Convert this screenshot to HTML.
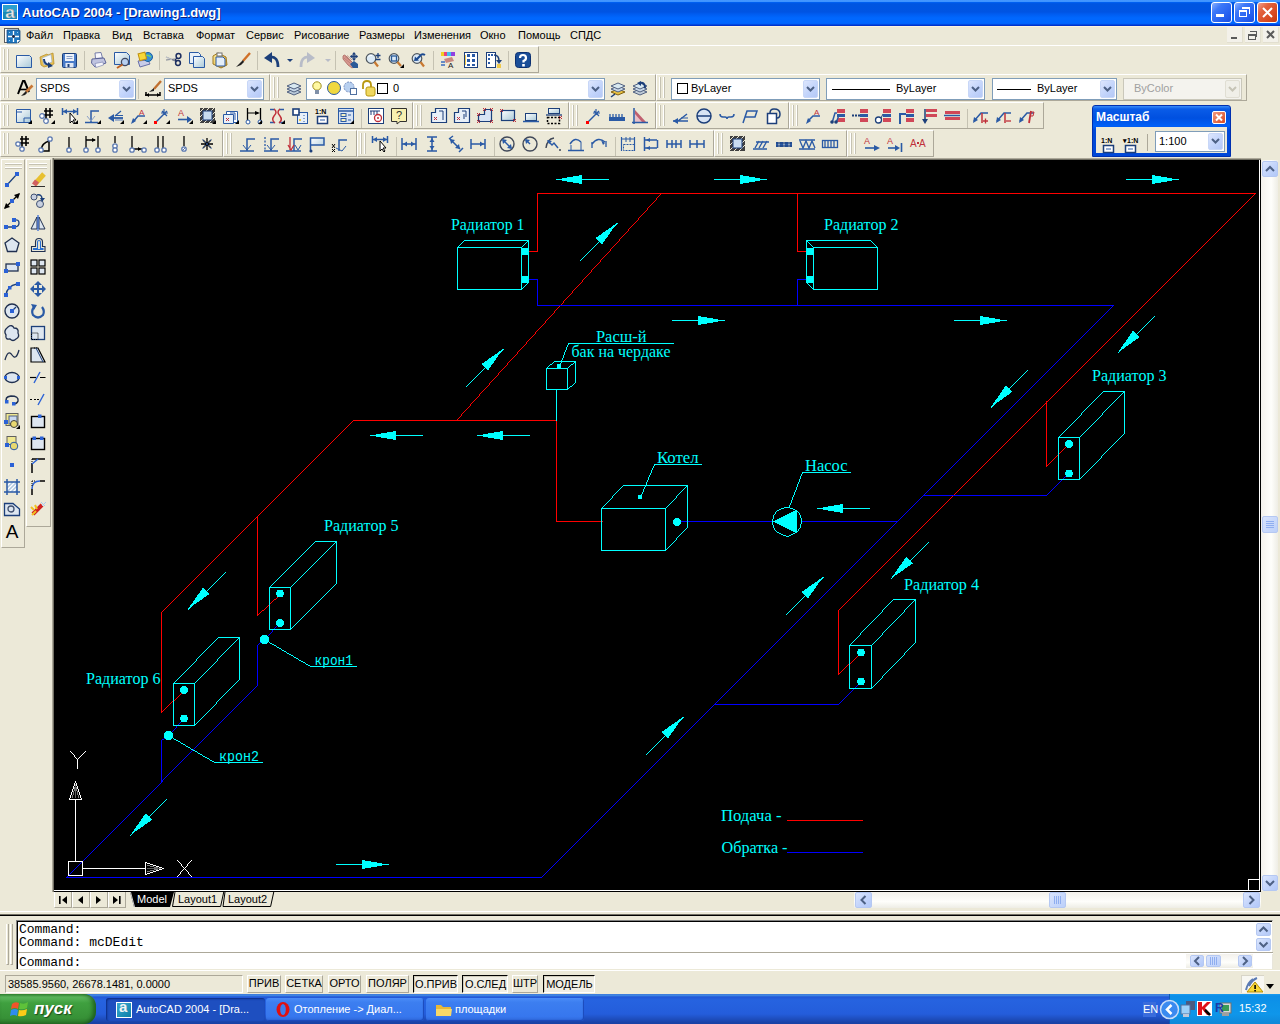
<!DOCTYPE html><html><head><meta charset="utf-8"><style>html,body{margin:0;padding:0}body{width:1280px;height:1024px;overflow:hidden;position:relative;background:#ECE9D8;font-family:"Liberation Sans",sans-serif}svg{display:block}</style></head><body><div style="position:absolute;left:0px;top:0px;width:1280px;height:26px;background:linear-gradient(to bottom,#4496FE 0px,#3D93FF 2px,#0066F8 2px,#0058E8 3px,#0055E0 4px,#0054E3 12px,#005CF0 14px,#0068FF 18px,#0066FF 23px,#0060F8 24px,#0033CC 25px,#0033CC 26px)"></div>
<svg style="position:absolute;left:2px;top:4px" width="16" height="16"><rect x="0" y="0" width="16" height="16" fill="#fff"/><rect x="1" y="1" width="14" height="14" fill="#1888B8"/><rect x="1" y="1" width="14" height="7" fill="#2AA0D0"/><text x="8" y="14" text-anchor="middle" font-family="Liberation Sans" font-weight="bold" font-size="17" fill="#E8ECEC" stroke="#808888" stroke-width="0.4">a</text></svg>
<div style="position:absolute;left:22px;top:5px;white-space:nowrap;line-height:normal;font:bold 13px 'Liberation Sans';letter-spacing:0px;color:#fff;text-shadow:1px 1px 0 #0A1E80">AutoCAD 2004 - [Drawing1.dwg]</div>
<div style="position:absolute;left:1211px;top:2px;width:21px;height:21px;box-sizing:border-box;border:1px solid #fff;border-radius:3px;background:linear-gradient(135deg,#8AB0FF 0%,#3C78F8 30%,#2660F0 70%,#1A4EE0 100%)"></div>
<div style="position:absolute;left:1216px;top:14px;width:8px;height:3px;background:#fff"></div>
<div style="position:absolute;left:1234px;top:2px;width:21px;height:21px;box-sizing:border-box;border:1px solid #fff;border-radius:3px;background:linear-gradient(135deg,#8AB0FF 0%,#3C78F8 30%,#2660F0 70%,#1A4EE0 100%)"></div>
<div style="position:absolute;left:1239px;top:10px;width:8px;height:7px;box-sizing:border-box;border:1px solid #fff;border-top-width:2px"></div>
<div style="position:absolute;left:1242px;top:7px;width:8px;height:7px;box-sizing:border-box;border:1px solid #fff;border-top-width:2px;border-left:none;border-bottom:none"></div>
<div style="position:absolute;left:1257px;top:2px;width:21px;height:21px;box-sizing:border-box;border:1px solid #fff;border-radius:3px;background:linear-gradient(135deg,#F0A090 0%,#E2623E 30%,#D84A22 70%,#C23A10 100%)"></div>
<svg style="position:absolute;left:1257px;top:2px" width="21" height="21"><path d="M6,6 L15,15 M15,6 L6,15" stroke="#fff" stroke-width="2"/></svg>
<div style="position:absolute;left:0px;top:26px;width:1280px;height:19px;background:#ECE9D8"></div>
<div style="position:absolute;left:0px;top:26px;width:1280px;height:1px;background:#FAF3E0"></div>
<div style="position:absolute;left:0px;top:45px;width:1280px;height:1px;background:#fff"></div>
<svg style="position:absolute;left:4px;top:28px" width="17" height="16"><rect x="0.5" y="0.5" width="14" height="14" fill="#fff" stroke="#606060"/><path d="M3,2 H15 Q16,2 16,3 V13 L13,15 H3 Z" fill="#1F78C0" stroke="#1A4A80" stroke-width="0.8"/><path d="M9.5,3 V14 M4,8.5 H15" stroke="#fff" stroke-width="1.3"/><circle cx="9.5" cy="8.5" r="1.4" fill="#102040"/><g fill="#9CD0F0"><rect x="5" y="4" width="1" height="1"/><rect x="13" y="4" width="1" height="1"/><rect x="5" y="12" width="1" height="1"/></g><path d="M13,15 L16,12 H13 Z" fill="#fff"/></svg>
<div style="position:absolute;left:26px;top:29px;white-space:nowrap;line-height:normal;font:11px 'Liberation Sans';color:#000">Файл</div>
<div style="position:absolute;left:63px;top:29px;white-space:nowrap;line-height:normal;font:11px 'Liberation Sans';color:#000">Правка</div>
<div style="position:absolute;left:112px;top:29px;white-space:nowrap;line-height:normal;font:11px 'Liberation Sans';color:#000">Вид</div>
<div style="position:absolute;left:143px;top:29px;white-space:nowrap;line-height:normal;font:11px 'Liberation Sans';color:#000">Вставка</div>
<div style="position:absolute;left:196px;top:29px;white-space:nowrap;line-height:normal;font:11px 'Liberation Sans';color:#000">Формат</div>
<div style="position:absolute;left:246px;top:29px;white-space:nowrap;line-height:normal;font:11px 'Liberation Sans';color:#000">Сервис</div>
<div style="position:absolute;left:294px;top:29px;white-space:nowrap;line-height:normal;font:11px 'Liberation Sans';color:#000">Рисование</div>
<div style="position:absolute;left:359px;top:29px;white-space:nowrap;line-height:normal;font:11px 'Liberation Sans';color:#000">Размеры</div>
<div style="position:absolute;left:414px;top:29px;white-space:nowrap;line-height:normal;font:11px 'Liberation Sans';color:#000">Изменения</div>
<div style="position:absolute;left:480px;top:29px;white-space:nowrap;line-height:normal;font:11px 'Liberation Sans';color:#000">Окно</div>
<div style="position:absolute;left:518px;top:29px;white-space:nowrap;line-height:normal;font:11px 'Liberation Sans';color:#000">Помощь</div>
<div style="position:absolute;left:570px;top:29px;white-space:nowrap;line-height:normal;font:11px 'Liberation Sans';color:#000">СПДС</div>
<div style="position:absolute;left:1227px;top:27px;width:16px;height:16px;box-sizing:border-box;background:#F3F1EA;border-right:1px solid #E2DFD0;border-bottom:1px solid #E2DFD0"></div>
<div style="position:absolute;left:1245px;top:27px;width:16px;height:16px;box-sizing:border-box;background:#F3F1EA;border-right:1px solid #E2DFD0;border-bottom:1px solid #E2DFD0"></div>
<div style="position:absolute;left:1263px;top:27px;width:16px;height:16px;box-sizing:border-box;background:#F3F1EA;border-right:1px solid #E2DFD0;border-bottom:1px solid #E2DFD0"></div>
<div style="position:absolute;left:1231px;top:37px;width:6px;height:2px;background:#5A5A5A"></div>
<div style="position:absolute;left:1248px;top:34px;width:8px;height:6px;box-sizing:border-box;border:1px solid #5A5A5A;border-top-width:2px"></div>
<div style="position:absolute;left:1250px;top:31px;width:7px;height:6px;box-sizing:border-box;border-top:1px solid #5A5A5A;border-right:1px solid #5A5A5A"></div>
<svg style="position:absolute;left:1263px;top:27px" width="16" height="16"><path d="M4,4 L11,11 M11,4 L4,11" stroke="#5A5A5A" stroke-width="2"/></svg>
<div style="position:absolute;left:0px;top:46px;width:1280px;height:114px;background:#ECE9D8"></div>
<div style="position:absolute;left:0px;top:45px;width:1280px;height:1px;background:#fff"></div>
<div style="position:absolute;left:0px;top:46px;width:539px;height:27px;box-sizing:border-box;background:#ECE9D8;border-top:1px solid #fff;border-left:1px solid #fff;border-right:1px solid #ACA899;border-bottom:1px solid #ACA899"></div><div style="position:absolute;left:3px;top:49px;width:2px;height:21px;background:linear-gradient(to right,#fff 50%,#C5C2B2 50%)"></div><div style="position:absolute;left:7px;top:49px;width:2px;height:21px;background:linear-gradient(to right,#fff 50%,#C5C2B2 50%)"></div>
<div style="position:absolute;left:0px;top:74px;width:270px;height:27px;box-sizing:border-box;background:#ECE9D8;border-top:1px solid #fff;border-left:1px solid #fff;border-right:1px solid #ACA899;border-bottom:1px solid #ACA899"></div><div style="position:absolute;left:3px;top:77px;width:2px;height:21px;background:linear-gradient(to right,#fff 50%,#C5C2B2 50%)"></div><div style="position:absolute;left:7px;top:77px;width:2px;height:21px;background:linear-gradient(to right,#fff 50%,#C5C2B2 50%)"></div>
<div style="position:absolute;left:270px;top:74px;width:386px;height:27px;box-sizing:border-box;background:#ECE9D8;border-top:1px solid #fff;border-left:1px solid #fff;border-right:1px solid #ACA899;border-bottom:1px solid #ACA899"></div><div style="position:absolute;left:273px;top:77px;width:2px;height:21px;background:linear-gradient(to right,#fff 50%,#C5C2B2 50%)"></div><div style="position:absolute;left:277px;top:77px;width:2px;height:21px;background:linear-gradient(to right,#fff 50%,#C5C2B2 50%)"></div>
<div style="position:absolute;left:656px;top:74px;width:591px;height:27px;box-sizing:border-box;background:#ECE9D8;border-top:1px solid #fff;border-left:1px solid #fff;border-right:1px solid #ACA899;border-bottom:1px solid #ACA899"></div><div style="position:absolute;left:659px;top:77px;width:2px;height:21px;background:linear-gradient(to right,#fff 50%,#C5C2B2 50%)"></div><div style="position:absolute;left:663px;top:77px;width:2px;height:21px;background:linear-gradient(to right,#fff 50%,#C5C2B2 50%)"></div>
<div style="position:absolute;left:0px;top:102px;width:413px;height:27px;box-sizing:border-box;background:#ECE9D8;border-top:1px solid #fff;border-left:1px solid #fff;border-right:1px solid #ACA899;border-bottom:1px solid #ACA899"></div><div style="position:absolute;left:3px;top:105px;width:2px;height:21px;background:linear-gradient(to right,#fff 50%,#C5C2B2 50%)"></div><div style="position:absolute;left:7px;top:105px;width:2px;height:21px;background:linear-gradient(to right,#fff 50%,#C5C2B2 50%)"></div>
<div style="position:absolute;left:413px;top:102px;width:156px;height:27px;box-sizing:border-box;background:#ECE9D8;border-top:1px solid #fff;border-left:1px solid #fff;border-right:1px solid #ACA899;border-bottom:1px solid #ACA899"></div><div style="position:absolute;left:416px;top:105px;width:2px;height:21px;background:linear-gradient(to right,#fff 50%,#C5C2B2 50%)"></div><div style="position:absolute;left:420px;top:105px;width:2px;height:21px;background:linear-gradient(to right,#fff 50%,#C5C2B2 50%)"></div>
<div style="position:absolute;left:569px;top:102px;width:87px;height:27px;box-sizing:border-box;background:#ECE9D8;border-top:1px solid #fff;border-left:1px solid #fff;border-right:1px solid #ACA899;border-bottom:1px solid #ACA899"></div><div style="position:absolute;left:572px;top:105px;width:2px;height:21px;background:linear-gradient(to right,#fff 50%,#C5C2B2 50%)"></div><div style="position:absolute;left:576px;top:105px;width:2px;height:21px;background:linear-gradient(to right,#fff 50%,#C5C2B2 50%)"></div>
<div style="position:absolute;left:656px;top:102px;width:133px;height:27px;box-sizing:border-box;background:#ECE9D8;border-top:1px solid #fff;border-left:1px solid #fff;border-right:1px solid #ACA899;border-bottom:1px solid #ACA899"></div><div style="position:absolute;left:659px;top:105px;width:2px;height:21px;background:linear-gradient(to right,#fff 50%,#C5C2B2 50%)"></div><div style="position:absolute;left:663px;top:105px;width:2px;height:21px;background:linear-gradient(to right,#fff 50%,#C5C2B2 50%)"></div>
<div style="position:absolute;left:789px;top:102px;width:255px;height:27px;box-sizing:border-box;background:#ECE9D8;border-top:1px solid #fff;border-left:1px solid #fff;border-right:1px solid #ACA899;border-bottom:1px solid #ACA899"></div><div style="position:absolute;left:792px;top:105px;width:2px;height:21px;background:linear-gradient(to right,#fff 50%,#C5C2B2 50%)"></div><div style="position:absolute;left:796px;top:105px;width:2px;height:21px;background:linear-gradient(to right,#fff 50%,#C5C2B2 50%)"></div>
<div style="position:absolute;left:0px;top:130px;width:223px;height:27px;box-sizing:border-box;background:#ECE9D8;border-top:1px solid #fff;border-left:1px solid #fff;border-right:1px solid #ACA899;border-bottom:1px solid #ACA899"></div><div style="position:absolute;left:3px;top:133px;width:2px;height:21px;background:linear-gradient(to right,#fff 50%,#C5C2B2 50%)"></div><div style="position:absolute;left:7px;top:133px;width:2px;height:21px;background:linear-gradient(to right,#fff 50%,#C5C2B2 50%)"></div>
<div style="position:absolute;left:223px;top:130px;width:134px;height:27px;box-sizing:border-box;background:#ECE9D8;border-top:1px solid #fff;border-left:1px solid #fff;border-right:1px solid #ACA899;border-bottom:1px solid #ACA899"></div><div style="position:absolute;left:226px;top:133px;width:2px;height:21px;background:linear-gradient(to right,#fff 50%,#C5C2B2 50%)"></div><div style="position:absolute;left:230px;top:133px;width:2px;height:21px;background:linear-gradient(to right,#fff 50%,#C5C2B2 50%)"></div>
<div style="position:absolute;left:357px;top:130px;width:357px;height:27px;box-sizing:border-box;background:#ECE9D8;border-top:1px solid #fff;border-left:1px solid #fff;border-right:1px solid #ACA899;border-bottom:1px solid #ACA899"></div><div style="position:absolute;left:360px;top:133px;width:2px;height:21px;background:linear-gradient(to right,#fff 50%,#C5C2B2 50%)"></div><div style="position:absolute;left:364px;top:133px;width:2px;height:21px;background:linear-gradient(to right,#fff 50%,#C5C2B2 50%)"></div>
<div style="position:absolute;left:714px;top:130px;width:133px;height:27px;box-sizing:border-box;background:#ECE9D8;border-top:1px solid #fff;border-left:1px solid #fff;border-right:1px solid #ACA899;border-bottom:1px solid #ACA899"></div><div style="position:absolute;left:717px;top:133px;width:2px;height:21px;background:linear-gradient(to right,#fff 50%,#C5C2B2 50%)"></div><div style="position:absolute;left:721px;top:133px;width:2px;height:21px;background:linear-gradient(to right,#fff 50%,#C5C2B2 50%)"></div>
<div style="position:absolute;left:847px;top:130px;width:87px;height:27px;box-sizing:border-box;background:#ECE9D8;border-top:1px solid #fff;border-left:1px solid #fff;border-right:1px solid #ACA899;border-bottom:1px solid #ACA899"></div><div style="position:absolute;left:850px;top:133px;width:2px;height:21px;background:linear-gradient(to right,#fff 50%,#C5C2B2 50%)"></div><div style="position:absolute;left:854px;top:133px;width:2px;height:21px;background:linear-gradient(to right,#fff 50%,#C5C2B2 50%)"></div>
<div style="position:absolute;left:36px;top:78px;width:100px;height:22px;box-sizing:border-box;background:#fff;border:1px solid #7F9DB9"></div><div style="position:absolute;left:119px;top:80px;width:15px;height:18px;box-sizing:border-box;border-radius:2px;background:linear-gradient(135deg,#DDE6FD 0%,#C1D3FB 60%,#B4C8F6 100%);border:1px solid #C8D7F7"></div><svg style="position:absolute;left:122px;top:86px" width="9" height="6"><polyline points="1,1 4.5,4.5 8,1" fill="none" stroke="#4D6185" stroke-width="2"/></svg><div style="position:absolute;left:40px;top:82px;white-space:nowrap;line-height:normal;font:11px 'Liberation Sans';color:#000">SPDS</div>
<div style="position:absolute;left:164px;top:78px;width:100px;height:22px;box-sizing:border-box;background:#fff;border:1px solid #7F9DB9"></div><div style="position:absolute;left:247px;top:80px;width:15px;height:18px;box-sizing:border-box;border-radius:2px;background:linear-gradient(135deg,#DDE6FD 0%,#C1D3FB 60%,#B4C8F6 100%);border:1px solid #C8D7F7"></div><svg style="position:absolute;left:250px;top:86px" width="9" height="6"><polyline points="1,1 4.5,4.5 8,1" fill="none" stroke="#4D6185" stroke-width="2"/></svg><div style="position:absolute;left:168px;top:82px;white-space:nowrap;line-height:normal;font:11px 'Liberation Sans';color:#000">SPDS</div>
<div style="position:absolute;left:306px;top:78px;width:299px;height:22px;box-sizing:border-box;background:#fff;border:1px solid #7F9DB9"></div><div style="position:absolute;left:588px;top:80px;width:15px;height:18px;box-sizing:border-box;border-radius:2px;background:linear-gradient(135deg,#DDE6FD 0%,#C1D3FB 60%,#B4C8F6 100%);border:1px solid #C8D7F7"></div><svg style="position:absolute;left:591px;top:86px" width="9" height="6"><polyline points="1,1 4.5,4.5 8,1" fill="none" stroke="#4D6185" stroke-width="2"/></svg><div style="position:absolute;left:310px;top:82px;white-space:nowrap;line-height:normal;font:11px 'Liberation Sans';color:#000"></div>
<div style="position:absolute;left:393px;top:82px;white-space:nowrap;line-height:normal;font:11px 'Liberation Sans';color:#000">0</div>
<div style="position:absolute;left:671px;top:78px;width:149px;height:22px;box-sizing:border-box;background:#fff;border:1px solid #7F9DB9"></div><div style="position:absolute;left:803px;top:80px;width:15px;height:18px;box-sizing:border-box;border-radius:2px;background:linear-gradient(135deg,#DDE6FD 0%,#C1D3FB 60%,#B4C8F6 100%);border:1px solid #C8D7F7"></div><svg style="position:absolute;left:806px;top:86px" width="9" height="6"><polyline points="1,1 4.5,4.5 8,1" fill="none" stroke="#4D6185" stroke-width="2"/></svg><div style="position:absolute;left:677px;top:83px;width:11px;height:11px;box-sizing:border-box;border:1px solid #000"></div><div style="position:absolute;left:691px;top:82px;white-space:nowrap;line-height:normal;font:11px 'Liberation Sans';color:#000">ByLayer</div>
<div style="position:absolute;left:826px;top:78px;width:159px;height:22px;box-sizing:border-box;background:#fff;border:1px solid #7F9DB9"></div><div style="position:absolute;left:968px;top:80px;width:15px;height:18px;box-sizing:border-box;border-radius:2px;background:linear-gradient(135deg,#DDE6FD 0%,#C1D3FB 60%,#B4C8F6 100%);border:1px solid #C8D7F7"></div><svg style="position:absolute;left:971px;top:86px" width="9" height="6"><polyline points="1,1 4.5,4.5 8,1" fill="none" stroke="#4D6185" stroke-width="2"/></svg><div style="position:absolute;left:830px;top:82px;white-space:nowrap;line-height:normal;font:11px 'Liberation Sans';color:#000"></div>
<div style="position:absolute;left:896px;top:82px;white-space:nowrap;line-height:normal;font:11px 'Liberation Sans';color:#000">ByLayer</div>
<div style="position:absolute;left:832px;top:89px;width:58px;height:1px;background:#000"></div>
<div style="position:absolute;left:992px;top:78px;width:125px;height:22px;box-sizing:border-box;background:#fff;border:1px solid #7F9DB9"></div><div style="position:absolute;left:1100px;top:80px;width:15px;height:18px;box-sizing:border-box;border-radius:2px;background:linear-gradient(135deg,#DDE6FD 0%,#C1D3FB 60%,#B4C8F6 100%);border:1px solid #C8D7F7"></div><svg style="position:absolute;left:1103px;top:86px" width="9" height="6"><polyline points="1,1 4.5,4.5 8,1" fill="none" stroke="#4D6185" stroke-width="2"/></svg><div style="position:absolute;left:996px;top:82px;white-space:nowrap;line-height:normal;font:11px 'Liberation Sans';color:#000"></div>
<div style="position:absolute;left:1037px;top:82px;white-space:nowrap;line-height:normal;font:11px 'Liberation Sans';color:#000">ByLayer</div>
<div style="position:absolute;left:997px;top:89px;width:34px;height:1px;background:#000"></div>
<div style="position:absolute;left:1123px;top:78px;width:119px;height:22px;box-sizing:border-box;background:#F4F3EE;border:1px solid #C9C7BA"></div><div style="position:absolute;left:1225px;top:80px;width:15px;height:18px;box-sizing:border-box;border-radius:2px;background:#F0EFE8;border:1px solid #E0DED3"></div><svg style="position:absolute;left:1228px;top:86px" width="9" height="6"><polyline points="1,1 4.5,4.5 8,1" fill="none" stroke="#C6C4B6" stroke-width="2"/></svg><div style="position:absolute;left:1127px;top:82px;white-space:nowrap;line-height:normal;font:11px 'Liberation Sans';color:#A0A0A0"></div>
<div style="position:absolute;left:1134px;top:82px;white-space:nowrap;line-height:normal;font:11px 'Liberation Sans';color:#A0A0A0">ByColor</div>
<div style="position:absolute;left:1092px;top:105px;width:139px;height:52px;box-sizing:border-box;background:linear-gradient(to bottom,#3A8CF8 0px,#0A5CE8 3px,#0050E0 12px,#0060F8 20px,#0048D8 24px);border-radius:3px 3px 0 0;border:1px solid #0030B0"></div>
<div style="position:absolute;left:1096px;top:127px;width:131px;height:26px;background:#ECE9D8"></div>
<div style="position:absolute;left:1096px;top:110px;white-space:nowrap;line-height:normal;font:bold 12px 'Liberation Sans';color:#fff">Масштаб</div>
<div style="position:absolute;left:1212px;top:111px;width:14px;height:13px;box-sizing:border-box;border:1px solid #fff;border-radius:2px;background:linear-gradient(135deg,#F09A80,#D84A20)"></div>
<svg style="position:absolute;left:1212px;top:111px" width="14" height="13"><path d="M4,3.5 L10,9.5 M10,3.5 L4,9.5" stroke="#fff" stroke-width="2"/></svg>
<div style="position:absolute;left:1155px;top:131px;width:70px;height:21px;box-sizing:border-box;background:#fff;border:1px solid #7F9DB9"></div><div style="position:absolute;left:1208px;top:133px;width:15px;height:17px;box-sizing:border-box;border-radius:2px;background:linear-gradient(135deg,#DDE6FD 0%,#C1D3FB 60%,#B4C8F6 100%);border:1px solid #C8D7F7"></div><svg style="position:absolute;left:1211px;top:138px" width="9" height="6"><polyline points="1,1 4.5,4.5 8,1" fill="none" stroke="#4D6185" stroke-width="2"/></svg><div style="position:absolute;left:1159px;top:135px;white-space:nowrap;line-height:normal;font:11px 'Liberation Sans';color:#000">1:100</div>
<div style="position:absolute;left:1147px;top:134px;width:1px;height:17px;background:#ACA899"></div>
<div style="position:absolute;left:0px;top:158px;width:54px;height:750px;background:#ECE9D8"></div>
<div style="position:absolute;left:1px;top:159px;width:24px;height:389px;box-sizing:border-box;border-top:1px solid #fff;border-left:1px solid #fff;border-right:1px solid #ACA899;border-bottom:1px solid #ACA899"></div>
<div style="position:absolute;left:26px;top:159px;width:25px;height:368px;box-sizing:border-box;border-top:1px solid #fff;border-left:1px solid #fff;border-right:1px solid #ACA899;border-bottom:1px solid #ACA899"></div>
<div style="position:absolute;left:5px;top:163px;width:17px;height:2px;background:linear-gradient(to bottom,#fff 50%,#C5C2B2 50%)"></div><div style="position:absolute;left:5px;top:167px;width:17px;height:2px;background:linear-gradient(to bottom,#fff 50%,#C5C2B2 50%)"></div>
<div style="position:absolute;left:29px;top:163px;width:18px;height:2px;background:linear-gradient(to bottom,#fff 50%,#C5C2B2 50%)"></div><div style="position:absolute;left:29px;top:167px;width:18px;height:2px;background:linear-gradient(to bottom,#fff 50%,#C5C2B2 50%)"></div>
<div style="position:absolute;left:52px;top:158px;width:1209px;height:2px;background:linear-gradient(to bottom,#ACA899 50%,#716F64 50%)"></div>
<div style="position:absolute;left:52px;top:158px;width:2px;height:734px;background:linear-gradient(to right,#ACA899 50%,#716F64 50%)"></div>
<div style="position:absolute;left:54px;top:160px;width:1207px;height:732px;background:#000"></div>
<div style="position:absolute;left:1261px;top:158px;width:19px;height:750px;background:#ECE9D8"></div>
<div style="position:absolute;left:1261px;top:160px;width:17px;height:731px;background:linear-gradient(to right,#F3F1EC,#FEFEFB 60%,#EEEDE5)"></div>
<svg style="position:absolute;left:54px;top:160px" width="1207" height="732" viewBox="54 160 1207 732" shape-rendering="crispEdges"><polygon points="772.5,521.5 796.5,509.5 796.5,533.5" fill="#00FFFF"/><polygon points="556,179.5 582.0,174.9 582.0,184.1" fill="#00FFFF"/><polygon points="766,179.5 740.0,184.1 740.0,174.9" fill="#00FFFF"/><polygon points="1178,179.5 1152.0,184.1 1152.0,174.9" fill="#00FFFF"/><polygon points="617,223 601.8679148826078,244.63746750430835 595.3625324956917,238.13208511739214" fill="#00FFFF"/><polygon points="724,320.5 698.0,325.1 698.0,315.9" fill="#00FFFF"/><polygon points="1006,320.5 980.0,325.1 980.0,315.9" fill="#00FFFF"/><polygon points="1118,352.5 1132.9825049056676,330.7586903165508 1139.5325962314369,337.2190543638847" fill="#00FFFF"/><polygon points="503,349 487.8679148826079,370.63746750430835 481.36253249569165,364.1320851173921" fill="#00FFFF"/><polygon points="370,435.5 396.0,430.9 396.0,440.1" fill="#00FFFF"/><polygon points="477,435.5 503.0,430.9 503.0,440.1" fill="#00FFFF"/><polygon points="991,407 1005.9845447449164,385.26009616425137 1012.5340298902291,391.72107475354636" fill="#00FFFF"/><polygon points="817,508.5 843.0,503.9 843.0,513.1" fill="#00FFFF"/><polygon points="823,577 807.8679148826078,598.6374675043083 801.3625324956917,592.1320851173922" fill="#00FFFF"/><polygon points="891,578.5 906.2789252464537,556.9659701097709 912.7399038357486,563.5154552550836" fill="#00FFFF"/><polygon points="188,609 203.13208511739214,587.3625324956917 209.63746750430835,593.8679148826078" fill="#00FFFF"/><polygon points="683,717 667.8679148826078,738.6374675043083 661.3625324956917,732.1320851173922" fill="#00FFFF"/><polygon points="130.5,835 145.63208511739214,813.3625324956917 152.13746750430835,819.8679148826078" fill="#00FFFF"/><polygon points="388,864.5 362.0,869.1 362.0,859.9" fill="#00FFFF"/><text x="451" y="230" fill="#00FFFF" font-family="Liberation Serif" font-size="16" textLength="73.5" lengthAdjust="spacingAndGlyphs">Радиатор 1</text><text x="824" y="230" fill="#00FFFF" font-family="Liberation Serif" font-size="16" textLength="74.5" lengthAdjust="spacingAndGlyphs">Радиатор 2</text><text x="1092" y="381" fill="#00FFFF" font-family="Liberation Serif" font-size="16" textLength="74.5" lengthAdjust="spacingAndGlyphs">Радиатор 3</text><text x="904" y="590" fill="#00FFFF" font-family="Liberation Serif" font-size="16" textLength="75.0" lengthAdjust="spacingAndGlyphs">Радиатор 4</text><text x="324" y="531" fill="#00FFFF" font-family="Liberation Serif" font-size="16" textLength="74.5" lengthAdjust="spacingAndGlyphs">Радиатор 5</text><text x="86" y="684" fill="#00FFFF" font-family="Liberation Serif" font-size="16" textLength="74.5" lengthAdjust="spacingAndGlyphs">Радиатор 6</text><text x="596" y="342" fill="#00FFFF" font-family="Liberation Serif" font-size="16" textLength="50.5" lengthAdjust="spacingAndGlyphs">Расш-й</text><text x="571.5" y="357" fill="#00FFFF" font-family="Liberation Serif" font-size="16" textLength="99.0" lengthAdjust="spacingAndGlyphs">бак на чердаке</text><text x="657" y="463" fill="#00FFFF" font-family="Liberation Serif" font-size="16" textLength="41.5" lengthAdjust="spacingAndGlyphs">Котел</text><text x="805" y="471" fill="#00FFFF" font-family="Liberation Serif" font-size="16" textLength="42.5" lengthAdjust="spacingAndGlyphs">Насос</text><text x="721" y="821" fill="#00FFFF" font-family="Liberation Serif" font-size="16" textLength="60.5" lengthAdjust="spacingAndGlyphs">Подача -</text><text x="721.5" y="853" fill="#00FFFF" font-family="Liberation Serif" font-size="16" textLength="66.0" lengthAdjust="spacingAndGlyphs">Обратка -</text><text x="219" y="761" fill="#00FFFF" font-family="Liberation Mono" font-size="15" textLength="40" lengthAdjust="spacingAndGlyphs">крон2</text><text x="314.5" y="665" fill="#00FFFF" font-family="Liberation Mono" font-size="15" textLength="38.5" lengthAdjust="spacingAndGlyphs">крон1</text><path d="M537,193h719v1h-719zM537,194h1v1h-1zM660,194h1v1h-1zM797,194h1v1h-1zM1254,194h1v1h-1zM537,195h1v1h-1zM659,195h1v1h-1zM797,195h1v1h-1zM1253,195h1v1h-1zM537,196h1v1h-1zM658,196h1v1h-1zM797,196h1v1h-1zM1252,196h1v1h-1zM537,197h1v1h-1zM657,197h1v1h-1zM797,197h1v1h-1zM1251,197h1v1h-1zM537,198h1v1h-1zM656,198h1v1h-1zM797,198h1v1h-1zM1250,198h1v1h-1zM537,199h1v1h-1zM656,199h1v1h-1zM797,199h1v1h-1zM1249,199h1v1h-1zM537,200h1v1h-1zM655,200h1v1h-1zM797,200h1v1h-1zM1248,200h1v1h-1zM537,201h1v1h-1zM654,201h1v1h-1zM797,201h1v1h-1zM1247,201h1v1h-1zM537,202h1v1h-1zM653,202h1v1h-1zM797,202h1v1h-1zM1246,202h1v1h-1zM537,203h1v1h-1zM652,203h1v1h-1zM797,203h1v1h-1zM1245,203h1v1h-1zM537,204h1v1h-1zM651,204h1v1h-1zM797,204h1v1h-1zM1244,204h1v1h-1zM537,205h1v1h-1zM650,205h1v1h-1zM797,205h1v1h-1zM1243,205h1v1h-1zM537,206h1v1h-1zM649,206h1v1h-1zM797,206h1v1h-1zM1242,206h1v1h-1zM537,207h1v1h-1zM648,207h1v1h-1zM797,207h1v1h-1zM1241,207h1v1h-1zM537,208h1v1h-1zM647,208h1v1h-1zM797,208h1v1h-1zM1240,208h1v1h-1zM537,209h1v1h-1zM647,209h1v1h-1zM797,209h1v1h-1zM1239,209h1v1h-1zM537,210h1v1h-1zM646,210h1v1h-1zM797,210h1v1h-1zM1238,210h1v1h-1zM537,211h1v1h-1zM645,211h1v1h-1zM797,211h1v1h-1zM1237,211h1v1h-1zM537,212h1v1h-1zM644,212h1v1h-1zM797,212h1v1h-1zM1236,212h1v1h-1zM537,213h1v1h-1zM643,213h1v1h-1zM797,213h1v1h-1zM1235,213h1v1h-1zM537,214h1v1h-1zM642,214h1v1h-1zM797,214h1v1h-1zM1234,214h1v1h-1zM537,215h1v1h-1zM641,215h1v1h-1zM797,215h1v1h-1zM1233,215h1v1h-1zM537,216h1v1h-1zM640,216h1v1h-1zM797,216h1v1h-1zM1232,216h1v1h-1zM537,217h1v1h-1zM639,217h1v1h-1zM797,217h1v1h-1zM1231,217h1v1h-1zM537,218h1v1h-1zM638,218h1v1h-1zM797,218h1v1h-1zM1230,218h1v1h-1zM537,219h1v1h-1zM638,219h1v1h-1zM797,219h1v1h-1zM1229,219h1v1h-1zM537,220h1v1h-1zM637,220h1v1h-1zM797,220h1v1h-1zM1228,220h1v1h-1zM537,221h1v1h-1zM636,221h1v1h-1zM797,221h1v1h-1zM1227,221h1v1h-1zM537,222h1v1h-1zM635,222h1v1h-1zM797,222h1v1h-1zM1226,222h1v1h-1zM537,223h1v1h-1zM634,223h1v1h-1zM797,223h1v1h-1zM1225,223h1v1h-1zM537,224h1v1h-1zM633,224h1v1h-1zM797,224h1v1h-1zM1224,224h1v1h-1zM537,225h1v1h-1zM632,225h1v1h-1zM797,225h1v1h-1zM1223,225h1v1h-1zM537,226h1v1h-1zM631,226h1v1h-1zM797,226h1v1h-1zM1222,226h1v1h-1zM537,227h1v1h-1zM630,227h1v1h-1zM797,227h1v1h-1zM1221,227h1v1h-1zM537,228h1v1h-1zM629,228h1v1h-1zM797,228h1v1h-1zM1220,228h1v1h-1zM537,229h1v1h-1zM628,229h1v1h-1zM797,229h1v1h-1zM1219,229h1v1h-1zM537,230h1v1h-1zM628,230h1v1h-1zM797,230h1v1h-1zM1218,230h1v1h-1zM537,231h1v1h-1zM627,231h1v1h-1zM797,231h1v1h-1zM1217,231h1v1h-1zM537,232h1v1h-1zM626,232h1v1h-1zM797,232h1v1h-1zM1216,232h1v1h-1zM537,233h1v1h-1zM625,233h1v1h-1zM797,233h1v1h-1zM1215,233h1v1h-1zM537,234h1v1h-1zM624,234h1v1h-1zM797,234h1v1h-1zM1214,234h1v1h-1zM537,235h1v1h-1zM623,235h1v1h-1zM797,235h1v1h-1zM1213,235h1v1h-1zM537,236h1v1h-1zM622,236h1v1h-1zM797,236h1v1h-1zM1212,236h1v1h-1zM537,237h1v1h-1zM621,237h1v1h-1zM797,237h1v1h-1zM1211,237h1v1h-1zM537,238h1v1h-1zM620,238h1v1h-1zM797,238h1v1h-1zM1210,238h1v1h-1zM537,239h1v1h-1zM619,239h1v1h-1zM797,239h1v1h-1zM1209,239h1v1h-1zM537,240h1v1h-1zM619,240h1v1h-1zM797,240h1v1h-1zM1208,240h1v1h-1zM537,241h1v1h-1zM618,241h1v1h-1zM797,241h1v1h-1zM1207,241h1v1h-1zM537,242h1v1h-1zM617,242h1v1h-1zM797,242h1v1h-1zM1206,242h1v1h-1zM537,243h1v1h-1zM616,243h1v1h-1zM797,243h1v1h-1zM1205,243h1v1h-1zM537,244h1v1h-1zM615,244h1v1h-1zM797,244h1v1h-1zM1204,244h1v1h-1zM537,245h1v1h-1zM614,245h1v1h-1zM797,245h1v1h-1zM1203,245h1v1h-1zM537,246h1v1h-1zM613,246h1v1h-1zM797,246h1v1h-1zM1202,246h1v1h-1zM537,247h1v1h-1zM612,247h1v1h-1zM797,247h1v1h-1zM1201,247h1v1h-1zM537,248h1v1h-1zM611,248h1v1h-1zM797,248h1v1h-1zM1200,248h1v1h-1zM537,249h1v1h-1zM610,249h1v1h-1zM797,249h1v1h-1zM1199,249h1v1h-1zM537,250h1v1h-1zM610,250h1v1h-1zM797,250h1v1h-1zM1198,250h1v1h-1zM527,251h11v1h-11zM609,251h1v1h-1zM797,251h15v1h-15zM1197,251h1v1h-1zM608,252h1v1h-1zM1196,252h1v1h-1zM607,253h1v1h-1zM1195,253h1v1h-1zM606,254h1v1h-1zM1194,254h1v1h-1zM605,255h1v1h-1zM1193,255h1v1h-1zM604,256h1v1h-1zM1192,256h1v1h-1zM603,257h1v1h-1zM1191,257h1v1h-1zM602,258h1v1h-1zM1190,258h1v1h-1zM601,259h1v1h-1zM1189,259h1v1h-1zM600,260h1v1h-1zM1188,260h1v1h-1zM600,261h1v1h-1zM1187,261h1v1h-1zM599,262h1v1h-1zM1186,262h1v1h-1zM598,263h1v1h-1zM1185,263h1v1h-1zM597,264h1v1h-1zM1184,264h1v1h-1zM596,265h1v1h-1zM1183,265h1v1h-1zM595,266h1v1h-1zM1182,266h1v1h-1zM594,267h1v1h-1zM1181,267h1v1h-1zM593,268h1v1h-1zM1180,268h1v1h-1zM592,269h1v1h-1zM1179,269h1v1h-1zM591,270h1v1h-1zM1178,270h1v1h-1zM591,271h1v1h-1zM1177,271h1v1h-1zM590,272h1v1h-1zM1176,272h1v1h-1zM589,273h1v1h-1zM1175,273h1v1h-1zM588,274h1v1h-1zM1174,274h1v1h-1zM587,275h1v1h-1zM1173,275h1v1h-1zM586,276h1v1h-1zM1172,276h1v1h-1zM585,277h1v1h-1zM1171,277h1v1h-1zM584,278h1v1h-1zM1170,278h1v1h-1zM583,279h1v1h-1zM1169,279h1v1h-1zM582,280h1v1h-1zM1168,280h1v1h-1zM582,281h1v1h-1zM1167,281h1v1h-1zM581,282h1v1h-1zM1166,282h1v1h-1zM580,283h1v1h-1zM1165,283h1v1h-1zM579,284h1v1h-1zM1164,284h1v1h-1zM578,285h1v1h-1zM1163,285h1v1h-1zM577,286h1v1h-1zM1162,286h1v1h-1zM576,287h1v1h-1zM1161,287h1v1h-1zM575,288h1v1h-1zM1160,288h1v1h-1zM574,289h1v1h-1zM1159,289h1v1h-1zM573,290h1v1h-1zM1158,290h1v1h-1zM572,291h1v1h-1zM1157,291h1v1h-1zM572,292h1v1h-1zM1156,292h1v1h-1zM571,293h1v1h-1zM1155,293h1v1h-1zM570,294h1v1h-1zM1154,294h1v1h-1zM569,295h1v1h-1zM1153,295h1v1h-1zM568,296h1v1h-1zM1152,296h1v1h-1zM567,297h1v1h-1zM1151,297h1v1h-1zM566,298h1v1h-1zM1150,298h1v1h-1zM565,299h1v1h-1zM1149,299h1v1h-1zM564,300h1v1h-1zM1148,300h1v1h-1zM563,301h1v1h-1zM1147,301h1v1h-1zM563,302h1v1h-1zM1146,302h1v1h-1zM562,303h1v1h-1zM1145,303h1v1h-1zM561,304h1v1h-1zM1144,304h1v1h-1zM560,305h1v1h-1zM1143,305h1v1h-1zM559,306h1v1h-1zM1142,306h1v1h-1zM558,307h1v1h-1zM1141,307h1v1h-1zM557,308h1v1h-1zM1140,308h1v1h-1zM556,309h1v1h-1zM1139,309h1v1h-1zM555,310h1v1h-1zM1138,310h1v1h-1zM554,311h1v1h-1zM1137,311h1v1h-1zM554,312h1v1h-1zM1136,312h1v1h-1zM553,313h1v1h-1zM1135,313h1v1h-1zM552,314h1v1h-1zM1134,314h1v1h-1zM551,315h1v1h-1zM1133,315h1v1h-1zM550,316h1v1h-1zM1132,316h1v1h-1zM549,317h1v1h-1zM1131,317h1v1h-1zM548,318h1v1h-1zM1130,318h1v1h-1zM547,319h1v1h-1zM1129,319h1v1h-1zM546,320h1v1h-1zM1128,320h1v1h-1zM545,321h1v1h-1zM1127,321h1v1h-1zM545,322h1v1h-1zM1126,322h1v1h-1zM544,323h1v1h-1zM1125,323h1v1h-1zM543,324h1v1h-1zM1124,324h1v1h-1zM542,325h1v1h-1zM1123,325h1v1h-1zM541,326h1v1h-1zM1122,326h1v1h-1zM540,327h1v1h-1zM1121,327h1v1h-1zM539,328h1v1h-1zM1120,328h1v1h-1zM538,329h1v1h-1zM1119,329h1v1h-1zM537,330h1v1h-1zM1118,330h1v1h-1zM536,331h1v1h-1zM1117,331h1v1h-1zM535,332h1v1h-1zM1116,332h1v1h-1zM535,333h1v1h-1zM1115,333h1v1h-1zM534,334h1v1h-1zM1114,334h1v1h-1zM533,335h1v1h-1zM1113,335h1v1h-1zM532,336h1v1h-1zM1112,336h1v1h-1zM531,337h1v1h-1zM1111,337h1v1h-1zM530,338h1v1h-1zM1110,338h1v1h-1zM529,339h1v1h-1zM1109,339h1v1h-1zM528,340h1v1h-1zM1108,340h1v1h-1zM527,341h1v1h-1zM1107,341h1v1h-1zM526,342h1v1h-1zM1106,342h1v1h-1zM526,343h1v1h-1zM1105,343h1v1h-1zM525,344h1v1h-1zM1104,344h1v1h-1zM524,345h1v1h-1zM1103,345h1v1h-1zM523,346h1v1h-1zM1102,346h1v1h-1zM522,347h1v1h-1zM1101,347h1v1h-1zM521,348h1v1h-1zM1100,348h1v1h-1zM520,349h1v1h-1zM1099,349h1v1h-1zM519,350h1v1h-1zM1098,350h1v1h-1zM518,351h1v1h-1zM1097,351h1v1h-1zM517,352h1v1h-1zM1096,352h1v1h-1zM517,353h1v1h-1zM1095,353h1v1h-1zM516,354h1v1h-1zM1094,354h1v1h-1zM515,355h1v1h-1zM1093,355h1v1h-1zM514,356h1v1h-1zM1092,356h1v1h-1zM513,357h1v1h-1zM1091,357h1v1h-1zM512,358h1v1h-1zM1090,358h1v1h-1zM511,359h1v1h-1zM1089,359h1v1h-1zM510,360h1v1h-1zM1088,360h1v1h-1zM509,361h1v1h-1zM1087,361h1v1h-1zM508,362h1v1h-1zM1086,362h1v1h-1zM507,363h1v1h-1zM1085,363h1v1h-1zM507,364h1v1h-1zM1084,364h1v1h-1zM506,365h1v1h-1zM1083,365h1v1h-1zM505,366h1v1h-1zM1082,366h1v1h-1zM504,367h1v1h-1zM1081,367h1v1h-1zM503,368h1v1h-1zM1080,368h1v1h-1zM502,369h1v1h-1zM1079,369h1v1h-1zM501,370h1v1h-1zM1078,370h1v1h-1zM500,371h1v1h-1zM1077,371h1v1h-1zM499,372h1v1h-1zM1076,372h1v1h-1zM498,373h1v1h-1zM1075,373h1v1h-1zM498,374h1v1h-1zM1074,374h1v1h-1zM497,375h1v1h-1zM1073,375h1v1h-1zM496,376h1v1h-1zM1072,376h1v1h-1zM495,377h1v1h-1zM1071,377h1v1h-1zM494,378h1v1h-1zM1070,378h1v1h-1zM493,379h1v1h-1zM1069,379h1v1h-1zM492,380h1v1h-1zM1068,380h1v1h-1zM491,381h1v1h-1zM1067,381h1v1h-1zM490,382h1v1h-1zM1066,382h1v1h-1zM489,383h1v1h-1zM1065,383h1v1h-1zM489,384h1v1h-1zM1064,384h1v1h-1zM488,385h1v1h-1zM1063,385h1v1h-1zM487,386h1v1h-1zM1062,386h1v1h-1zM486,387h1v1h-1zM1061,387h1v1h-1zM485,388h1v1h-1zM1060,388h1v1h-1zM484,389h1v1h-1zM1059,389h1v1h-1zM483,390h1v1h-1zM1058,390h1v1h-1zM482,391h1v1h-1zM1057,391h1v1h-1zM481,392h1v1h-1zM1056,392h1v1h-1zM480,393h1v1h-1zM1055,393h1v1h-1zM479,394h1v1h-1zM1054,394h1v1h-1zM479,395h1v1h-1zM1053,395h1v1h-1zM478,396h1v1h-1zM1052,396h1v1h-1zM477,397h1v1h-1zM1051,397h1v1h-1zM476,398h1v1h-1zM1050,398h1v1h-1zM475,399h1v1h-1zM1049,399h1v1h-1zM474,400h1v1h-1zM1048,400h1v1h-1zM473,401h1v1h-1zM1046,401h2v1h-2zM472,402h1v1h-1zM1046,402h1v1h-1zM471,403h1v1h-1zM1045,403h2v1h-2zM470,404h1v1h-1zM1044,404h1v1h-1zM1046,404h1v1h-1zM470,405h1v1h-1zM1043,405h1v1h-1zM1046,405h1v1h-1zM469,406h1v1h-1zM1042,406h1v1h-1zM1046,406h1v1h-1zM468,407h1v1h-1zM1041,407h1v1h-1zM1046,407h1v1h-1zM467,408h1v1h-1zM1040,408h1v1h-1zM1046,408h1v1h-1zM466,409h1v1h-1zM1039,409h1v1h-1zM1046,409h1v1h-1zM465,410h1v1h-1zM1038,410h1v1h-1zM1046,410h1v1h-1zM464,411h1v1h-1zM1037,411h1v1h-1zM1046,411h1v1h-1zM463,412h1v1h-1zM1036,412h1v1h-1zM1046,412h1v1h-1zM462,413h1v1h-1zM1035,413h1v1h-1zM1046,413h1v1h-1zM461,414h1v1h-1zM1034,414h1v1h-1zM1046,414h1v1h-1zM461,415h1v1h-1zM1033,415h1v1h-1zM1046,415h1v1h-1zM460,416h1v1h-1zM1032,416h1v1h-1zM1046,416h1v1h-1zM459,417h1v1h-1zM1031,417h1v1h-1zM1046,417h1v1h-1zM458,418h1v1h-1zM1030,418h1v1h-1zM1046,418h1v1h-1zM457,419h1v1h-1zM1029,419h1v1h-1zM1046,419h1v1h-1zM353,420h204v1h-204zM1028,420h1v1h-1zM1046,420h1v1h-1zM352,421h1v1h-1zM556,421h1v1h-1zM1027,421h1v1h-1zM1046,421h1v1h-1zM351,422h1v1h-1zM556,422h1v1h-1zM1026,422h1v1h-1zM1046,422h1v1h-1zM350,423h1v1h-1zM556,423h1v1h-1zM1025,423h1v1h-1zM1046,423h1v1h-1zM349,424h1v1h-1zM556,424h1v1h-1zM1024,424h1v1h-1zM1046,424h1v1h-1zM348,425h1v1h-1zM556,425h1v1h-1zM1023,425h1v1h-1zM1046,425h1v1h-1zM347,426h1v1h-1zM556,426h1v1h-1zM1022,426h1v1h-1zM1046,426h1v1h-1zM346,427h1v1h-1zM556,427h1v1h-1zM1021,427h1v1h-1zM1046,427h1v1h-1zM345,428h1v1h-1zM556,428h1v1h-1zM1020,428h1v1h-1zM1046,428h1v1h-1zM344,429h1v1h-1zM556,429h1v1h-1zM1019,429h1v1h-1zM1046,429h1v1h-1zM343,430h1v1h-1zM556,430h1v1h-1zM1018,430h1v1h-1zM1046,430h1v1h-1zM342,431h1v1h-1zM556,431h1v1h-1zM1017,431h1v1h-1zM1046,431h1v1h-1zM341,432h1v1h-1zM556,432h1v1h-1zM1016,432h1v1h-1zM1046,432h1v1h-1zM340,433h1v1h-1zM556,433h1v1h-1zM1015,433h1v1h-1zM1046,433h1v1h-1zM339,434h1v1h-1zM556,434h1v1h-1zM1014,434h1v1h-1zM1046,434h1v1h-1zM338,435h1v1h-1zM556,435h1v1h-1zM1013,435h1v1h-1zM1046,435h1v1h-1zM337,436h1v1h-1zM556,436h1v1h-1zM1012,436h1v1h-1zM1046,436h1v1h-1zM336,437h1v1h-1zM556,437h1v1h-1zM1011,437h1v1h-1zM1046,437h1v1h-1zM335,438h1v1h-1zM556,438h1v1h-1zM1010,438h1v1h-1zM1046,438h1v1h-1zM334,439h1v1h-1zM556,439h1v1h-1zM1009,439h1v1h-1zM1046,439h1v1h-1zM333,440h1v1h-1zM556,440h1v1h-1zM1008,440h1v1h-1zM1046,440h1v1h-1zM332,441h1v1h-1zM556,441h1v1h-1zM1007,441h1v1h-1zM1046,441h1v1h-1zM331,442h1v1h-1zM556,442h1v1h-1zM1006,442h1v1h-1zM1046,442h1v1h-1zM330,443h1v1h-1zM556,443h1v1h-1zM1005,443h1v1h-1zM1046,443h1v1h-1zM1069,443h1v1h-1zM329,444h1v1h-1zM556,444h1v1h-1zM1004,444h1v1h-1zM1046,444h1v1h-1zM1068,444h1v1h-1zM328,445h1v1h-1zM556,445h1v1h-1zM1003,445h1v1h-1zM1046,445h1v1h-1zM1067,445h1v1h-1zM327,446h1v1h-1zM556,446h1v1h-1zM1002,446h1v1h-1zM1046,446h1v1h-1zM1066,446h1v1h-1zM326,447h1v1h-1zM556,447h1v1h-1zM1001,447h1v1h-1zM1046,447h1v1h-1zM1065,447h1v1h-1zM325,448h1v1h-1zM556,448h1v1h-1zM1000,448h1v1h-1zM1046,448h1v1h-1zM1064,448h1v1h-1zM324,449h1v1h-1zM556,449h1v1h-1zM999,449h1v1h-1zM1046,449h1v1h-1zM1063,449h1v1h-1zM323,450h1v1h-1zM556,450h1v1h-1zM998,450h1v1h-1zM1046,450h1v1h-1zM1062,450h1v1h-1zM322,451h1v1h-1zM556,451h1v1h-1zM997,451h1v1h-1zM1046,451h1v1h-1zM1061,451h1v1h-1zM321,452h1v1h-1zM556,452h1v1h-1zM996,452h1v1h-1zM1046,452h1v1h-1zM1060,452h1v1h-1zM320,453h1v1h-1zM556,453h1v1h-1zM995,453h1v1h-1zM1046,453h1v1h-1zM1059,453h1v1h-1zM319,454h1v1h-1zM556,454h1v1h-1zM994,454h1v1h-1zM1046,454h1v1h-1zM1058,454h1v1h-1zM318,455h1v1h-1zM556,455h1v1h-1zM993,455h1v1h-1zM1046,455h1v1h-1zM1057,455h1v1h-1zM317,456h1v1h-1zM556,456h1v1h-1zM992,456h1v1h-1zM1046,456h1v1h-1zM1056,456h1v1h-1zM316,457h1v1h-1zM556,457h1v1h-1zM991,457h1v1h-1zM1046,457h1v1h-1zM1055,457h1v1h-1zM315,458h1v1h-1zM556,458h1v1h-1zM990,458h1v1h-1zM1046,458h1v1h-1zM1054,458h1v1h-1zM314,459h1v1h-1zM556,459h1v1h-1zM989,459h1v1h-1zM1046,459h1v1h-1zM1053,459h1v1h-1zM313,460h1v1h-1zM556,460h1v1h-1zM988,460h1v1h-1zM1046,460h1v1h-1zM1052,460h1v1h-1zM312,461h1v1h-1zM556,461h1v1h-1zM987,461h1v1h-1zM1046,461h1v1h-1zM1051,461h1v1h-1zM311,462h1v1h-1zM556,462h1v1h-1zM986,462h1v1h-1zM1046,462h1v1h-1zM1050,462h1v1h-1zM310,463h1v1h-1zM556,463h1v1h-1zM985,463h1v1h-1zM1046,463h1v1h-1zM1049,463h1v1h-1zM309,464h1v1h-1zM556,464h1v1h-1zM984,464h1v1h-1zM1046,464h1v1h-1zM1048,464h1v1h-1zM308,465h1v1h-1zM556,465h1v1h-1zM983,465h1v1h-1zM1046,465h2v1h-2zM307,466h1v1h-1zM556,466h1v1h-1zM982,466h1v1h-1zM1046,466h1v1h-1zM306,467h1v1h-1zM556,467h1v1h-1zM981,467h1v1h-1zM305,468h1v1h-1zM556,468h1v1h-1zM980,468h1v1h-1zM304,469h1v1h-1zM556,469h1v1h-1zM979,469h1v1h-1zM303,470h1v1h-1zM556,470h1v1h-1zM978,470h1v1h-1zM302,471h1v1h-1zM556,471h1v1h-1zM977,471h1v1h-1zM301,472h1v1h-1zM556,472h1v1h-1zM976,472h1v1h-1zM300,473h1v1h-1zM556,473h1v1h-1zM975,473h1v1h-1zM299,474h1v1h-1zM556,474h1v1h-1zM974,474h1v1h-1zM298,475h1v1h-1zM556,475h1v1h-1zM973,475h1v1h-1zM297,476h1v1h-1zM556,476h1v1h-1zM972,476h1v1h-1zM296,477h1v1h-1zM556,477h1v1h-1zM971,477h1v1h-1zM295,478h1v1h-1zM556,478h1v1h-1zM970,478h1v1h-1zM294,479h1v1h-1zM556,479h1v1h-1zM969,479h1v1h-1zM293,480h1v1h-1zM556,480h1v1h-1zM968,480h1v1h-1zM292,481h1v1h-1zM556,481h1v1h-1zM967,481h1v1h-1zM291,482h1v1h-1zM556,482h1v1h-1zM966,482h1v1h-1zM290,483h1v1h-1zM556,483h1v1h-1zM965,483h1v1h-1zM289,484h1v1h-1zM556,484h1v1h-1zM964,484h1v1h-1zM288,485h1v1h-1zM556,485h1v1h-1zM963,485h1v1h-1zM287,486h1v1h-1zM556,486h1v1h-1zM962,486h1v1h-1zM286,487h1v1h-1zM556,487h1v1h-1zM961,487h1v1h-1zM285,488h1v1h-1zM556,488h1v1h-1zM960,488h1v1h-1zM284,489h1v1h-1zM556,489h1v1h-1zM959,489h1v1h-1zM283,490h1v1h-1zM556,490h1v1h-1zM958,490h1v1h-1zM282,491h1v1h-1zM556,491h1v1h-1zM957,491h1v1h-1zM281,492h1v1h-1zM556,492h1v1h-1zM956,492h1v1h-1zM280,493h1v1h-1zM556,493h1v1h-1zM955,493h1v1h-1zM279,494h1v1h-1zM556,494h1v1h-1zM954,494h1v1h-1zM278,495h1v1h-1zM556,495h1v1h-1zM953,495h1v1h-1zM277,496h1v1h-1zM556,496h1v1h-1zM952,496h1v1h-1zM276,497h1v1h-1zM556,497h1v1h-1zM951,497h1v1h-1zM275,498h1v1h-1zM556,498h1v1h-1zM950,498h1v1h-1zM274,499h1v1h-1zM556,499h1v1h-1zM949,499h1v1h-1zM273,500h1v1h-1zM556,500h1v1h-1zM948,500h1v1h-1zM272,501h1v1h-1zM556,501h1v1h-1zM947,501h1v1h-1zM271,502h1v1h-1zM556,502h1v1h-1zM946,502h1v1h-1zM270,503h1v1h-1zM556,503h1v1h-1zM945,503h1v1h-1zM269,504h1v1h-1zM556,504h1v1h-1zM944,504h1v1h-1zM268,505h1v1h-1zM556,505h1v1h-1zM943,505h1v1h-1zM267,506h1v1h-1zM556,506h1v1h-1zM942,506h1v1h-1zM266,507h1v1h-1zM556,507h1v1h-1zM941,507h1v1h-1zM265,508h1v1h-1zM556,508h1v1h-1zM940,508h1v1h-1zM264,509h1v1h-1zM556,509h1v1h-1zM939,509h1v1h-1zM263,510h1v1h-1zM556,510h1v1h-1zM938,510h1v1h-1zM262,511h1v1h-1zM556,511h1v1h-1zM937,511h1v1h-1zM261,512h1v1h-1zM556,512h1v1h-1zM936,512h1v1h-1zM260,513h1v1h-1zM556,513h1v1h-1zM935,513h1v1h-1zM259,514h1v1h-1zM556,514h1v1h-1zM934,514h1v1h-1zM258,515h1v1h-1zM556,515h1v1h-1zM933,515h1v1h-1zM257,516h1v1h-1zM556,516h1v1h-1zM932,516h1v1h-1zM256,517h2v1h-2zM556,517h1v1h-1zM931,517h1v1h-1zM255,518h1v1h-1zM257,518h1v1h-1zM556,518h1v1h-1zM930,518h1v1h-1zM254,519h1v1h-1zM257,519h1v1h-1zM556,519h1v1h-1zM929,519h1v1h-1zM253,520h1v1h-1zM257,520h1v1h-1zM556,520h1v1h-1zM928,520h1v1h-1zM252,521h1v1h-1zM257,521h1v1h-1zM556,521h47v1h-47zM927,521h1v1h-1zM251,522h1v1h-1zM257,522h1v1h-1zM926,522h1v1h-1zM250,523h1v1h-1zM257,523h1v1h-1zM925,523h1v1h-1zM249,524h1v1h-1zM257,524h1v1h-1zM924,524h1v1h-1zM248,525h1v1h-1zM257,525h1v1h-1zM923,525h1v1h-1zM247,526h1v1h-1zM257,526h1v1h-1zM922,526h1v1h-1zM246,527h1v1h-1zM257,527h1v1h-1zM921,527h1v1h-1zM245,528h1v1h-1zM257,528h1v1h-1zM920,528h1v1h-1zM244,529h1v1h-1zM257,529h1v1h-1zM919,529h1v1h-1zM243,530h1v1h-1zM257,530h1v1h-1zM918,530h1v1h-1zM242,531h1v1h-1zM257,531h1v1h-1zM917,531h1v1h-1zM241,532h1v1h-1zM257,532h1v1h-1zM916,532h1v1h-1zM240,533h1v1h-1zM257,533h1v1h-1zM915,533h1v1h-1zM239,534h1v1h-1zM257,534h1v1h-1zM914,534h1v1h-1zM238,535h1v1h-1zM257,535h1v1h-1zM913,535h1v1h-1zM237,536h1v1h-1zM257,536h1v1h-1zM912,536h1v1h-1zM236,537h1v1h-1zM257,537h1v1h-1zM911,537h1v1h-1zM235,538h1v1h-1zM257,538h1v1h-1zM910,538h1v1h-1zM234,539h1v1h-1zM257,539h1v1h-1zM909,539h1v1h-1zM233,540h1v1h-1zM257,540h1v1h-1zM908,540h1v1h-1zM232,541h1v1h-1zM257,541h1v1h-1zM907,541h1v1h-1zM231,542h1v1h-1zM257,542h1v1h-1zM906,542h1v1h-1zM230,543h1v1h-1zM257,543h1v1h-1zM905,543h1v1h-1zM229,544h1v1h-1zM257,544h1v1h-1zM904,544h1v1h-1zM228,545h1v1h-1zM257,545h1v1h-1zM903,545h1v1h-1zM227,546h1v1h-1zM257,546h1v1h-1zM902,546h1v1h-1zM226,547h1v1h-1zM257,547h1v1h-1zM901,547h1v1h-1zM225,548h1v1h-1zM257,548h1v1h-1zM900,548h1v1h-1zM224,549h1v1h-1zM257,549h1v1h-1zM899,549h1v1h-1zM223,550h1v1h-1zM257,550h1v1h-1zM898,550h1v1h-1zM222,551h1v1h-1zM257,551h1v1h-1zM897,551h1v1h-1zM221,552h1v1h-1zM257,552h1v1h-1zM896,552h1v1h-1zM220,553h1v1h-1zM257,553h1v1h-1zM895,553h1v1h-1zM219,554h1v1h-1zM257,554h1v1h-1zM894,554h1v1h-1zM218,555h1v1h-1zM257,555h1v1h-1zM893,555h1v1h-1zM217,556h1v1h-1zM257,556h1v1h-1zM892,556h1v1h-1zM216,557h1v1h-1zM257,557h1v1h-1zM891,557h1v1h-1zM215,558h1v1h-1zM257,558h1v1h-1zM890,558h1v1h-1zM214,559h1v1h-1zM257,559h1v1h-1zM889,559h1v1h-1zM213,560h1v1h-1zM257,560h1v1h-1zM888,560h1v1h-1zM212,561h1v1h-1zM257,561h1v1h-1zM887,561h1v1h-1zM211,562h1v1h-1zM257,562h1v1h-1zM886,562h1v1h-1zM210,563h1v1h-1zM257,563h1v1h-1zM885,563h1v1h-1zM209,564h1v1h-1zM257,564h1v1h-1zM884,564h1v1h-1zM208,565h1v1h-1zM257,565h1v1h-1zM883,565h1v1h-1zM207,566h1v1h-1zM257,566h1v1h-1zM882,566h1v1h-1zM206,567h1v1h-1zM257,567h1v1h-1zM881,567h1v1h-1zM205,568h1v1h-1zM257,568h1v1h-1zM880,568h1v1h-1zM204,569h1v1h-1zM257,569h1v1h-1zM879,569h1v1h-1zM203,570h1v1h-1zM257,570h1v1h-1zM878,570h1v1h-1zM202,571h1v1h-1zM257,571h1v1h-1zM877,571h1v1h-1zM201,572h1v1h-1zM257,572h1v1h-1zM876,572h1v1h-1zM200,573h1v1h-1zM257,573h1v1h-1zM875,573h1v1h-1zM199,574h1v1h-1zM257,574h1v1h-1zM874,574h1v1h-1zM198,575h1v1h-1zM257,575h1v1h-1zM873,575h1v1h-1zM197,576h1v1h-1zM257,576h1v1h-1zM872,576h1v1h-1zM196,577h1v1h-1zM257,577h1v1h-1zM871,577h1v1h-1zM195,578h1v1h-1zM257,578h1v1h-1zM870,578h1v1h-1zM194,579h1v1h-1zM257,579h1v1h-1zM869,579h1v1h-1zM193,580h1v1h-1zM257,580h1v1h-1zM868,580h1v1h-1zM192,581h1v1h-1zM257,581h1v1h-1zM867,581h1v1h-1zM191,582h1v1h-1zM257,582h1v1h-1zM866,582h1v1h-1zM190,583h1v1h-1zM257,583h1v1h-1zM865,583h1v1h-1zM189,584h1v1h-1zM257,584h1v1h-1zM864,584h1v1h-1zM188,585h1v1h-1zM257,585h1v1h-1zM863,585h1v1h-1zM187,586h1v1h-1zM257,586h1v1h-1zM862,586h1v1h-1zM186,587h1v1h-1zM257,587h1v1h-1zM861,587h1v1h-1zM185,588h1v1h-1zM257,588h1v1h-1zM860,588h1v1h-1zM184,589h1v1h-1zM257,589h1v1h-1zM859,589h1v1h-1zM183,590h1v1h-1zM257,590h1v1h-1zM858,590h1v1h-1zM182,591h1v1h-1zM257,591h1v1h-1zM857,591h1v1h-1zM181,592h1v1h-1zM257,592h1v1h-1zM856,592h1v1h-1zM180,593h1v1h-1zM257,593h1v1h-1zM855,593h1v1h-1zM179,594h1v1h-1zM257,594h1v1h-1zM280,594h1v1h-1zM854,594h1v1h-1zM178,595h1v1h-1zM257,595h1v1h-1zM279,595h1v1h-1zM853,595h1v1h-1zM177,596h1v1h-1zM257,596h1v1h-1zM278,596h1v1h-1zM852,596h1v1h-1zM176,597h1v1h-1zM257,597h1v1h-1zM277,597h1v1h-1zM851,597h1v1h-1zM175,598h1v1h-1zM257,598h1v1h-1zM276,598h1v1h-1zM850,598h1v1h-1zM174,599h1v1h-1zM257,599h1v1h-1zM274,599h2v1h-2zM849,599h1v1h-1zM173,600h1v1h-1zM257,600h1v1h-1zM273,600h1v1h-1zM848,600h1v1h-1zM172,601h1v1h-1zM257,601h1v1h-1zM272,601h1v1h-1zM847,601h1v1h-1zM171,602h1v1h-1zM257,602h1v1h-1zM271,602h1v1h-1zM846,602h1v1h-1zM170,603h1v1h-1zM257,603h1v1h-1zM270,603h1v1h-1zM845,603h1v1h-1zM169,604h1v1h-1zM257,604h1v1h-1zM269,604h1v1h-1zM844,604h1v1h-1zM168,605h1v1h-1zM257,605h1v1h-1zM268,605h1v1h-1zM843,605h1v1h-1zM167,606h1v1h-1zM257,606h1v1h-1zM267,606h1v1h-1zM842,606h1v1h-1zM166,607h1v1h-1zM257,607h1v1h-1zM266,607h1v1h-1zM841,607h1v1h-1zM165,608h1v1h-1zM257,608h1v1h-1zM265,608h1v1h-1zM840,608h1v1h-1zM164,609h1v1h-1zM257,609h1v1h-1zM264,609h1v1h-1zM839,609h1v1h-1zM163,610h1v1h-1zM257,610h1v1h-1zM262,610h2v1h-2zM838,610h1v1h-1zM162,611h1v1h-1zM257,611h1v1h-1zM261,611h1v1h-1zM838,611h1v1h-1zM161,612h1v1h-1zM257,612h1v1h-1zM260,612h1v1h-1zM838,612h1v1h-1zM161,613h1v1h-1zM257,613h1v1h-1zM259,613h1v1h-1zM838,613h1v1h-1zM161,614h1v1h-1zM257,614h2v1h-2zM838,614h1v1h-1zM161,615h1v1h-1zM257,615h1v1h-1zM838,615h1v1h-1zM161,616h1v1h-1zM838,616h1v1h-1zM161,617h1v1h-1zM838,617h1v1h-1zM161,618h1v1h-1zM838,618h1v1h-1zM161,619h1v1h-1zM838,619h1v1h-1zM161,620h1v1h-1zM838,620h1v1h-1zM161,621h1v1h-1zM838,621h1v1h-1zM161,622h1v1h-1zM838,622h1v1h-1zM161,623h1v1h-1zM838,623h1v1h-1zM161,624h1v1h-1zM838,624h1v1h-1zM161,625h1v1h-1zM838,625h1v1h-1zM161,626h1v1h-1zM838,626h1v1h-1zM161,627h1v1h-1zM838,627h1v1h-1zM161,628h1v1h-1zM838,628h1v1h-1zM161,629h1v1h-1zM838,629h1v1h-1zM161,630h1v1h-1zM838,630h1v1h-1zM161,631h1v1h-1zM838,631h1v1h-1zM161,632h1v1h-1zM838,632h1v1h-1zM161,633h1v1h-1zM838,633h1v1h-1zM161,634h1v1h-1zM838,634h1v1h-1zM161,635h1v1h-1zM838,635h1v1h-1zM161,636h1v1h-1zM838,636h1v1h-1zM161,637h1v1h-1zM838,637h1v1h-1zM161,638h1v1h-1zM838,638h1v1h-1zM161,639h1v1h-1zM838,639h1v1h-1zM161,640h1v1h-1zM838,640h1v1h-1zM161,641h1v1h-1zM838,641h1v1h-1zM161,642h1v1h-1zM838,642h1v1h-1zM161,643h1v1h-1zM838,643h1v1h-1zM161,644h1v1h-1zM838,644h1v1h-1zM161,645h1v1h-1zM838,645h1v1h-1zM161,646h1v1h-1zM838,646h1v1h-1zM161,647h1v1h-1zM838,647h1v1h-1zM161,648h1v1h-1zM838,648h1v1h-1zM161,649h1v1h-1zM838,649h1v1h-1zM161,650h1v1h-1zM838,650h1v1h-1zM161,651h1v1h-1zM838,651h1v1h-1zM161,652h1v1h-1zM838,652h1v1h-1zM861,652h1v1h-1zM161,653h1v1h-1zM838,653h1v1h-1zM860,653h1v1h-1zM161,654h1v1h-1zM838,654h1v1h-1zM859,654h1v1h-1zM161,655h1v1h-1zM838,655h1v1h-1zM858,655h1v1h-1zM161,656h1v1h-1zM838,656h1v1h-1zM857,656h1v1h-1zM161,657h1v1h-1zM838,657h1v1h-1zM856,657h1v1h-1zM161,658h1v1h-1zM838,658h1v1h-1zM855,658h1v1h-1zM161,659h1v1h-1zM838,659h1v1h-1zM854,659h1v1h-1zM161,660h1v1h-1zM838,660h1v1h-1zM853,660h1v1h-1zM161,661h1v1h-1zM838,661h1v1h-1zM852,661h1v1h-1zM161,662h1v1h-1zM838,662h1v1h-1zM851,662h1v1h-1zM161,663h1v1h-1zM838,663h1v1h-1zM849,663h2v1h-2zM161,664h1v1h-1zM838,664h1v1h-1zM848,664h1v1h-1zM161,665h1v1h-1zM838,665h1v1h-1zM847,665h1v1h-1zM161,666h1v1h-1zM838,666h1v1h-1zM846,666h1v1h-1zM161,667h1v1h-1zM838,667h1v1h-1zM845,667h1v1h-1zM161,668h1v1h-1zM838,668h1v1h-1zM844,668h1v1h-1zM161,669h1v1h-1zM838,669h1v1h-1zM843,669h1v1h-1zM161,670h1v1h-1zM838,670h1v1h-1zM842,670h1v1h-1zM161,671h1v1h-1zM838,671h1v1h-1zM841,671h1v1h-1zM161,672h1v1h-1zM838,672h1v1h-1zM840,672h1v1h-1zM161,673h1v1h-1zM838,673h2v1h-2zM161,674h1v1h-1zM838,674h1v1h-1zM161,675h1v1h-1zM161,676h1v1h-1zM161,677h1v1h-1zM161,678h1v1h-1zM161,679h1v1h-1zM161,680h1v1h-1zM161,681h1v1h-1zM161,682h1v1h-1zM161,683h1v1h-1zM161,684h1v1h-1zM161,685h1v1h-1zM161,686h1v1h-1zM161,687h1v1h-1zM161,688h1v1h-1zM161,689h1v1h-1zM161,690h1v1h-1zM184,690h1v1h-1zM161,691h1v1h-1zM183,691h1v1h-1zM161,692h1v1h-1zM182,692h1v1h-1zM161,693h1v1h-1zM181,693h1v1h-1zM161,694h1v1h-1zM180,694h1v1h-1zM161,695h1v1h-1zM179,695h1v1h-1zM161,696h1v1h-1zM178,696h1v1h-1zM161,697h1v1h-1zM177,697h1v1h-1zM161,698h1v1h-1zM176,698h1v1h-1zM161,699h1v1h-1zM175,699h1v1h-1zM161,700h1v1h-1zM174,700h1v1h-1zM161,701h1v1h-1zM172,701h2v1h-2zM161,702h1v1h-1zM171,702h1v1h-1zM161,703h1v1h-1zM170,703h1v1h-1zM161,704h1v1h-1zM169,704h1v1h-1zM161,705h1v1h-1zM168,705h1v1h-1zM161,706h1v1h-1zM167,706h1v1h-1zM161,707h1v1h-1zM166,707h1v1h-1zM161,708h1v1h-1zM165,708h1v1h-1zM161,709h1v1h-1zM164,709h1v1h-1zM161,710h1v1h-1zM163,710h1v1h-1zM161,711h2v1h-2zM161,712h1v1h-1zM787,820h76v1h-76z" fill="#FF0000"/><path d="M524,279h14v1h-14zM797,279h15v1h-15zM537,280h1v1h-1zM797,280h1v1h-1zM537,281h1v1h-1zM797,281h1v1h-1zM537,282h1v1h-1zM797,282h1v1h-1zM537,283h1v1h-1zM797,283h1v1h-1zM537,284h1v1h-1zM797,284h1v1h-1zM537,285h1v1h-1zM797,285h1v1h-1zM537,286h1v1h-1zM797,286h1v1h-1zM537,287h1v1h-1zM797,287h1v1h-1zM537,288h1v1h-1zM797,288h1v1h-1zM537,289h1v1h-1zM797,289h1v1h-1zM537,290h1v1h-1zM797,290h1v1h-1zM537,291h1v1h-1zM797,291h1v1h-1zM537,292h1v1h-1zM797,292h1v1h-1zM537,293h1v1h-1zM797,293h1v1h-1zM537,294h1v1h-1zM797,294h1v1h-1zM537,295h1v1h-1zM797,295h1v1h-1zM537,296h1v1h-1zM797,296h1v1h-1zM537,297h1v1h-1zM797,297h1v1h-1zM537,298h1v1h-1zM797,298h1v1h-1zM537,299h1v1h-1zM797,299h1v1h-1zM537,300h1v1h-1zM797,300h1v1h-1zM537,301h1v1h-1zM797,301h1v1h-1zM537,302h1v1h-1zM797,302h1v1h-1zM537,303h1v1h-1zM797,303h1v1h-1zM537,304h1v1h-1zM797,304h1v1h-1zM537,305h577v1h-577zM1112,306h1v1h-1zM1111,307h1v1h-1zM1110,308h1v1h-1zM1109,309h1v1h-1zM1108,310h1v1h-1zM1107,311h1v1h-1zM1106,312h1v1h-1zM1105,313h1v1h-1zM1104,314h1v1h-1zM1103,315h1v1h-1zM1102,316h1v1h-1zM1101,317h1v1h-1zM1100,318h1v1h-1zM1099,319h1v1h-1zM1098,320h1v1h-1zM1097,321h1v1h-1zM1096,322h1v1h-1zM1095,323h1v1h-1zM1094,324h1v1h-1zM1093,325h1v1h-1zM1092,326h1v1h-1zM1091,327h1v1h-1zM1090,328h1v1h-1zM1089,329h1v1h-1zM1088,330h1v1h-1zM1087,331h1v1h-1zM1086,332h1v1h-1zM1085,333h1v1h-1zM1084,334h1v1h-1zM1083,335h1v1h-1zM1082,336h1v1h-1zM1081,337h1v1h-1zM1080,338h1v1h-1zM1079,339h1v1h-1zM1078,340h1v1h-1zM1077,341h1v1h-1zM1076,342h1v1h-1zM1075,343h1v1h-1zM1074,344h1v1h-1zM1073,345h1v1h-1zM1072,346h1v1h-1zM1071,347h1v1h-1zM1070,348h1v1h-1zM1069,349h1v1h-1zM1068,350h1v1h-1zM1067,351h1v1h-1zM1066,352h1v1h-1zM1065,353h1v1h-1zM1064,354h1v1h-1zM1063,355h1v1h-1zM1062,356h1v1h-1zM1061,357h1v1h-1zM1060,358h1v1h-1zM1059,359h1v1h-1zM1058,360h1v1h-1zM1057,361h1v1h-1zM1056,362h1v1h-1zM1055,363h1v1h-1zM1054,364h1v1h-1zM1053,365h1v1h-1zM1052,366h1v1h-1zM1051,367h1v1h-1zM1050,368h1v1h-1zM1049,369h1v1h-1zM1048,370h1v1h-1zM1047,371h1v1h-1zM1046,372h1v1h-1zM1045,373h1v1h-1zM1044,374h1v1h-1zM1043,375h1v1h-1zM1042,376h1v1h-1zM1041,377h1v1h-1zM1040,378h1v1h-1zM1039,379h1v1h-1zM1038,380h1v1h-1zM1037,381h1v1h-1zM1036,382h1v1h-1zM1035,383h1v1h-1zM1034,384h1v1h-1zM1033,385h1v1h-1zM1032,386h1v1h-1zM1031,387h1v1h-1zM1030,388h1v1h-1zM1029,389h1v1h-1zM1028,390h1v1h-1zM1027,391h1v1h-1zM1026,392h1v1h-1zM1025,393h1v1h-1zM1024,394h1v1h-1zM1023,395h1v1h-1zM1022,396h1v1h-1zM1021,397h1v1h-1zM1020,398h1v1h-1zM1019,399h1v1h-1zM1018,400h1v1h-1zM1017,401h1v1h-1zM1016,402h1v1h-1zM1015,403h1v1h-1zM1014,404h1v1h-1zM1013,405h1v1h-1zM1012,406h1v1h-1zM1011,407h1v1h-1zM1010,408h1v1h-1zM1009,409h1v1h-1zM1008,410h1v1h-1zM1007,411h1v1h-1zM1006,412h1v1h-1zM1005,413h1v1h-1zM1004,414h1v1h-1zM1003,415h1v1h-1zM1002,416h1v1h-1zM1001,417h1v1h-1zM1000,418h1v1h-1zM999,419h1v1h-1zM998,420h1v1h-1zM997,421h1v1h-1zM996,422h1v1h-1zM995,423h1v1h-1zM994,424h1v1h-1zM993,425h1v1h-1zM992,426h1v1h-1zM991,427h1v1h-1zM990,428h1v1h-1zM989,429h1v1h-1zM988,430h1v1h-1zM987,431h1v1h-1zM986,432h1v1h-1zM985,433h1v1h-1zM984,434h1v1h-1zM983,435h1v1h-1zM982,436h1v1h-1zM981,437h1v1h-1zM980,438h1v1h-1zM979,439h1v1h-1zM978,440h1v1h-1zM977,441h1v1h-1zM976,442h1v1h-1zM975,443h1v1h-1zM974,444h1v1h-1zM973,445h1v1h-1zM972,446h1v1h-1zM971,447h1v1h-1zM970,448h1v1h-1zM969,449h1v1h-1zM968,450h1v1h-1zM967,451h1v1h-1zM966,452h1v1h-1zM965,453h1v1h-1zM964,454h1v1h-1zM963,455h1v1h-1zM962,456h1v1h-1zM961,457h1v1h-1zM960,458h1v1h-1zM959,459h1v1h-1zM958,460h1v1h-1zM957,461h1v1h-1zM956,462h1v1h-1zM955,463h1v1h-1zM954,464h1v1h-1zM953,465h1v1h-1zM952,466h1v1h-1zM951,467h1v1h-1zM950,468h1v1h-1zM949,469h1v1h-1zM948,470h1v1h-1zM947,471h1v1h-1zM946,472h1v1h-1zM1069,472h1v1h-1zM945,473h1v1h-1zM1068,473h1v1h-1zM944,474h1v1h-1zM1067,474h1v1h-1zM943,475h1v1h-1zM1066,475h1v1h-1zM942,476h1v1h-1zM1065,476h1v1h-1zM941,477h1v1h-1zM1064,477h1v1h-1zM940,478h1v1h-1zM1063,478h1v1h-1zM939,479h1v1h-1zM1062,479h1v1h-1zM938,480h1v1h-1zM1061,480h1v1h-1zM937,481h1v1h-1zM1060,481h1v1h-1zM936,482h1v1h-1zM1059,482h1v1h-1zM935,483h1v1h-1zM1058,483h1v1h-1zM934,484h1v1h-1zM1057,484h1v1h-1zM933,485h1v1h-1zM1056,485h1v1h-1zM932,486h1v1h-1zM1055,486h1v1h-1zM931,487h1v1h-1zM1054,487h1v1h-1zM930,488h1v1h-1zM1053,488h1v1h-1zM929,489h1v1h-1zM1052,489h1v1h-1zM928,490h1v1h-1zM1051,490h1v1h-1zM927,491h1v1h-1zM1050,491h1v1h-1zM926,492h1v1h-1zM1049,492h1v1h-1zM925,493h1v1h-1zM1048,493h1v1h-1zM924,494h1v1h-1zM1047,494h1v1h-1zM923,495h124v1h-124zM922,496h1v1h-1zM921,497h1v1h-1zM920,498h1v1h-1zM919,499h1v1h-1zM918,500h1v1h-1zM917,501h1v1h-1zM916,502h1v1h-1zM915,503h1v1h-1zM914,504h1v1h-1zM913,505h1v1h-1zM912,506h1v1h-1zM911,507h1v1h-1zM910,508h1v1h-1zM909,509h1v1h-1zM908,510h1v1h-1zM907,511h1v1h-1zM906,512h1v1h-1zM905,513h1v1h-1zM904,514h1v1h-1zM903,515h1v1h-1zM902,516h1v1h-1zM901,517h1v1h-1zM900,518h1v1h-1zM899,519h1v1h-1zM898,520h1v1h-1zM677,521h96v1h-96zM802,521h96v1h-96zM896,522h1v1h-1zM895,523h1v1h-1zM894,524h1v1h-1zM893,525h1v1h-1zM892,526h1v1h-1zM891,527h1v1h-1zM890,528h1v1h-1zM889,529h1v1h-1zM888,530h1v1h-1zM887,531h1v1h-1zM886,532h1v1h-1zM885,533h1v1h-1zM884,534h1v1h-1zM883,535h1v1h-1zM882,536h1v1h-1zM881,537h1v1h-1zM880,538h1v1h-1zM879,539h1v1h-1zM878,540h1v1h-1zM877,541h1v1h-1zM876,542h1v1h-1zM875,543h1v1h-1zM874,544h1v1h-1zM873,545h1v1h-1zM872,546h1v1h-1zM871,547h1v1h-1zM870,548h1v1h-1zM869,549h1v1h-1zM868,550h1v1h-1zM867,551h1v1h-1zM866,552h1v1h-1zM865,553h1v1h-1zM864,554h1v1h-1zM863,555h1v1h-1zM862,556h1v1h-1zM861,557h1v1h-1zM860,558h1v1h-1zM859,559h1v1h-1zM858,560h1v1h-1zM857,561h1v1h-1zM856,562h1v1h-1zM855,563h1v1h-1zM854,564h1v1h-1zM853,565h1v1h-1zM852,566h1v1h-1zM851,567h1v1h-1zM850,568h1v1h-1zM849,569h1v1h-1zM848,570h1v1h-1zM847,571h1v1h-1zM846,572h1v1h-1zM845,573h1v1h-1zM844,574h1v1h-1zM843,575h1v1h-1zM842,576h1v1h-1zM841,577h1v1h-1zM840,578h1v1h-1zM839,579h1v1h-1zM838,580h1v1h-1zM837,581h1v1h-1zM836,582h1v1h-1zM835,583h1v1h-1zM834,584h1v1h-1zM833,585h1v1h-1zM832,586h1v1h-1zM831,587h1v1h-1zM830,588h1v1h-1zM829,589h1v1h-1zM828,590h1v1h-1zM827,591h1v1h-1zM826,592h1v1h-1zM825,593h1v1h-1zM824,594h1v1h-1zM823,595h1v1h-1zM822,596h1v1h-1zM821,597h1v1h-1zM820,598h1v1h-1zM819,599h1v1h-1zM818,600h1v1h-1zM817,601h1v1h-1zM816,602h1v1h-1zM815,603h1v1h-1zM814,604h1v1h-1zM813,605h1v1h-1zM812,606h1v1h-1zM811,607h1v1h-1zM810,608h1v1h-1zM809,609h1v1h-1zM808,610h1v1h-1zM807,611h1v1h-1zM806,612h1v1h-1zM805,613h1v1h-1zM804,614h1v1h-1zM803,615h1v1h-1zM802,616h1v1h-1zM801,617h1v1h-1zM800,618h1v1h-1zM799,619h1v1h-1zM798,620h1v1h-1zM797,621h1v1h-1zM280,622h1v1h-1zM796,622h1v1h-1zM279,623h1v1h-1zM795,623h1v1h-1zM278,624h1v1h-1zM794,624h1v1h-1zM277,625h1v1h-1zM793,625h1v1h-1zM276,626h1v1h-1zM792,626h1v1h-1zM275,627h1v1h-1zM791,627h1v1h-1zM274,628h1v1h-1zM790,628h1v1h-1zM273,629h1v1h-1zM789,629h1v1h-1zM272,630h1v1h-1zM788,630h1v1h-1zM272,631h1v1h-1zM787,631h1v1h-1zM271,632h1v1h-1zM786,632h1v1h-1zM270,633h1v1h-1zM785,633h1v1h-1zM269,634h1v1h-1zM784,634h1v1h-1zM268,635h1v1h-1zM783,635h1v1h-1zM267,636h1v1h-1zM782,636h1v1h-1zM266,637h1v1h-1zM781,637h1v1h-1zM265,638h1v1h-1zM780,638h1v1h-1zM264,639h1v1h-1zM779,639h1v1h-1zM263,640h1v1h-1zM778,640h1v1h-1zM262,641h1v1h-1zM777,641h1v1h-1zM260,642h2v1h-2zM776,642h1v1h-1zM259,643h1v1h-1zM775,643h1v1h-1zM258,644h1v1h-1zM774,644h1v1h-1zM257,645h1v1h-1zM773,645h1v1h-1zM257,646h1v1h-1zM772,646h1v1h-1zM257,647h1v1h-1zM771,647h1v1h-1zM257,648h1v1h-1zM770,648h1v1h-1zM257,649h1v1h-1zM769,649h1v1h-1zM257,650h1v1h-1zM768,650h1v1h-1zM257,651h1v1h-1zM767,651h1v1h-1zM257,652h1v1h-1zM766,652h1v1h-1zM257,653h1v1h-1zM765,653h1v1h-1zM257,654h1v1h-1zM764,654h1v1h-1zM257,655h1v1h-1zM763,655h1v1h-1zM257,656h1v1h-1zM762,656h1v1h-1zM257,657h1v1h-1zM761,657h1v1h-1zM257,658h1v1h-1zM760,658h1v1h-1zM257,659h1v1h-1zM759,659h1v1h-1zM257,660h1v1h-1zM758,660h1v1h-1zM257,661h1v1h-1zM757,661h1v1h-1zM257,662h1v1h-1zM756,662h1v1h-1zM257,663h1v1h-1zM755,663h1v1h-1zM257,664h1v1h-1zM754,664h1v1h-1zM257,665h1v1h-1zM753,665h1v1h-1zM257,666h1v1h-1zM752,666h1v1h-1zM257,667h1v1h-1zM751,667h1v1h-1zM257,668h1v1h-1zM750,668h1v1h-1zM257,669h1v1h-1zM749,669h1v1h-1zM257,670h1v1h-1zM748,670h1v1h-1zM257,671h1v1h-1zM747,671h1v1h-1zM257,672h1v1h-1zM746,672h1v1h-1zM257,673h1v1h-1zM745,673h1v1h-1zM257,674h1v1h-1zM744,674h1v1h-1zM257,675h1v1h-1zM743,675h1v1h-1zM257,676h1v1h-1zM742,676h1v1h-1zM257,677h1v1h-1zM741,677h1v1h-1zM257,678h1v1h-1zM740,678h1v1h-1zM257,679h1v1h-1zM739,679h1v1h-1zM257,680h1v1h-1zM738,680h1v1h-1zM257,681h1v1h-1zM737,681h1v1h-1zM861,681h1v1h-1zM257,682h1v1h-1zM736,682h1v1h-1zM860,682h1v1h-1zM257,683h1v1h-1zM735,683h1v1h-1zM859,683h1v1h-1zM257,684h1v1h-1zM734,684h1v1h-1zM858,684h1v1h-1zM257,685h1v1h-1zM733,685h1v1h-1zM857,685h1v1h-1zM256,686h1v1h-1zM732,686h1v1h-1zM856,686h1v1h-1zM255,687h1v1h-1zM731,687h1v1h-1zM855,687h1v1h-1zM254,688h1v1h-1zM730,688h1v1h-1zM854,688h1v1h-1zM253,689h1v1h-1zM729,689h1v1h-1zM853,689h1v1h-1zM252,690h1v1h-1zM728,690h1v1h-1zM852,690h1v1h-1zM251,691h1v1h-1zM727,691h1v1h-1zM851,691h1v1h-1zM250,692h1v1h-1zM726,692h1v1h-1zM850,692h1v1h-1zM249,693h1v1h-1zM725,693h1v1h-1zM849,693h1v1h-1zM248,694h1v1h-1zM724,694h1v1h-1zM848,694h1v1h-1zM247,695h1v1h-1zM723,695h1v1h-1zM847,695h1v1h-1zM246,696h1v1h-1zM722,696h1v1h-1zM846,696h1v1h-1zM245,697h1v1h-1zM721,697h1v1h-1zM845,697h1v1h-1zM244,698h1v1h-1zM720,698h1v1h-1zM844,698h1v1h-1zM243,699h1v1h-1zM719,699h1v1h-1zM843,699h1v1h-1zM242,700h1v1h-1zM718,700h1v1h-1zM842,700h1v1h-1zM241,701h1v1h-1zM717,701h1v1h-1zM841,701h1v1h-1zM240,702h1v1h-1zM716,702h1v1h-1zM840,702h1v1h-1zM239,703h1v1h-1zM715,703h1v1h-1zM839,703h1v1h-1zM238,704h1v1h-1zM714,704h125v1h-125zM237,705h1v1h-1zM713,705h1v1h-1zM236,706h1v1h-1zM712,706h1v1h-1zM235,707h1v1h-1zM711,707h1v1h-1zM234,708h1v1h-1zM710,708h1v1h-1zM233,709h1v1h-1zM709,709h1v1h-1zM232,710h1v1h-1zM708,710h1v1h-1zM231,711h1v1h-1zM707,711h1v1h-1zM230,712h1v1h-1zM706,712h1v1h-1zM229,713h1v1h-1zM705,713h1v1h-1zM228,714h1v1h-1zM704,714h1v1h-1zM227,715h1v1h-1zM703,715h1v1h-1zM226,716h1v1h-1zM702,716h1v1h-1zM225,717h1v1h-1zM701,717h1v1h-1zM184,718h1v1h-1zM224,718h1v1h-1zM700,718h1v1h-1zM183,719h1v1h-1zM223,719h1v1h-1zM699,719h1v1h-1zM182,720h1v1h-1zM222,720h1v1h-1zM698,720h1v1h-1zM181,721h1v1h-1zM221,721h1v1h-1zM697,721h1v1h-1zM180,722h1v1h-1zM220,722h1v1h-1zM696,722h1v1h-1zM179,723h1v1h-1zM219,723h1v1h-1zM695,723h1v1h-1zM178,724h1v1h-1zM218,724h1v1h-1zM694,724h1v1h-1zM177,725h1v1h-1zM217,725h1v1h-1zM693,725h1v1h-1zM176,726h1v1h-1zM216,726h1v1h-1zM692,726h1v1h-1zM176,727h1v1h-1zM215,727h1v1h-1zM691,727h1v1h-1zM175,728h1v1h-1zM214,728h1v1h-1zM690,728h1v1h-1zM174,729h1v1h-1zM213,729h1v1h-1zM689,729h1v1h-1zM173,730h1v1h-1zM212,730h1v1h-1zM688,730h1v1h-1zM172,731h1v1h-1zM211,731h1v1h-1zM687,731h1v1h-1zM171,732h1v1h-1zM210,732h1v1h-1zM686,732h1v1h-1zM170,733h1v1h-1zM209,733h1v1h-1zM685,733h1v1h-1zM169,734h1v1h-1zM208,734h1v1h-1zM684,734h1v1h-1zM168,735h1v1h-1zM207,735h1v1h-1zM683,735h1v1h-1zM166,736h2v1h-2zM206,736h1v1h-1zM682,736h1v1h-1zM165,737h1v1h-1zM205,737h1v1h-1zM681,737h1v1h-1zM164,738h1v1h-1zM204,738h1v1h-1zM680,738h1v1h-1zM162,739h2v1h-2zM203,739h1v1h-1zM679,739h1v1h-1zM161,740h1v1h-1zM202,740h1v1h-1zM678,740h1v1h-1zM161,741h1v1h-1zM201,741h1v1h-1zM677,741h1v1h-1zM161,742h1v1h-1zM200,742h1v1h-1zM676,742h1v1h-1zM161,743h1v1h-1zM199,743h1v1h-1zM675,743h1v1h-1zM161,744h1v1h-1zM198,744h1v1h-1zM674,744h1v1h-1zM161,745h1v1h-1zM197,745h1v1h-1zM673,745h1v1h-1zM161,746h1v1h-1zM196,746h1v1h-1zM672,746h1v1h-1zM161,747h1v1h-1zM195,747h1v1h-1zM671,747h1v1h-1zM161,748h1v1h-1zM194,748h1v1h-1zM670,748h1v1h-1zM161,749h1v1h-1zM193,749h1v1h-1zM669,749h1v1h-1zM161,750h1v1h-1zM192,750h1v1h-1zM668,750h1v1h-1zM161,751h1v1h-1zM191,751h1v1h-1zM667,751h1v1h-1zM161,752h1v1h-1zM190,752h1v1h-1zM666,752h1v1h-1zM161,753h1v1h-1zM189,753h1v1h-1zM665,753h1v1h-1zM161,754h1v1h-1zM188,754h1v1h-1zM664,754h1v1h-1zM161,755h1v1h-1zM187,755h1v1h-1zM663,755h1v1h-1zM161,756h1v1h-1zM186,756h1v1h-1zM662,756h1v1h-1zM161,757h1v1h-1zM185,757h1v1h-1zM661,757h1v1h-1zM161,758h1v1h-1zM184,758h1v1h-1zM660,758h1v1h-1zM161,759h1v1h-1zM183,759h1v1h-1zM659,759h1v1h-1zM161,760h1v1h-1zM182,760h1v1h-1zM658,760h1v1h-1zM161,761h1v1h-1zM181,761h1v1h-1zM657,761h1v1h-1zM161,762h1v1h-1zM180,762h1v1h-1zM656,762h1v1h-1zM161,763h1v1h-1zM179,763h1v1h-1zM655,763h1v1h-1zM161,764h1v1h-1zM178,764h1v1h-1zM654,764h1v1h-1zM161,765h1v1h-1zM177,765h1v1h-1zM653,765h1v1h-1zM161,766h1v1h-1zM176,766h1v1h-1zM652,766h1v1h-1zM161,767h1v1h-1zM175,767h1v1h-1zM651,767h1v1h-1zM161,768h1v1h-1zM174,768h1v1h-1zM650,768h1v1h-1zM161,769h1v1h-1zM173,769h1v1h-1zM649,769h1v1h-1zM161,770h1v1h-1zM172,770h1v1h-1zM648,770h1v1h-1zM161,771h1v1h-1zM171,771h1v1h-1zM647,771h1v1h-1zM161,772h1v1h-1zM170,772h1v1h-1zM646,772h1v1h-1zM161,773h1v1h-1zM169,773h1v1h-1zM645,773h1v1h-1zM161,774h1v1h-1zM168,774h1v1h-1zM644,774h1v1h-1zM161,775h1v1h-1zM167,775h1v1h-1zM643,775h1v1h-1zM161,776h1v1h-1zM166,776h1v1h-1zM642,776h1v1h-1zM161,777h1v1h-1zM165,777h1v1h-1zM641,777h1v1h-1zM161,778h1v1h-1zM164,778h1v1h-1zM640,778h1v1h-1zM161,779h1v1h-1zM163,779h1v1h-1zM639,779h1v1h-1zM161,780h2v1h-2zM638,780h1v1h-1zM161,781h2v1h-2zM637,781h1v1h-1zM161,782h1v1h-1zM636,782h1v1h-1zM160,783h1v1h-1zM635,783h1v1h-1zM159,784h1v1h-1zM634,784h1v1h-1zM158,785h1v1h-1zM633,785h1v1h-1zM157,786h1v1h-1zM632,786h1v1h-1zM156,787h1v1h-1zM631,787h1v1h-1zM155,788h1v1h-1zM630,788h1v1h-1zM154,789h1v1h-1zM629,789h1v1h-1zM153,790h1v1h-1zM628,790h1v1h-1zM152,791h1v1h-1zM627,791h1v1h-1zM151,792h1v1h-1zM626,792h1v1h-1zM150,793h1v1h-1zM625,793h1v1h-1zM149,794h1v1h-1zM624,794h1v1h-1zM148,795h1v1h-1zM623,795h1v1h-1zM147,796h1v1h-1zM622,796h1v1h-1zM146,797h1v1h-1zM621,797h1v1h-1zM145,798h1v1h-1zM620,798h1v1h-1zM144,799h1v1h-1zM619,799h1v1h-1zM143,800h1v1h-1zM618,800h1v1h-1zM142,801h1v1h-1zM617,801h1v1h-1zM141,802h1v1h-1zM616,802h1v1h-1zM140,803h1v1h-1zM615,803h1v1h-1zM139,804h1v1h-1zM614,804h1v1h-1zM138,805h1v1h-1zM613,805h1v1h-1zM137,806h1v1h-1zM612,806h1v1h-1zM136,807h1v1h-1zM611,807h1v1h-1zM135,808h1v1h-1zM610,808h1v1h-1zM134,809h1v1h-1zM609,809h1v1h-1zM133,810h1v1h-1zM608,810h1v1h-1zM132,811h1v1h-1zM607,811h1v1h-1zM131,812h1v1h-1zM606,812h1v1h-1zM130,813h1v1h-1zM605,813h1v1h-1zM129,814h1v1h-1zM604,814h1v1h-1zM128,815h1v1h-1zM603,815h1v1h-1zM127,816h1v1h-1zM602,816h1v1h-1zM126,817h1v1h-1zM601,817h1v1h-1zM125,818h1v1h-1zM600,818h1v1h-1zM124,819h1v1h-1zM599,819h1v1h-1zM123,820h1v1h-1zM598,820h1v1h-1zM122,821h1v1h-1zM597,821h1v1h-1zM121,822h1v1h-1zM596,822h1v1h-1zM120,823h1v1h-1zM595,823h1v1h-1zM119,824h1v1h-1zM594,824h1v1h-1zM118,825h1v1h-1zM593,825h1v1h-1zM117,826h1v1h-1zM592,826h1v1h-1zM116,827h1v1h-1zM591,827h1v1h-1zM115,828h1v1h-1zM590,828h1v1h-1zM114,829h1v1h-1zM589,829h1v1h-1zM113,830h1v1h-1zM588,830h1v1h-1zM112,831h1v1h-1zM587,831h1v1h-1zM111,832h1v1h-1zM586,832h1v1h-1zM110,833h1v1h-1zM585,833h1v1h-1zM109,834h1v1h-1zM584,834h1v1h-1zM108,835h1v1h-1zM583,835h1v1h-1zM107,836h1v1h-1zM582,836h1v1h-1zM106,837h1v1h-1zM581,837h1v1h-1zM105,838h1v1h-1zM580,838h1v1h-1zM104,839h1v1h-1zM579,839h1v1h-1zM103,840h1v1h-1zM578,840h1v1h-1zM102,841h1v1h-1zM577,841h1v1h-1zM101,842h1v1h-1zM576,842h1v1h-1zM100,843h1v1h-1zM575,843h1v1h-1zM99,844h1v1h-1zM574,844h1v1h-1zM98,845h1v1h-1zM573,845h1v1h-1zM97,846h1v1h-1zM572,846h1v1h-1zM96,847h1v1h-1zM571,847h1v1h-1zM95,848h1v1h-1zM570,848h1v1h-1zM94,849h1v1h-1zM569,849h1v1h-1zM93,850h1v1h-1zM568,850h1v1h-1zM92,851h1v1h-1zM567,851h1v1h-1zM91,852h1v1h-1zM566,852h1v1h-1zM787,852h76v1h-76zM90,853h1v1h-1zM565,853h1v1h-1zM89,854h1v1h-1zM564,854h1v1h-1zM88,855h1v1h-1zM563,855h1v1h-1zM87,856h1v1h-1zM562,856h1v1h-1zM86,857h1v1h-1zM561,857h1v1h-1zM85,858h1v1h-1zM560,858h1v1h-1zM84,859h1v1h-1zM559,859h1v1h-1zM83,860h1v1h-1zM558,860h1v1h-1zM82,861h1v1h-1zM557,861h1v1h-1zM81,862h1v1h-1zM556,862h1v1h-1zM80,863h1v1h-1zM555,863h1v1h-1zM79,864h1v1h-1zM554,864h1v1h-1zM78,865h1v1h-1zM553,865h1v1h-1zM77,866h1v1h-1zM552,866h1v1h-1zM76,867h1v1h-1zM551,867h1v1h-1zM75,868h1v1h-1zM550,868h1v1h-1zM74,869h1v1h-1zM549,869h1v1h-1zM73,870h1v1h-1zM548,870h1v1h-1zM72,871h1v1h-1zM547,871h1v1h-1zM71,872h1v1h-1zM546,872h1v1h-1zM70,873h1v1h-1zM545,873h1v1h-1zM69,874h1v1h-1zM544,874h1v1h-1zM68,875h1v1h-1zM543,875h1v1h-1zM67,876h1v1h-1zM542,876h1v1h-1zM66,877h476v1h-476z" fill="#0000FF"/><path d="M556,179h53v1h-53zM714,179h53v1h-53zM1126,179h53v1h-53zM617,223h1v1h-1zM616,224h1v1h-1zM615,225h1v1h-1zM614,226h1v1h-1zM613,227h1v1h-1zM612,228h1v1h-1zM611,229h1v1h-1zM610,230h1v1h-1zM609,231h1v1h-1zM608,232h1v1h-1zM607,233h1v1h-1zM606,234h1v1h-1zM605,235h1v1h-1zM604,236h1v1h-1zM603,237h1v1h-1zM602,238h1v1h-1zM601,239h1v1h-1zM464,240h65v1h-65zM600,240h1v1h-1zM806,240h65v1h-65zM463,241h1v1h-1zM527,241h2v1h-2zM599,241h1v1h-1zM806,241h2v1h-2zM871,241h1v1h-1zM462,242h1v1h-1zM526,242h1v1h-1zM528,242h1v1h-1zM598,242h1v1h-1zM806,242h1v1h-1zM808,242h1v1h-1zM872,242h1v1h-1zM461,243h1v1h-1zM525,243h1v1h-1zM528,243h1v1h-1zM597,243h1v1h-1zM806,243h1v1h-1zM809,243h1v1h-1zM873,243h1v1h-1zM460,244h1v1h-1zM524,244h1v1h-1zM528,244h1v1h-1zM596,244h1v1h-1zM806,244h1v1h-1zM810,244h1v1h-1zM874,244h1v1h-1zM459,245h1v1h-1zM523,245h1v1h-1zM528,245h1v1h-1zM595,245h1v1h-1zM806,245h1v1h-1zM811,245h1v1h-1zM875,245h1v1h-1zM458,246h1v1h-1zM522,246h1v1h-1zM528,246h1v1h-1zM594,246h1v1h-1zM806,246h1v1h-1zM812,246h1v1h-1zM876,246h1v1h-1zM457,247h65v1h-65zM528,247h1v1h-1zM593,247h1v1h-1zM806,247h1v1h-1zM813,247h65v1h-65zM457,248h1v1h-1zM521,248h1v1h-1zM528,248h1v1h-1zM592,248h1v1h-1zM806,248h1v1h-1zM813,248h1v1h-1zM877,248h1v1h-1zM457,249h1v1h-1zM521,249h1v1h-1zM528,249h1v1h-1zM591,249h1v1h-1zM806,249h1v1h-1zM813,249h1v1h-1zM877,249h1v1h-1zM457,250h1v1h-1zM521,250h1v1h-1zM528,250h1v1h-1zM590,250h1v1h-1zM806,250h1v1h-1zM813,250h1v1h-1zM877,250h1v1h-1zM457,251h1v1h-1zM521,251h1v1h-1zM528,251h1v1h-1zM589,251h1v1h-1zM806,251h1v1h-1zM813,251h1v1h-1zM877,251h1v1h-1zM457,252h1v1h-1zM521,252h1v1h-1zM528,252h1v1h-1zM588,252h1v1h-1zM806,252h1v1h-1zM813,252h1v1h-1zM877,252h1v1h-1zM457,253h1v1h-1zM521,253h1v1h-1zM528,253h1v1h-1zM587,253h1v1h-1zM806,253h1v1h-1zM813,253h1v1h-1zM877,253h1v1h-1zM457,254h1v1h-1zM521,254h1v1h-1zM528,254h1v1h-1zM586,254h1v1h-1zM806,254h1v1h-1zM813,254h1v1h-1zM877,254h1v1h-1zM457,255h1v1h-1zM521,255h1v1h-1zM528,255h1v1h-1zM585,255h1v1h-1zM806,255h1v1h-1zM813,255h1v1h-1zM877,255h1v1h-1zM457,256h1v1h-1zM521,256h1v1h-1zM528,256h1v1h-1zM584,256h1v1h-1zM806,256h1v1h-1zM813,256h1v1h-1zM877,256h1v1h-1zM457,257h1v1h-1zM521,257h1v1h-1zM528,257h1v1h-1zM583,257h1v1h-1zM806,257h1v1h-1zM813,257h1v1h-1zM877,257h1v1h-1zM457,258h1v1h-1zM521,258h1v1h-1zM528,258h1v1h-1zM582,258h1v1h-1zM806,258h1v1h-1zM813,258h1v1h-1zM877,258h1v1h-1zM457,259h1v1h-1zM521,259h1v1h-1zM528,259h1v1h-1zM581,259h1v1h-1zM806,259h1v1h-1zM813,259h1v1h-1zM877,259h1v1h-1zM457,260h1v1h-1zM521,260h1v1h-1zM528,260h1v1h-1zM580,260h1v1h-1zM806,260h1v1h-1zM813,260h1v1h-1zM877,260h1v1h-1zM457,261h1v1h-1zM521,261h1v1h-1zM528,261h1v1h-1zM806,261h1v1h-1zM813,261h1v1h-1zM877,261h1v1h-1zM457,262h1v1h-1zM521,262h1v1h-1zM528,262h1v1h-1zM806,262h1v1h-1zM813,262h1v1h-1zM877,262h1v1h-1zM457,263h1v1h-1zM521,263h1v1h-1zM528,263h1v1h-1zM806,263h1v1h-1zM813,263h1v1h-1zM877,263h1v1h-1zM457,264h1v1h-1zM521,264h1v1h-1zM528,264h1v1h-1zM806,264h1v1h-1zM813,264h1v1h-1zM877,264h1v1h-1zM457,265h1v1h-1zM521,265h1v1h-1zM528,265h1v1h-1zM806,265h1v1h-1zM813,265h1v1h-1zM877,265h1v1h-1zM457,266h1v1h-1zM521,266h1v1h-1zM528,266h1v1h-1zM806,266h1v1h-1zM813,266h1v1h-1zM877,266h1v1h-1zM457,267h1v1h-1zM521,267h1v1h-1zM528,267h1v1h-1zM806,267h1v1h-1zM813,267h1v1h-1zM877,267h1v1h-1zM457,268h1v1h-1zM521,268h1v1h-1zM528,268h1v1h-1zM806,268h1v1h-1zM813,268h1v1h-1zM877,268h1v1h-1zM457,269h1v1h-1zM521,269h1v1h-1zM528,269h1v1h-1zM806,269h1v1h-1zM813,269h1v1h-1zM877,269h1v1h-1zM457,270h1v1h-1zM521,270h1v1h-1zM528,270h1v1h-1zM806,270h1v1h-1zM813,270h1v1h-1zM877,270h1v1h-1zM457,271h1v1h-1zM521,271h1v1h-1zM528,271h1v1h-1zM806,271h1v1h-1zM813,271h1v1h-1zM877,271h1v1h-1zM457,272h1v1h-1zM521,272h1v1h-1zM528,272h1v1h-1zM806,272h1v1h-1zM813,272h1v1h-1zM877,272h1v1h-1zM457,273h1v1h-1zM521,273h1v1h-1zM528,273h1v1h-1zM806,273h1v1h-1zM813,273h1v1h-1zM877,273h1v1h-1zM457,274h1v1h-1zM521,274h1v1h-1zM528,274h1v1h-1zM806,274h1v1h-1zM813,274h1v1h-1zM877,274h1v1h-1zM457,275h1v1h-1zM521,275h1v1h-1zM528,275h1v1h-1zM806,275h1v1h-1zM813,275h1v1h-1zM877,275h1v1h-1zM457,276h1v1h-1zM521,276h1v1h-1zM528,276h1v1h-1zM806,276h1v1h-1zM813,276h1v1h-1zM877,276h1v1h-1zM457,277h1v1h-1zM521,277h1v1h-1zM528,277h1v1h-1zM806,277h1v1h-1zM813,277h1v1h-1zM877,277h1v1h-1zM457,278h1v1h-1zM521,278h1v1h-1zM528,278h1v1h-1zM806,278h1v1h-1zM813,278h1v1h-1zM877,278h1v1h-1zM457,279h1v1h-1zM521,279h1v1h-1zM528,279h1v1h-1zM806,279h1v1h-1zM813,279h1v1h-1zM877,279h1v1h-1zM457,280h1v1h-1zM521,280h1v1h-1zM528,280h1v1h-1zM806,280h1v1h-1zM813,280h1v1h-1zM877,280h1v1h-1zM457,281h1v1h-1zM521,281h1v1h-1zM528,281h1v1h-1zM806,281h1v1h-1zM813,281h1v1h-1zM877,281h1v1h-1zM457,282h1v1h-1zM521,282h1v1h-1zM528,282h1v1h-1zM806,282h1v1h-1zM813,282h1v1h-1zM877,282h1v1h-1zM457,283h1v1h-1zM521,283h1v1h-1zM527,283h1v1h-1zM807,283h1v1h-1zM813,283h1v1h-1zM877,283h1v1h-1zM457,284h1v1h-1zM521,284h1v1h-1zM526,284h1v1h-1zM808,284h1v1h-1zM813,284h1v1h-1zM877,284h1v1h-1zM457,285h1v1h-1zM521,285h1v1h-1zM525,285h1v1h-1zM809,285h1v1h-1zM813,285h1v1h-1zM877,285h1v1h-1zM457,286h1v1h-1zM521,286h1v1h-1zM524,286h1v1h-1zM810,286h1v1h-1zM813,286h1v1h-1zM877,286h1v1h-1zM457,287h1v1h-1zM521,287h1v1h-1zM523,287h1v1h-1zM811,287h1v1h-1zM813,287h1v1h-1zM877,287h1v1h-1zM457,288h1v1h-1zM521,288h2v1h-2zM812,288h2v1h-2zM877,288h1v1h-1zM457,289h65v1h-65zM813,289h65v1h-65zM1154,316h1v1h-1zM1153,317h1v1h-1zM1152,318h1v1h-1zM1151,319h1v1h-1zM672,320h53v1h-53zM954,320h53v1h-53zM1150,320h1v1h-1zM1149,321h1v1h-1zM1148,322h1v1h-1zM1147,323h1v1h-1zM1146,324h1v1h-1zM1145,325h1v1h-1zM1144,326h1v1h-1zM1143,327h1v1h-1zM1142,328h1v1h-1zM1141,329h1v1h-1zM1140,330h1v1h-1zM1139,331h1v1h-1zM1138,332h1v1h-1zM1137,333h1v1h-1zM1136,334h1v1h-1zM1135,335h1v1h-1zM1134,336h1v1h-1zM1133,337h1v1h-1zM1132,338h1v1h-1zM1131,339h1v1h-1zM1130,340h1v1h-1zM1129,341h1v1h-1zM1128,342h1v1h-1zM568,343h106v1h-106zM1127,343h1v1h-1zM568,344h1v1h-1zM1126,344h1v1h-1zM567,345h1v1h-1zM1125,345h1v1h-1zM567,346h1v1h-1zM1124,346h1v1h-1zM566,347h1v1h-1zM1123,347h1v1h-1zM566,348h1v1h-1zM1122,348h1v1h-1zM503,349h1v1h-1zM566,349h1v1h-1zM1121,349h1v1h-1zM502,350h1v1h-1zM565,350h1v1h-1zM1120,350h1v1h-1zM501,351h1v1h-1zM565,351h1v1h-1zM1119,351h1v1h-1zM500,352h1v1h-1zM564,352h1v1h-1zM1118,352h1v1h-1zM499,353h1v1h-1zM564,353h1v1h-1zM498,354h1v1h-1zM564,354h1v1h-1zM497,355h1v1h-1zM563,355h1v1h-1zM496,356h1v1h-1zM563,356h1v1h-1zM495,357h1v1h-1zM563,357h1v1h-1zM494,358h1v1h-1zM562,358h1v1h-1zM493,359h1v1h-1zM562,359h1v1h-1zM492,360h1v1h-1zM561,360h1v1h-1zM491,361h1v1h-1zM554,361h22v1h-22zM490,362h1v1h-1zM553,362h1v1h-1zM561,362h1v1h-1zM574,362h2v1h-2zM489,363h1v1h-1zM552,363h1v1h-1zM560,363h1v1h-1zM573,363h1v1h-1zM575,363h1v1h-1zM488,364h1v1h-1zM550,364h2v1h-2zM560,364h1v1h-1zM571,364h2v1h-2zM575,364h1v1h-1zM487,365h1v1h-1zM549,365h1v1h-1zM559,365h1v1h-1zM570,365h1v1h-1zM575,365h1v1h-1zM486,366h1v1h-1zM548,366h1v1h-1zM559,366h1v1h-1zM569,366h1v1h-1zM575,366h1v1h-1zM485,367h1v1h-1zM547,367h1v1h-1zM568,367h1v1h-1zM575,367h1v1h-1zM484,368h1v1h-1zM546,368h22v1h-22zM575,368h1v1h-1zM483,369h1v1h-1zM546,369h1v1h-1zM567,369h1v1h-1zM575,369h1v1h-1zM482,370h1v1h-1zM546,370h1v1h-1zM567,370h1v1h-1zM575,370h1v1h-1zM1027,370h1v1h-1zM481,371h1v1h-1zM546,371h1v1h-1zM567,371h1v1h-1zM575,371h1v1h-1zM1026,371h1v1h-1zM480,372h1v1h-1zM546,372h1v1h-1zM567,372h1v1h-1zM575,372h1v1h-1zM1025,372h1v1h-1zM479,373h1v1h-1zM546,373h1v1h-1zM567,373h1v1h-1zM575,373h1v1h-1zM1024,373h1v1h-1zM478,374h1v1h-1zM546,374h1v1h-1zM567,374h1v1h-1zM575,374h1v1h-1zM1023,374h1v1h-1zM477,375h1v1h-1zM546,375h1v1h-1zM567,375h1v1h-1zM575,375h1v1h-1zM1022,375h1v1h-1zM476,376h1v1h-1zM546,376h1v1h-1zM567,376h1v1h-1zM575,376h1v1h-1zM1021,376h1v1h-1zM475,377h1v1h-1zM546,377h1v1h-1zM567,377h1v1h-1zM575,377h1v1h-1zM1020,377h1v1h-1zM474,378h1v1h-1zM546,378h1v1h-1zM567,378h1v1h-1zM575,378h1v1h-1zM1019,378h1v1h-1zM473,379h1v1h-1zM546,379h1v1h-1zM567,379h1v1h-1zM575,379h1v1h-1zM1018,379h1v1h-1zM472,380h1v1h-1zM546,380h1v1h-1zM567,380h1v1h-1zM575,380h1v1h-1zM1017,380h1v1h-1zM471,381h1v1h-1zM546,381h1v1h-1zM567,381h1v1h-1zM575,381h1v1h-1zM1016,381h1v1h-1zM470,382h1v1h-1zM546,382h1v1h-1zM567,382h1v1h-1zM575,382h1v1h-1zM1015,382h1v1h-1zM469,383h1v1h-1zM546,383h1v1h-1zM567,383h1v1h-1zM574,383h1v1h-1zM1014,383h1v1h-1zM468,384h1v1h-1zM546,384h1v1h-1zM567,384h1v1h-1zM573,384h1v1h-1zM1013,384h1v1h-1zM467,385h1v1h-1zM546,385h1v1h-1zM567,385h1v1h-1zM572,385h1v1h-1zM1012,385h1v1h-1zM466,386h1v1h-1zM546,386h1v1h-1zM567,386h1v1h-1zM570,386h2v1h-2zM1011,386h1v1h-1zM546,387h1v1h-1zM567,387h1v1h-1zM569,387h1v1h-1zM1010,387h1v1h-1zM546,388h1v1h-1zM567,388h2v1h-2zM1009,388h1v1h-1zM546,389h22v1h-22zM1009,389h1v1h-1zM556,390h1v1h-1zM1008,390h1v1h-1zM556,391h1v1h-1zM1007,391h1v1h-1zM1103,391h22v1h-22zM556,392h1v1h-1zM1006,392h1v1h-1zM1102,392h1v1h-1zM1123,392h2v1h-2zM556,393h1v1h-1zM1005,393h1v1h-1zM1101,393h1v1h-1zM1122,393h1v1h-1zM1124,393h1v1h-1zM556,394h1v1h-1zM1004,394h1v1h-1zM1100,394h1v1h-1zM1121,394h1v1h-1zM1124,394h1v1h-1zM556,395h1v1h-1zM1003,395h1v1h-1zM1099,395h1v1h-1zM1120,395h1v1h-1zM1124,395h1v1h-1zM556,396h1v1h-1zM1002,396h1v1h-1zM1098,396h1v1h-1zM1119,396h1v1h-1zM1124,396h1v1h-1zM556,397h1v1h-1zM1001,397h1v1h-1zM1097,397h1v1h-1zM1118,397h1v1h-1zM1124,397h1v1h-1zM556,398h1v1h-1zM1000,398h1v1h-1zM1096,398h1v1h-1zM1117,398h1v1h-1zM1124,398h1v1h-1zM556,399h1v1h-1zM999,399h1v1h-1zM1095,399h1v1h-1zM1116,399h1v1h-1zM1124,399h1v1h-1zM556,400h1v1h-1zM998,400h1v1h-1zM1094,400h1v1h-1zM1115,400h1v1h-1zM1124,400h1v1h-1zM556,401h1v1h-1zM997,401h1v1h-1zM1093,401h1v1h-1zM1114,401h1v1h-1zM1124,401h1v1h-1zM556,402h1v1h-1zM996,402h1v1h-1zM1092,402h1v1h-1zM1113,402h1v1h-1zM1124,402h1v1h-1zM556,403h1v1h-1zM995,403h1v1h-1zM1091,403h1v1h-1zM1112,403h1v1h-1zM1124,403h1v1h-1zM556,404h1v1h-1zM994,404h1v1h-1zM1090,404h1v1h-1zM1111,404h1v1h-1zM1124,404h1v1h-1zM556,405h1v1h-1zM993,405h1v1h-1zM1089,405h1v1h-1zM1110,405h1v1h-1zM1124,405h1v1h-1zM556,406h1v1h-1zM992,406h1v1h-1zM1088,406h1v1h-1zM1109,406h1v1h-1zM1124,406h1v1h-1zM556,407h1v1h-1zM991,407h1v1h-1zM1087,407h1v1h-1zM1108,407h1v1h-1zM1124,407h1v1h-1zM556,408h1v1h-1zM1086,408h1v1h-1zM1107,408h1v1h-1zM1124,408h1v1h-1zM556,409h1v1h-1zM1085,409h1v1h-1zM1106,409h1v1h-1zM1124,409h1v1h-1zM556,410h1v1h-1zM1084,410h1v1h-1zM1105,410h1v1h-1zM1124,410h1v1h-1zM556,411h1v1h-1zM1083,411h1v1h-1zM1104,411h1v1h-1zM1124,411h1v1h-1zM556,412h1v1h-1zM1082,412h1v1h-1zM1103,412h1v1h-1zM1124,412h1v1h-1zM556,413h1v1h-1zM1081,413h1v1h-1zM1102,413h1v1h-1zM1124,413h1v1h-1zM556,414h1v1h-1zM1081,414h1v1h-1zM1102,414h1v1h-1zM1124,414h1v1h-1zM556,415h1v1h-1zM1080,415h1v1h-1zM1101,415h1v1h-1zM1124,415h1v1h-1zM556,416h1v1h-1zM1079,416h1v1h-1zM1100,416h1v1h-1zM1124,416h1v1h-1zM556,417h1v1h-1zM1078,417h1v1h-1zM1099,417h1v1h-1zM1124,417h1v1h-1zM556,418h1v1h-1zM1077,418h1v1h-1zM1098,418h1v1h-1zM1124,418h1v1h-1zM556,419h1v1h-1zM1076,419h1v1h-1zM1097,419h1v1h-1zM1124,419h1v1h-1zM556,420h1v1h-1zM1075,420h1v1h-1zM1096,420h1v1h-1zM1124,420h1v1h-1zM1074,421h1v1h-1zM1095,421h1v1h-1zM1124,421h1v1h-1zM1073,422h1v1h-1zM1094,422h1v1h-1zM1124,422h1v1h-1zM1072,423h1v1h-1zM1093,423h1v1h-1zM1124,423h1v1h-1zM1071,424h1v1h-1zM1092,424h1v1h-1zM1124,424h1v1h-1zM1070,425h1v1h-1zM1091,425h1v1h-1zM1124,425h1v1h-1zM1069,426h1v1h-1zM1090,426h1v1h-1zM1124,426h1v1h-1zM1068,427h1v1h-1zM1089,427h1v1h-1zM1124,427h1v1h-1zM1067,428h1v1h-1zM1088,428h1v1h-1zM1124,428h1v1h-1zM1066,429h1v1h-1zM1087,429h1v1h-1zM1124,429h1v1h-1zM1065,430h1v1h-1zM1086,430h1v1h-1zM1124,430h1v1h-1zM1064,431h1v1h-1zM1085,431h1v1h-1zM1124,431h1v1h-1zM1063,432h1v1h-1zM1084,432h1v1h-1zM1124,432h1v1h-1zM1062,433h1v1h-1zM1083,433h1v1h-1zM1124,433h1v1h-1zM1061,434h1v1h-1zM1082,434h1v1h-1zM1123,434h1v1h-1zM370,435h53v1h-53zM477,435h53v1h-53zM1060,435h1v1h-1zM1081,435h1v1h-1zM1122,435h1v1h-1zM1059,436h1v1h-1zM1080,436h1v1h-1zM1121,436h1v1h-1zM1058,437h22v1h-22zM1120,437h1v1h-1zM1058,438h1v1h-1zM1079,438h1v1h-1zM1119,438h1v1h-1zM1058,439h1v1h-1zM1079,439h1v1h-1zM1118,439h1v1h-1zM1058,440h1v1h-1zM1079,440h1v1h-1zM1117,440h1v1h-1zM1058,441h1v1h-1zM1079,441h1v1h-1zM1116,441h1v1h-1zM1058,442h1v1h-1zM1079,442h1v1h-1zM1115,442h1v1h-1zM1058,443h1v1h-1zM1079,443h1v1h-1zM1114,443h1v1h-1zM1058,444h1v1h-1zM1079,444h1v1h-1zM1113,444h1v1h-1zM1058,445h1v1h-1zM1079,445h1v1h-1zM1112,445h1v1h-1zM1058,446h1v1h-1zM1079,446h1v1h-1zM1111,446h1v1h-1zM1058,447h1v1h-1zM1079,447h1v1h-1zM1110,447h1v1h-1zM1058,448h1v1h-1zM1079,448h1v1h-1zM1109,448h1v1h-1zM1058,449h1v1h-1zM1079,449h1v1h-1zM1108,449h1v1h-1zM1058,450h1v1h-1zM1079,450h1v1h-1zM1107,450h1v1h-1zM1058,451h1v1h-1zM1079,451h1v1h-1zM1106,451h1v1h-1zM1058,452h1v1h-1zM1079,452h1v1h-1zM1105,452h1v1h-1zM1058,453h1v1h-1zM1079,453h1v1h-1zM1104,453h1v1h-1zM1058,454h1v1h-1zM1079,454h1v1h-1zM1103,454h1v1h-1zM1058,455h1v1h-1zM1079,455h1v1h-1zM1102,455h1v1h-1zM1058,456h1v1h-1zM1079,456h1v1h-1zM1101,456h1v1h-1zM1058,457h1v1h-1zM1079,457h1v1h-1zM1101,457h1v1h-1zM1058,458h1v1h-1zM1079,458h1v1h-1zM1100,458h1v1h-1zM1058,459h1v1h-1zM1079,459h1v1h-1zM1099,459h1v1h-1zM1058,460h1v1h-1zM1079,460h1v1h-1zM1098,460h1v1h-1zM1058,461h1v1h-1zM1079,461h1v1h-1zM1097,461h1v1h-1zM1058,462h1v1h-1zM1079,462h1v1h-1zM1096,462h1v1h-1zM1058,463h1v1h-1zM1079,463h1v1h-1zM1095,463h1v1h-1zM654,464h48v1h-48zM1058,464h1v1h-1zM1079,464h1v1h-1zM1094,464h1v1h-1zM654,465h1v1h-1zM1058,465h1v1h-1zM1079,465h1v1h-1zM1093,465h1v1h-1zM653,466h1v1h-1zM1058,466h1v1h-1zM1079,466h1v1h-1zM1092,466h1v1h-1zM653,467h1v1h-1zM1058,467h1v1h-1zM1079,467h1v1h-1zM1091,467h1v1h-1zM652,468h1v1h-1zM1058,468h1v1h-1zM1079,468h1v1h-1zM1090,468h1v1h-1zM652,469h1v1h-1zM1058,469h1v1h-1zM1079,469h1v1h-1zM1089,469h1v1h-1zM651,470h1v1h-1zM1058,470h1v1h-1zM1079,470h1v1h-1zM1088,470h1v1h-1zM651,471h1v1h-1zM1058,471h1v1h-1zM1079,471h1v1h-1zM1087,471h1v1h-1zM651,472h1v1h-1zM802,472h49v1h-49zM1058,472h1v1h-1zM1079,472h1v1h-1zM1086,472h1v1h-1zM650,473h1v1h-1zM802,473h1v1h-1zM1058,473h1v1h-1zM1079,473h1v1h-1zM1085,473h1v1h-1zM650,474h1v1h-1zM801,474h1v1h-1zM1058,474h1v1h-1zM1079,474h1v1h-1zM1084,474h1v1h-1zM649,475h1v1h-1zM801,475h1v1h-1zM1058,475h1v1h-1zM1079,475h1v1h-1zM1083,475h1v1h-1zM649,476h1v1h-1zM800,476h1v1h-1zM1058,476h1v1h-1zM1079,476h1v1h-1zM1082,476h1v1h-1zM648,477h1v1h-1zM800,477h1v1h-1zM1058,477h1v1h-1zM1079,477h1v1h-1zM1081,477h1v1h-1zM648,478h1v1h-1zM800,478h1v1h-1zM1058,478h1v1h-1zM1079,478h2v1h-2zM648,479h1v1h-1zM799,479h1v1h-1zM1058,479h22v1h-22zM647,480h1v1h-1zM799,480h1v1h-1zM647,481h1v1h-1zM799,481h1v1h-1zM646,482h1v1h-1zM798,482h1v1h-1zM646,483h1v1h-1zM798,483h1v1h-1zM646,484h1v1h-1zM797,484h1v1h-1zM623,485h65v1h-65zM797,485h1v1h-1zM622,486h1v1h-1zM645,486h1v1h-1zM686,486h2v1h-2zM797,486h1v1h-1zM621,487h1v1h-1zM644,487h1v1h-1zM685,487h1v1h-1zM687,487h1v1h-1zM796,487h1v1h-1zM620,488h1v1h-1zM644,488h1v1h-1zM684,488h1v1h-1zM687,488h1v1h-1zM796,488h1v1h-1zM619,489h1v1h-1zM643,489h1v1h-1zM683,489h1v1h-1zM687,489h1v1h-1zM796,489h1v1h-1zM618,490h1v1h-1zM643,490h1v1h-1zM682,490h1v1h-1zM687,490h1v1h-1zM795,490h1v1h-1zM617,491h1v1h-1zM643,491h1v1h-1zM681,491h1v1h-1zM687,491h1v1h-1zM795,491h1v1h-1zM616,492h1v1h-1zM642,492h1v1h-1zM680,492h1v1h-1zM687,492h1v1h-1zM794,492h1v1h-1zM615,493h1v1h-1zM642,493h1v1h-1zM679,493h1v1h-1zM687,493h1v1h-1zM794,493h1v1h-1zM614,494h1v1h-1zM641,494h1v1h-1zM678,494h1v1h-1zM687,494h1v1h-1zM794,494h1v1h-1zM613,495h1v1h-1zM641,495h1v1h-1zM677,495h1v1h-1zM687,495h1v1h-1zM793,495h1v1h-1zM612,496h1v1h-1zM640,496h1v1h-1zM676,496h1v1h-1zM687,496h1v1h-1zM793,496h1v1h-1zM612,497h1v1h-1zM640,497h1v1h-1zM676,497h1v1h-1zM687,497h1v1h-1zM792,497h1v1h-1zM611,498h1v1h-1zM675,498h1v1h-1zM687,498h1v1h-1zM792,498h1v1h-1zM610,499h1v1h-1zM674,499h1v1h-1zM687,499h1v1h-1zM792,499h1v1h-1zM609,500h1v1h-1zM673,500h1v1h-1zM687,500h1v1h-1zM791,500h1v1h-1zM608,501h1v1h-1zM672,501h1v1h-1zM687,501h1v1h-1zM791,501h1v1h-1zM607,502h1v1h-1zM671,502h1v1h-1zM687,502h1v1h-1zM791,502h1v1h-1zM606,503h1v1h-1zM670,503h1v1h-1zM687,503h1v1h-1zM790,503h1v1h-1zM605,504h1v1h-1zM669,504h1v1h-1zM687,504h1v1h-1zM790,504h1v1h-1zM604,505h1v1h-1zM668,505h1v1h-1zM687,505h1v1h-1zM789,505h1v1h-1zM603,506h1v1h-1zM667,506h1v1h-1zM687,506h1v1h-1zM789,506h1v1h-1zM602,507h1v1h-1zM666,507h1v1h-1zM687,507h1v1h-1zM784,507h6v1h-6zM601,508h65v1h-65zM687,508h1v1h-1zM781,508h3v1h-3zM790,508h3v1h-3zM817,508h53v1h-53zM601,509h1v1h-1zM665,509h1v1h-1zM687,509h1v1h-1zM779,509h2v1h-2zM793,509h2v1h-2zM601,510h1v1h-1zM665,510h1v1h-1zM687,510h1v1h-1zM777,510h2v1h-2zM795,510h2v1h-2zM601,511h1v1h-1zM665,511h1v1h-1zM687,511h1v1h-1zM776,511h1v1h-1zM797,511h1v1h-1zM601,512h1v1h-1zM665,512h1v1h-1zM687,512h1v1h-1zM775,512h1v1h-1zM798,512h1v1h-1zM601,513h1v1h-1zM665,513h1v1h-1zM687,513h1v1h-1zM775,513h1v1h-1zM799,513h1v1h-1zM601,514h1v1h-1zM665,514h1v1h-1zM687,514h1v1h-1zM774,514h1v1h-1zM799,514h1v1h-1zM601,515h1v1h-1zM665,515h1v1h-1zM687,515h1v1h-1zM773,515h1v1h-1zM800,515h1v1h-1zM601,516h1v1h-1zM665,516h1v1h-1zM687,516h1v1h-1zM773,516h1v1h-1zM800,516h1v1h-1zM601,517h1v1h-1zM665,517h1v1h-1zM687,517h1v1h-1zM773,517h1v1h-1zM800,517h1v1h-1zM601,518h1v1h-1zM665,518h1v1h-1zM687,518h1v1h-1zM773,518h1v1h-1zM801,518h1v1h-1zM601,519h1v1h-1zM665,519h1v1h-1zM687,519h1v1h-1zM772,519h1v1h-1zM801,519h1v1h-1zM601,520h1v1h-1zM665,520h1v1h-1zM687,520h1v1h-1zM772,520h1v1h-1zM801,520h1v1h-1zM601,521h1v1h-1zM665,521h1v1h-1zM687,521h1v1h-1zM772,521h1v1h-1zM801,521h1v1h-1zM601,522h1v1h-1zM665,522h1v1h-1zM687,522h1v1h-1zM772,522h1v1h-1zM801,522h1v1h-1zM601,523h1v1h-1zM665,523h1v1h-1zM687,523h1v1h-1zM772,523h1v1h-1zM801,523h1v1h-1zM601,524h1v1h-1zM665,524h1v1h-1zM687,524h1v1h-1zM772,524h1v1h-1zM800,524h1v1h-1zM601,525h1v1h-1zM665,525h1v1h-1zM687,525h1v1h-1zM773,525h1v1h-1zM800,525h1v1h-1zM601,526h1v1h-1zM665,526h1v1h-1zM687,526h1v1h-1zM773,526h1v1h-1zM800,526h1v1h-1zM601,527h1v1h-1zM665,527h1v1h-1zM687,527h1v1h-1zM773,527h1v1h-1zM800,527h1v1h-1zM601,528h1v1h-1zM665,528h1v1h-1zM686,528h1v1h-1zM774,528h1v1h-1zM799,528h1v1h-1zM601,529h1v1h-1zM665,529h1v1h-1zM685,529h1v1h-1zM774,529h1v1h-1zM798,529h1v1h-1zM601,530h1v1h-1zM665,530h1v1h-1zM684,530h1v1h-1zM775,530h1v1h-1zM798,530h1v1h-1zM601,531h1v1h-1zM665,531h1v1h-1zM683,531h1v1h-1zM776,531h1v1h-1zM797,531h1v1h-1zM601,532h1v1h-1zM665,532h1v1h-1zM682,532h1v1h-1zM777,532h2v1h-2zM795,532h2v1h-2zM601,533h1v1h-1zM665,533h1v1h-1zM681,533h1v1h-1zM779,533h2v1h-2zM793,533h2v1h-2zM601,534h1v1h-1zM665,534h1v1h-1zM680,534h1v1h-1zM781,534h2v1h-2zM791,534h2v1h-2zM601,535h1v1h-1zM665,535h1v1h-1zM679,535h1v1h-1zM783,535h3v1h-3zM789,535h2v1h-2zM601,536h1v1h-1zM665,536h1v1h-1zM678,536h1v1h-1zM786,536h3v1h-3zM601,537h1v1h-1zM665,537h1v1h-1zM677,537h1v1h-1zM601,538h1v1h-1zM665,538h1v1h-1zM676,538h1v1h-1zM601,539h1v1h-1zM665,539h1v1h-1zM676,539h1v1h-1zM601,540h1v1h-1zM665,540h1v1h-1zM675,540h1v1h-1zM315,541h22v1h-22zM601,541h1v1h-1zM665,541h1v1h-1zM674,541h1v1h-1zM314,542h1v1h-1zM335,542h2v1h-2zM601,542h1v1h-1zM665,542h1v1h-1zM673,542h1v1h-1zM928,542h1v1h-1zM313,543h1v1h-1zM334,543h1v1h-1zM336,543h1v1h-1zM601,543h1v1h-1zM665,543h1v1h-1zM672,543h1v1h-1zM927,543h1v1h-1zM312,544h1v1h-1zM333,544h1v1h-1zM336,544h1v1h-1zM601,544h1v1h-1zM665,544h1v1h-1zM671,544h1v1h-1zM926,544h1v1h-1zM311,545h1v1h-1zM332,545h1v1h-1zM336,545h1v1h-1zM601,545h1v1h-1zM665,545h1v1h-1zM670,545h1v1h-1zM925,545h1v1h-1zM310,546h1v1h-1zM331,546h1v1h-1zM336,546h1v1h-1zM601,546h1v1h-1zM665,546h1v1h-1zM669,546h1v1h-1zM924,546h1v1h-1zM309,547h1v1h-1zM330,547h1v1h-1zM336,547h1v1h-1zM601,547h1v1h-1zM665,547h1v1h-1zM668,547h1v1h-1zM923,547h1v1h-1zM308,548h1v1h-1zM329,548h1v1h-1zM336,548h1v1h-1zM601,548h1v1h-1zM665,548h1v1h-1zM667,548h1v1h-1zM922,548h1v1h-1zM307,549h1v1h-1zM328,549h1v1h-1zM336,549h1v1h-1zM601,549h1v1h-1zM665,549h2v1h-2zM921,549h1v1h-1zM306,550h1v1h-1zM327,550h1v1h-1zM336,550h1v1h-1zM601,550h65v1h-65zM920,550h1v1h-1zM305,551h1v1h-1zM326,551h1v1h-1zM336,551h1v1h-1zM919,551h1v1h-1zM304,552h1v1h-1zM325,552h1v1h-1zM336,552h1v1h-1zM918,552h1v1h-1zM303,553h1v1h-1zM324,553h1v1h-1zM336,553h1v1h-1zM917,553h1v1h-1zM302,554h1v1h-1zM323,554h1v1h-1zM336,554h1v1h-1zM916,554h1v1h-1zM301,555h1v1h-1zM322,555h1v1h-1zM336,555h1v1h-1zM915,555h1v1h-1zM300,556h1v1h-1zM321,556h1v1h-1zM336,556h1v1h-1zM914,556h1v1h-1zM299,557h1v1h-1zM320,557h1v1h-1zM336,557h1v1h-1zM913,557h1v1h-1zM298,558h1v1h-1zM319,558h1v1h-1zM336,558h1v1h-1zM912,558h1v1h-1zM297,559h1v1h-1zM318,559h1v1h-1zM336,559h1v1h-1zM911,559h1v1h-1zM296,560h1v1h-1zM317,560h1v1h-1zM336,560h1v1h-1zM909,560h2v1h-2zM295,561h1v1h-1zM316,561h1v1h-1zM336,561h1v1h-1zM908,561h1v1h-1zM294,562h1v1h-1zM315,562h1v1h-1zM336,562h1v1h-1zM907,562h1v1h-1zM293,563h1v1h-1zM314,563h1v1h-1zM336,563h1v1h-1zM906,563h1v1h-1zM292,564h1v1h-1zM313,564h1v1h-1zM336,564h1v1h-1zM905,564h1v1h-1zM291,565h1v1h-1zM312,565h1v1h-1zM336,565h1v1h-1zM904,565h1v1h-1zM290,566h1v1h-1zM311,566h1v1h-1zM336,566h1v1h-1zM903,566h1v1h-1zM289,567h1v1h-1zM310,567h1v1h-1zM336,567h1v1h-1zM902,567h1v1h-1zM288,568h1v1h-1zM309,568h1v1h-1zM336,568h1v1h-1zM901,568h1v1h-1zM287,569h1v1h-1zM308,569h1v1h-1zM336,569h1v1h-1zM900,569h1v1h-1zM286,570h1v1h-1zM307,570h1v1h-1zM336,570h1v1h-1zM899,570h1v1h-1zM285,571h1v1h-1zM306,571h1v1h-1zM336,571h1v1h-1zM898,571h1v1h-1zM225,572h1v1h-1zM284,572h1v1h-1zM305,572h1v1h-1zM336,572h1v1h-1zM897,572h1v1h-1zM224,573h1v1h-1zM283,573h1v1h-1zM304,573h1v1h-1zM336,573h1v1h-1zM896,573h1v1h-1zM223,574h1v1h-1zM282,574h1v1h-1zM303,574h1v1h-1zM336,574h1v1h-1zM895,574h1v1h-1zM222,575h1v1h-1zM281,575h1v1h-1zM302,575h1v1h-1zM336,575h1v1h-1zM894,575h1v1h-1zM221,576h1v1h-1zM280,576h1v1h-1zM301,576h1v1h-1zM336,576h1v1h-1zM893,576h1v1h-1zM220,577h1v1h-1zM279,577h1v1h-1zM300,577h1v1h-1zM336,577h1v1h-1zM823,577h1v1h-1zM892,577h1v1h-1zM219,578h1v1h-1zM278,578h1v1h-1zM299,578h1v1h-1zM336,578h1v1h-1zM822,578h1v1h-1zM891,578h1v1h-1zM218,579h1v1h-1zM277,579h1v1h-1zM298,579h1v1h-1zM336,579h1v1h-1zM821,579h1v1h-1zM217,580h1v1h-1zM276,580h1v1h-1zM297,580h1v1h-1zM336,580h1v1h-1zM820,580h1v1h-1zM216,581h1v1h-1zM275,581h1v1h-1zM296,581h1v1h-1zM336,581h1v1h-1zM819,581h1v1h-1zM215,582h1v1h-1zM274,582h1v1h-1zM295,582h1v1h-1zM336,582h1v1h-1zM818,582h1v1h-1zM214,583h1v1h-1zM273,583h1v1h-1zM294,583h1v1h-1zM336,583h1v1h-1zM817,583h1v1h-1zM213,584h1v1h-1zM272,584h1v1h-1zM293,584h1v1h-1zM335,584h1v1h-1zM816,584h1v1h-1zM212,585h1v1h-1zM271,585h1v1h-1zM292,585h1v1h-1zM334,585h1v1h-1zM815,585h1v1h-1zM211,586h1v1h-1zM270,586h1v1h-1zM291,586h1v1h-1zM333,586h1v1h-1zM814,586h1v1h-1zM210,587h1v1h-1zM269,587h22v1h-22zM332,587h1v1h-1zM813,587h1v1h-1zM209,588h1v1h-1zM269,588h1v1h-1zM290,588h1v1h-1zM331,588h1v1h-1zM812,588h1v1h-1zM208,589h1v1h-1zM269,589h1v1h-1zM290,589h1v1h-1zM330,589h1v1h-1zM811,589h1v1h-1zM207,590h1v1h-1zM269,590h1v1h-1zM290,590h1v1h-1zM329,590h1v1h-1zM810,590h1v1h-1zM206,591h1v1h-1zM269,591h1v1h-1zM290,591h1v1h-1zM328,591h1v1h-1zM809,591h1v1h-1zM205,592h1v1h-1zM269,592h1v1h-1zM290,592h1v1h-1zM327,592h1v1h-1zM808,592h1v1h-1zM204,593h1v1h-1zM269,593h1v1h-1zM290,593h1v1h-1zM326,593h1v1h-1zM807,593h1v1h-1zM203,594h1v1h-1zM269,594h1v1h-1zM290,594h1v1h-1zM325,594h1v1h-1zM806,594h1v1h-1zM202,595h1v1h-1zM269,595h1v1h-1zM290,595h1v1h-1zM324,595h1v1h-1zM805,595h1v1h-1zM201,596h1v1h-1zM269,596h1v1h-1zM290,596h1v1h-1zM323,596h1v1h-1zM804,596h1v1h-1zM200,597h1v1h-1zM269,597h1v1h-1zM290,597h1v1h-1zM322,597h1v1h-1zM803,597h1v1h-1zM199,598h1v1h-1zM269,598h1v1h-1zM290,598h1v1h-1zM321,598h1v1h-1zM802,598h1v1h-1zM198,599h1v1h-1zM269,599h1v1h-1zM290,599h1v1h-1zM320,599h1v1h-1zM801,599h1v1h-1zM893,599h23v1h-23zM197,600h1v1h-1zM269,600h1v1h-1zM290,600h1v1h-1zM319,600h1v1h-1zM800,600h1v1h-1zM892,600h1v1h-1zM914,600h2v1h-2zM196,601h1v1h-1zM269,601h1v1h-1zM290,601h1v1h-1zM318,601h1v1h-1zM799,601h1v1h-1zM891,601h1v1h-1zM913,601h1v1h-1zM915,601h1v1h-1zM195,602h1v1h-1zM269,602h1v1h-1zM290,602h1v1h-1zM317,602h1v1h-1zM798,602h1v1h-1zM890,602h1v1h-1zM912,602h1v1h-1zM915,602h1v1h-1zM194,603h1v1h-1zM269,603h1v1h-1zM290,603h1v1h-1zM316,603h1v1h-1zM797,603h1v1h-1zM889,603h1v1h-1zM911,603h1v1h-1zM915,603h1v1h-1zM193,604h1v1h-1zM269,604h1v1h-1zM290,604h1v1h-1zM315,604h1v1h-1zM796,604h1v1h-1zM888,604h1v1h-1zM910,604h1v1h-1zM915,604h1v1h-1zM192,605h1v1h-1zM269,605h1v1h-1zM290,605h1v1h-1zM314,605h1v1h-1zM795,605h1v1h-1zM887,605h1v1h-1zM909,605h1v1h-1zM915,605h1v1h-1zM191,606h1v1h-1zM269,606h1v1h-1zM290,606h1v1h-1zM313,606h1v1h-1zM794,606h1v1h-1zM886,606h1v1h-1zM908,606h1v1h-1zM915,606h1v1h-1zM190,607h1v1h-1zM269,607h1v1h-1zM290,607h1v1h-1zM312,607h1v1h-1zM793,607h1v1h-1zM885,607h1v1h-1zM907,607h1v1h-1zM915,607h1v1h-1zM189,608h1v1h-1zM269,608h1v1h-1zM290,608h1v1h-1zM311,608h1v1h-1zM792,608h1v1h-1zM884,608h1v1h-1zM906,608h1v1h-1zM915,608h1v1h-1zM188,609h1v1h-1zM269,609h1v1h-1zM290,609h1v1h-1zM310,609h1v1h-1zM791,609h1v1h-1zM883,609h1v1h-1zM905,609h1v1h-1zM915,609h1v1h-1zM269,610h1v1h-1zM290,610h1v1h-1zM309,610h1v1h-1zM790,610h1v1h-1zM882,610h1v1h-1zM904,610h1v1h-1zM915,610h1v1h-1zM269,611h1v1h-1zM290,611h1v1h-1zM308,611h1v1h-1zM789,611h1v1h-1zM882,611h1v1h-1zM904,611h1v1h-1zM915,611h1v1h-1zM269,612h1v1h-1zM290,612h1v1h-1zM307,612h1v1h-1zM788,612h1v1h-1zM881,612h1v1h-1zM903,612h1v1h-1zM915,612h1v1h-1zM269,613h1v1h-1zM290,613h1v1h-1zM306,613h1v1h-1zM787,613h1v1h-1zM880,613h1v1h-1zM902,613h1v1h-1zM915,613h1v1h-1zM269,614h1v1h-1zM290,614h1v1h-1zM305,614h1v1h-1zM786,614h1v1h-1zM879,614h1v1h-1zM901,614h1v1h-1zM915,614h1v1h-1zM269,615h1v1h-1zM290,615h1v1h-1zM304,615h1v1h-1zM878,615h1v1h-1zM900,615h1v1h-1zM915,615h1v1h-1zM269,616h1v1h-1zM290,616h1v1h-1zM303,616h1v1h-1zM877,616h1v1h-1zM899,616h1v1h-1zM915,616h1v1h-1zM269,617h1v1h-1zM290,617h1v1h-1zM302,617h1v1h-1zM876,617h1v1h-1zM898,617h1v1h-1zM915,617h1v1h-1zM269,618h1v1h-1zM290,618h1v1h-1zM301,618h1v1h-1zM875,618h1v1h-1zM897,618h1v1h-1zM915,618h1v1h-1zM269,619h1v1h-1zM290,619h1v1h-1zM300,619h1v1h-1zM874,619h1v1h-1zM896,619h1v1h-1zM915,619h1v1h-1zM269,620h1v1h-1zM290,620h1v1h-1zM299,620h1v1h-1zM873,620h1v1h-1zM895,620h1v1h-1zM915,620h1v1h-1zM269,621h1v1h-1zM290,621h1v1h-1zM298,621h1v1h-1zM872,621h1v1h-1zM894,621h1v1h-1zM915,621h1v1h-1zM269,622h1v1h-1zM290,622h1v1h-1zM297,622h1v1h-1zM871,622h1v1h-1zM893,622h1v1h-1zM915,622h1v1h-1zM269,623h1v1h-1zM290,623h1v1h-1zM296,623h1v1h-1zM870,623h1v1h-1zM892,623h1v1h-1zM915,623h1v1h-1zM269,624h1v1h-1zM290,624h1v1h-1zM295,624h1v1h-1zM869,624h1v1h-1zM891,624h1v1h-1zM915,624h1v1h-1zM269,625h1v1h-1zM290,625h1v1h-1zM294,625h1v1h-1zM868,625h1v1h-1zM890,625h1v1h-1zM915,625h1v1h-1zM269,626h1v1h-1zM290,626h1v1h-1zM293,626h1v1h-1zM867,626h1v1h-1zM889,626h1v1h-1zM915,626h1v1h-1zM269,627h1v1h-1zM290,627h1v1h-1zM292,627h1v1h-1zM866,627h1v1h-1zM888,627h1v1h-1zM915,627h1v1h-1zM269,628h1v1h-1zM290,628h2v1h-2zM865,628h1v1h-1zM887,628h1v1h-1zM915,628h1v1h-1zM269,629h22v1h-22zM864,629h1v1h-1zM886,629h1v1h-1zM915,629h1v1h-1zM863,630h1v1h-1zM885,630h1v1h-1zM915,630h1v1h-1zM862,631h1v1h-1zM884,631h1v1h-1zM915,631h1v1h-1zM861,632h1v1h-1zM883,632h1v1h-1zM915,632h1v1h-1zM860,633h1v1h-1zM882,633h1v1h-1zM915,633h1v1h-1zM860,634h1v1h-1zM882,634h1v1h-1zM915,634h1v1h-1zM859,635h1v1h-1zM881,635h1v1h-1zM915,635h1v1h-1zM858,636h1v1h-1zM880,636h1v1h-1zM915,636h1v1h-1zM218,637h22v1h-22zM857,637h1v1h-1zM879,637h1v1h-1zM915,637h1v1h-1zM217,638h1v1h-1zM238,638h2v1h-2zM856,638h1v1h-1zM878,638h1v1h-1zM915,638h1v1h-1zM216,639h1v1h-1zM237,639h1v1h-1zM239,639h1v1h-1zM264,639h1v1h-1zM855,639h1v1h-1zM877,639h1v1h-1zM915,639h1v1h-1zM215,640h1v1h-1zM236,640h1v1h-1zM239,640h1v1h-1zM265,640h2v1h-2zM854,640h1v1h-1zM876,640h1v1h-1zM915,640h1v1h-1zM214,641h1v1h-1zM235,641h1v1h-1zM239,641h1v1h-1zM267,641h2v1h-2zM853,641h1v1h-1zM875,641h1v1h-1zM915,641h1v1h-1zM213,642h1v1h-1zM234,642h1v1h-1zM239,642h1v1h-1zM269,642h1v1h-1zM852,642h1v1h-1zM874,642h1v1h-1zM915,642h1v1h-1zM212,643h1v1h-1zM233,643h1v1h-1zM239,643h1v1h-1zM270,643h2v1h-2zM851,643h1v1h-1zM873,643h1v1h-1zM914,643h1v1h-1zM211,644h1v1h-1zM232,644h1v1h-1zM239,644h1v1h-1zM272,644h2v1h-2zM850,644h1v1h-1zM872,644h1v1h-1zM913,644h1v1h-1zM210,645h1v1h-1zM231,645h1v1h-1zM239,645h1v1h-1zM274,645h2v1h-2zM849,645h23v1h-23zM912,645h1v1h-1zM209,646h1v1h-1zM230,646h1v1h-1zM239,646h1v1h-1zM276,646h1v1h-1zM849,646h1v1h-1zM871,646h1v1h-1zM911,646h1v1h-1zM208,647h1v1h-1zM229,647h1v1h-1zM239,647h1v1h-1zM277,647h2v1h-2zM849,647h1v1h-1zM871,647h1v1h-1zM910,647h1v1h-1zM207,648h1v1h-1zM228,648h1v1h-1zM239,648h1v1h-1zM279,648h2v1h-2zM849,648h1v1h-1zM871,648h1v1h-1zM909,648h1v1h-1zM206,649h1v1h-1zM227,649h1v1h-1zM239,649h1v1h-1zM281,649h1v1h-1zM849,649h1v1h-1zM871,649h1v1h-1zM908,649h1v1h-1zM205,650h1v1h-1zM226,650h1v1h-1zM239,650h1v1h-1zM282,650h2v1h-2zM849,650h1v1h-1zM871,650h1v1h-1zM907,650h1v1h-1zM204,651h1v1h-1zM225,651h1v1h-1zM239,651h1v1h-1zM284,651h2v1h-2zM849,651h1v1h-1zM871,651h1v1h-1zM906,651h1v1h-1zM203,652h1v1h-1zM224,652h1v1h-1zM239,652h1v1h-1zM286,652h1v1h-1zM849,652h1v1h-1zM871,652h1v1h-1zM905,652h1v1h-1zM202,653h1v1h-1zM223,653h1v1h-1zM239,653h1v1h-1zM287,653h2v1h-2zM849,653h1v1h-1zM871,653h1v1h-1zM904,653h1v1h-1zM201,654h1v1h-1zM222,654h1v1h-1zM239,654h1v1h-1zM289,654h2v1h-2zM849,654h1v1h-1zM871,654h1v1h-1zM904,654h1v1h-1zM200,655h1v1h-1zM221,655h1v1h-1zM239,655h1v1h-1zM291,655h2v1h-2zM849,655h1v1h-1zM871,655h1v1h-1zM903,655h1v1h-1zM199,656h1v1h-1zM220,656h1v1h-1zM239,656h1v1h-1zM293,656h1v1h-1zM849,656h1v1h-1zM871,656h1v1h-1zM902,656h1v1h-1zM198,657h1v1h-1zM219,657h1v1h-1zM239,657h1v1h-1zM294,657h2v1h-2zM849,657h1v1h-1zM871,657h1v1h-1zM901,657h1v1h-1zM197,658h1v1h-1zM218,658h1v1h-1zM239,658h1v1h-1zM296,658h2v1h-2zM849,658h1v1h-1zM871,658h1v1h-1zM900,658h1v1h-1zM196,659h1v1h-1zM217,659h1v1h-1zM239,659h1v1h-1zM298,659h1v1h-1zM849,659h1v1h-1zM871,659h1v1h-1zM899,659h1v1h-1zM196,660h1v1h-1zM217,660h1v1h-1zM239,660h1v1h-1zM299,660h2v1h-2zM849,660h1v1h-1zM871,660h1v1h-1zM898,660h1v1h-1zM195,661h1v1h-1zM216,661h1v1h-1zM239,661h1v1h-1zM301,661h2v1h-2zM849,661h1v1h-1zM871,661h1v1h-1zM897,661h1v1h-1zM194,662h1v1h-1zM215,662h1v1h-1zM239,662h1v1h-1zM303,662h2v1h-2zM849,662h1v1h-1zM871,662h1v1h-1zM896,662h1v1h-1zM193,663h1v1h-1zM214,663h1v1h-1zM239,663h1v1h-1zM305,663h1v1h-1zM849,663h1v1h-1zM871,663h1v1h-1zM895,663h1v1h-1zM192,664h1v1h-1zM213,664h1v1h-1zM239,664h1v1h-1zM306,664h2v1h-2zM849,664h1v1h-1zM871,664h1v1h-1zM894,664h1v1h-1zM191,665h1v1h-1zM212,665h1v1h-1zM239,665h1v1h-1zM308,665h2v1h-2zM849,665h1v1h-1zM871,665h1v1h-1zM893,665h1v1h-1zM190,666h1v1h-1zM211,666h1v1h-1zM239,666h1v1h-1zM310,666h47v1h-47zM849,666h1v1h-1zM871,666h1v1h-1zM892,666h1v1h-1zM189,667h1v1h-1zM210,667h1v1h-1zM239,667h1v1h-1zM849,667h1v1h-1zM871,667h1v1h-1zM891,667h1v1h-1zM188,668h1v1h-1zM209,668h1v1h-1zM239,668h1v1h-1zM849,668h1v1h-1zM871,668h1v1h-1zM890,668h1v1h-1zM187,669h1v1h-1zM208,669h1v1h-1zM239,669h1v1h-1zM849,669h1v1h-1zM871,669h1v1h-1zM889,669h1v1h-1zM186,670h1v1h-1zM207,670h1v1h-1zM239,670h1v1h-1zM849,670h1v1h-1zM871,670h1v1h-1zM888,670h1v1h-1zM185,671h1v1h-1zM206,671h1v1h-1zM239,671h1v1h-1zM849,671h1v1h-1zM871,671h1v1h-1zM887,671h1v1h-1zM184,672h1v1h-1zM205,672h1v1h-1zM239,672h1v1h-1zM849,672h1v1h-1zM871,672h1v1h-1zM886,672h1v1h-1zM183,673h1v1h-1zM204,673h1v1h-1zM239,673h1v1h-1zM849,673h1v1h-1zM871,673h1v1h-1zM885,673h1v1h-1zM182,674h1v1h-1zM203,674h1v1h-1zM239,674h1v1h-1zM849,674h1v1h-1zM871,674h1v1h-1zM884,674h1v1h-1zM181,675h1v1h-1zM202,675h1v1h-1zM239,675h1v1h-1zM849,675h1v1h-1zM871,675h1v1h-1zM883,675h1v1h-1zM180,676h1v1h-1zM201,676h1v1h-1zM239,676h1v1h-1zM849,676h1v1h-1zM871,676h1v1h-1zM882,676h1v1h-1zM179,677h1v1h-1zM200,677h1v1h-1zM239,677h1v1h-1zM849,677h1v1h-1zM871,677h1v1h-1zM882,677h1v1h-1zM178,678h1v1h-1zM199,678h1v1h-1zM239,678h1v1h-1zM849,678h1v1h-1zM871,678h1v1h-1zM881,678h1v1h-1zM177,679h1v1h-1zM198,679h1v1h-1zM239,679h1v1h-1zM849,679h1v1h-1zM871,679h1v1h-1zM880,679h1v1h-1zM176,680h1v1h-1zM197,680h1v1h-1zM238,680h1v1h-1zM849,680h1v1h-1zM871,680h1v1h-1zM879,680h1v1h-1zM175,681h1v1h-1zM196,681h1v1h-1zM237,681h1v1h-1zM849,681h1v1h-1zM871,681h1v1h-1zM878,681h1v1h-1zM174,682h1v1h-1zM195,682h1v1h-1zM236,682h1v1h-1zM849,682h1v1h-1zM871,682h1v1h-1zM877,682h1v1h-1zM173,683h22v1h-22zM235,683h1v1h-1zM849,683h1v1h-1zM871,683h1v1h-1zM876,683h1v1h-1zM173,684h1v1h-1zM194,684h1v1h-1zM234,684h1v1h-1zM849,684h1v1h-1zM871,684h1v1h-1zM875,684h1v1h-1zM173,685h1v1h-1zM194,685h1v1h-1zM233,685h1v1h-1zM849,685h1v1h-1zM871,685h1v1h-1zM874,685h1v1h-1zM173,686h1v1h-1zM194,686h1v1h-1zM232,686h1v1h-1zM849,686h1v1h-1zM871,686h1v1h-1zM873,686h1v1h-1zM173,687h1v1h-1zM194,687h1v1h-1zM231,687h1v1h-1zM849,687h1v1h-1zM871,687h2v1h-2zM173,688h1v1h-1zM194,688h1v1h-1zM230,688h1v1h-1zM849,688h23v1h-23zM173,689h1v1h-1zM194,689h1v1h-1zM229,689h1v1h-1zM173,690h1v1h-1zM194,690h1v1h-1zM228,690h1v1h-1zM173,691h1v1h-1zM194,691h1v1h-1zM227,691h1v1h-1zM173,692h1v1h-1zM194,692h1v1h-1zM226,692h1v1h-1zM173,693h1v1h-1zM194,693h1v1h-1zM225,693h1v1h-1zM173,694h1v1h-1zM194,694h1v1h-1zM224,694h1v1h-1zM173,695h1v1h-1zM194,695h1v1h-1zM223,695h1v1h-1zM173,696h1v1h-1zM194,696h1v1h-1zM222,696h1v1h-1zM173,697h1v1h-1zM194,697h1v1h-1zM221,697h1v1h-1zM173,698h1v1h-1zM194,698h1v1h-1zM220,698h1v1h-1zM173,699h1v1h-1zM194,699h1v1h-1zM219,699h1v1h-1zM173,700h1v1h-1zM194,700h1v1h-1zM218,700h1v1h-1zM173,701h1v1h-1zM194,701h1v1h-1zM217,701h1v1h-1zM173,702h1v1h-1zM194,702h1v1h-1zM216,702h1v1h-1zM173,703h1v1h-1zM194,703h1v1h-1zM216,703h1v1h-1zM173,704h1v1h-1zM194,704h1v1h-1zM215,704h1v1h-1zM173,705h1v1h-1zM194,705h1v1h-1zM214,705h1v1h-1zM173,706h1v1h-1zM194,706h1v1h-1zM213,706h1v1h-1zM173,707h1v1h-1zM194,707h1v1h-1zM212,707h1v1h-1zM173,708h1v1h-1zM194,708h1v1h-1zM211,708h1v1h-1zM173,709h1v1h-1zM194,709h1v1h-1zM210,709h1v1h-1zM173,710h1v1h-1zM194,710h1v1h-1zM209,710h1v1h-1zM173,711h1v1h-1zM194,711h1v1h-1zM208,711h1v1h-1zM173,712h1v1h-1zM194,712h1v1h-1zM207,712h1v1h-1zM173,713h1v1h-1zM194,713h1v1h-1zM206,713h1v1h-1zM173,714h1v1h-1zM194,714h1v1h-1zM205,714h1v1h-1zM173,715h1v1h-1zM194,715h1v1h-1zM204,715h1v1h-1zM173,716h1v1h-1zM194,716h1v1h-1zM203,716h1v1h-1zM173,717h1v1h-1zM194,717h1v1h-1zM202,717h1v1h-1zM683,717h1v1h-1zM173,718h1v1h-1zM194,718h1v1h-1zM201,718h1v1h-1zM682,718h1v1h-1zM173,719h1v1h-1zM194,719h1v1h-1zM200,719h1v1h-1zM681,719h1v1h-1zM173,720h1v1h-1zM194,720h1v1h-1zM199,720h1v1h-1zM680,720h1v1h-1zM173,721h1v1h-1zM194,721h1v1h-1zM198,721h1v1h-1zM679,721h1v1h-1zM173,722h1v1h-1zM194,722h1v1h-1zM197,722h1v1h-1zM678,722h1v1h-1zM173,723h1v1h-1zM194,723h1v1h-1zM196,723h1v1h-1zM677,723h1v1h-1zM173,724h1v1h-1zM194,724h2v1h-2zM676,724h1v1h-1zM173,725h22v1h-22zM675,725h1v1h-1zM674,726h1v1h-1zM673,727h1v1h-1zM672,728h1v1h-1zM671,729h1v1h-1zM670,730h1v1h-1zM669,731h1v1h-1zM668,732h1v1h-1zM667,733h1v1h-1zM666,734h1v1h-1zM168,735h1v1h-1zM665,735h1v1h-1zM169,736h2v1h-2zM664,736h1v1h-1zM171,737h2v1h-2zM663,737h1v1h-1zM173,738h1v1h-1zM662,738h1v1h-1zM174,739h2v1h-2zM661,739h1v1h-1zM176,740h2v1h-2zM660,740h1v1h-1zM178,741h2v1h-2zM659,741h1v1h-1zM180,742h1v1h-1zM658,742h1v1h-1zM181,743h2v1h-2zM657,743h1v1h-1zM183,744h2v1h-2zM656,744h1v1h-1zM185,745h1v1h-1zM655,745h1v1h-1zM186,746h2v1h-2zM654,746h1v1h-1zM188,747h2v1h-2zM653,747h1v1h-1zM190,748h1v1h-1zM652,748h1v1h-1zM191,749h2v1h-2zM651,749h1v1h-1zM193,750h2v1h-2zM650,750h1v1h-1zM195,751h2v1h-2zM649,751h1v1h-1zM197,752h1v1h-1zM648,752h1v1h-1zM198,753h2v1h-2zM647,753h1v1h-1zM200,754h2v1h-2zM646,754h1v1h-1zM202,755h1v1h-1zM203,756h2v1h-2zM205,757h2v1h-2zM207,758h2v1h-2zM209,759h1v1h-1zM210,760h2v1h-2zM212,761h2v1h-2zM214,762h49v1h-49zM166,799h1v1h-1zM165,800h1v1h-1zM164,801h1v1h-1zM163,802h1v1h-1zM162,803h1v1h-1zM161,804h1v1h-1zM160,805h1v1h-1zM159,806h1v1h-1zM158,807h1v1h-1zM157,808h1v1h-1zM156,809h1v1h-1zM155,810h1v1h-1zM154,811h1v1h-1zM153,812h1v1h-1zM152,813h1v1h-1zM151,814h1v1h-1zM150,815h1v1h-1zM149,816h1v1h-1zM148,817h1v1h-1zM147,818h1v1h-1zM146,819h1v1h-1zM145,820h1v1h-1zM144,821h1v1h-1zM143,822h1v1h-1zM142,823h1v1h-1zM141,824h1v1h-1zM140,825h1v1h-1zM139,826h1v1h-1zM138,827h1v1h-1zM137,828h1v1h-1zM136,829h1v1h-1zM135,830h1v1h-1zM134,831h1v1h-1zM133,832h1v1h-1zM132,833h1v1h-1zM131,834h1v1h-1zM130,835h1v1h-1zM336,864h53v1h-53z" fill="#00FFFF"/><path d="M70,751h1v1h-1zM85,751h1v1h-1zM71,752h1v1h-1zM84,752h1v1h-1zM72,753h1v1h-1zM83,753h1v1h-1zM73,754h1v1h-1zM82,754h1v1h-1zM74,755h1v1h-1zM81,755h1v1h-1zM74,756h1v1h-1zM80,756h1v1h-1zM75,757h1v1h-1zM79,757h1v1h-1zM76,758h1v1h-1zM78,758h1v1h-1zM77,759h1v1h-1zM77,760h1v1h-1zM77,761h1v1h-1zM77,762h1v1h-1zM77,763h1v1h-1zM77,764h1v1h-1zM77,765h1v1h-1zM77,766h1v1h-1zM77,767h1v1h-1zM77,768h1v1h-1zM75,781h1v1h-1zM75,782h1v1h-1zM74,783h1v1h-1zM76,783h1v1h-1zM74,784h1v1h-1zM76,784h1v1h-1zM74,785h1v1h-1zM76,785h1v1h-1zM73,786h1v1h-1zM77,786h1v1h-1zM73,787h1v1h-1zM77,787h1v1h-1zM73,788h1v1h-1zM77,788h1v1h-1zM72,789h1v1h-1zM78,789h1v1h-1zM72,790h1v1h-1zM78,790h1v1h-1zM72,791h1v1h-1zM78,791h1v1h-1zM71,792h1v1h-1zM79,792h1v1h-1zM71,793h1v1h-1zM79,793h1v1h-1zM71,794h1v1h-1zM79,794h1v1h-1zM70,795h1v1h-1zM80,795h1v1h-1zM70,796h1v1h-1zM80,796h1v1h-1zM70,797h1v1h-1zM80,797h1v1h-1zM69,798h1v1h-1zM81,798h1v1h-1zM69,799h13v1h-13zM75,800h1v1h-1zM75,801h1v1h-1zM75,802h1v1h-1zM75,803h1v1h-1zM75,804h1v1h-1zM75,805h1v1h-1zM75,806h1v1h-1zM75,807h1v1h-1zM75,808h1v1h-1zM75,809h1v1h-1zM75,810h1v1h-1zM75,811h1v1h-1zM75,812h1v1h-1zM75,813h1v1h-1zM75,814h1v1h-1zM75,815h1v1h-1zM75,816h1v1h-1zM75,817h1v1h-1zM75,818h1v1h-1zM75,819h1v1h-1zM75,820h1v1h-1zM75,821h1v1h-1zM75,822h1v1h-1zM75,823h1v1h-1zM75,824h1v1h-1zM75,825h1v1h-1zM75,826h1v1h-1zM75,827h1v1h-1zM75,828h1v1h-1zM75,829h1v1h-1zM75,830h1v1h-1zM75,831h1v1h-1zM75,832h1v1h-1zM75,833h1v1h-1zM75,834h1v1h-1zM75,835h1v1h-1zM75,836h1v1h-1zM75,837h1v1h-1zM75,838h1v1h-1zM75,839h1v1h-1zM75,840h1v1h-1zM75,841h1v1h-1zM75,842h1v1h-1zM75,843h1v1h-1zM75,844h1v1h-1zM75,845h1v1h-1zM75,846h1v1h-1zM75,847h1v1h-1zM75,848h1v1h-1zM75,849h1v1h-1zM75,850h1v1h-1zM75,851h1v1h-1zM75,852h1v1h-1zM75,853h1v1h-1zM75,854h1v1h-1zM75,855h1v1h-1zM75,856h1v1h-1zM75,857h1v1h-1zM75,858h1v1h-1zM75,859h1v1h-1zM75,860h1v1h-1zM177,860h1v1h-1zM191,860h1v1h-1zM68,861h15v1h-15zM178,861h1v1h-1zM190,861h1v1h-1zM68,862h1v1h-1zM82,862h1v1h-1zM145,862h2v1h-2zM179,862h1v1h-1zM189,862h1v1h-1zM68,863h1v1h-1zM82,863h1v1h-1zM145,863h1v1h-1zM147,863h3v1h-3zM180,863h1v1h-1zM188,863h1v1h-1zM68,864h1v1h-1zM82,864h1v1h-1zM145,864h1v1h-1zM150,864h3v1h-3zM181,864h1v1h-1zM187,864h1v1h-1zM68,865h1v1h-1zM82,865h1v1h-1zM145,865h1v1h-1zM153,865h3v1h-3zM181,865h1v1h-1zM187,865h1v1h-1zM68,866h1v1h-1zM82,866h1v1h-1zM145,866h1v1h-1zM156,866h3v1h-3zM182,866h1v1h-1zM186,866h1v1h-1zM68,867h1v1h-1zM82,867h1v1h-1zM145,867h1v1h-1zM159,867h3v1h-3zM183,867h1v1h-1zM185,867h1v1h-1zM68,868h1v1h-1zM82,868h64v1h-64zM162,868h2v1h-2zM184,868h1v1h-1zM68,869h1v1h-1zM82,869h1v1h-1zM145,869h1v1h-1zM159,869h3v1h-3zM183,869h1v1h-1zM185,869h1v1h-1zM68,870h1v1h-1zM82,870h1v1h-1zM145,870h1v1h-1zM156,870h3v1h-3zM182,870h1v1h-1zM186,870h1v1h-1zM68,871h1v1h-1zM82,871h1v1h-1zM145,871h1v1h-1zM153,871h3v1h-3zM181,871h1v1h-1zM187,871h1v1h-1zM68,872h1v1h-1zM82,872h1v1h-1zM145,872h1v1h-1zM150,872h3v1h-3zM180,872h1v1h-1zM188,872h1v1h-1zM68,873h1v1h-1zM82,873h1v1h-1zM145,873h1v1h-1zM147,873h3v1h-3zM180,873h1v1h-1zM188,873h1v1h-1zM68,874h1v1h-1zM82,874h1v1h-1zM145,874h2v1h-2zM179,874h1v1h-1zM189,874h1v1h-1zM68,875h15v1h-15zM178,875h1v1h-1zM190,875h1v1h-1zM177,876h1v1h-1zM191,876h1v1h-1zM1248,879h12v1h-12zM1248,880h1v1h-1zM1259,880h1v1h-1zM1248,881h1v1h-1zM1259,881h1v1h-1zM1248,882h1v1h-1zM1259,882h1v1h-1zM1248,883h1v1h-1zM1259,883h1v1h-1zM1248,884h1v1h-1zM1259,884h1v1h-1zM1248,885h1v1h-1zM1259,885h1v1h-1zM1248,886h1v1h-1zM1259,886h1v1h-1zM1248,887h1v1h-1zM1259,887h1v1h-1zM1248,888h1v1h-1zM1259,888h1v1h-1zM1248,889h1v1h-1zM1259,889h1v1h-1zM1248,890h12v1h-12z" fill="#FFFFFF"/><path d="M75,784h1v1h-1zM75,785h1v1h-1zM75,786h1v1h-1zM74,787h1v1h-1zM76,787h1v1h-1zM74,788h1v1h-1zM76,788h1v1h-1zM74,789h1v1h-1zM76,789h1v1h-1zM74,790h1v1h-1zM76,790h1v1h-1zM73,791h1v1h-1zM77,791h1v1h-1zM73,792h1v1h-1zM77,792h1v1h-1zM73,793h1v1h-1zM77,793h1v1h-1zM73,794h1v1h-1zM77,794h1v1h-1zM72,795h1v1h-1zM78,795h1v1h-1zM72,796h1v1h-1zM78,796h1v1h-1zM72,797h1v1h-1zM78,797h1v1h-1zM147,865h3v1h-3zM150,866h4v1h-4zM154,867h4v1h-4zM158,868h3v1h-3zM154,869h4v1h-4zM150,870h4v1h-4zM147,871h3v1h-3z" fill="#808080"/><path d="M75,784h1v1h-1zM75,785h1v1h-1zM75,786h1v1h-1zM75,787h1v1h-1zM75,788h1v1h-1zM75,789h1v1h-1zM75,790h1v1h-1zM75,791h1v1h-1zM75,792h1v1h-1zM75,793h1v1h-1zM75,794h1v1h-1zM75,795h1v1h-1zM75,796h1v1h-1zM75,797h1v1h-1zM147,868h14v1h-14z" fill="#606060"/><path d="M522,248h6v1h-6zM522,249h6v1h-6zM521,250h8v1h-8zM521,251h8v1h-8zM521,252h8v1h-8zM522,253h6v1h-6zM522,254h6v1h-6z" fill="#00FFFF"/><path d="M522,276h6v1h-6zM522,277h6v1h-6zM521,278h8v1h-8zM521,279h8v1h-8zM521,280h8v1h-8zM522,281h6v1h-6zM522,282h6v1h-6z" fill="#00FFFF"/><path d="M807,248h6v1h-6zM807,249h6v1h-6zM806,250h8v1h-8zM806,251h8v1h-8zM806,252h8v1h-8zM807,253h6v1h-6zM807,254h6v1h-6z" fill="#00FFFF"/><path d="M807,276h6v1h-6zM807,277h6v1h-6zM806,278h8v1h-8zM806,279h8v1h-8zM806,280h8v1h-8zM807,281h6v1h-6zM807,282h6v1h-6z" fill="#00FFFF"/><path d="M277,590h6v1h-6zM277,591h6v1h-6zM276,592h8v1h-8zM276,593h8v1h-8zM276,594h8v1h-8zM277,595h6v1h-6zM277,596h6v1h-6z" fill="#00FFFF"/><path d="M278,619h4v1h-4zM277,620h6v1h-6zM276,621h8v1h-8zM276,622h8v1h-8zM276,623h8v1h-8zM276,624h8v1h-8zM277,625h6v1h-6zM278,626h4v1h-4z" fill="#00FFFF"/><path d="M182,686h4v1h-4zM181,687h6v1h-6zM180,688h8v1h-8zM180,689h8v1h-8zM180,690h8v1h-8zM180,691h8v1h-8zM181,692h6v1h-6zM182,693h4v1h-4z" fill="#00FFFF"/><path d="M181,715h6v1h-6zM181,716h6v1h-6zM180,717h8v1h-8zM180,718h8v1h-8zM180,719h8v1h-8zM181,720h6v1h-6zM181,721h6v1h-6z" fill="#00FFFF"/><path d="M1067,440h4v1h-4zM1066,441h6v1h-6zM1065,442h8v1h-8zM1065,443h8v1h-8zM1065,444h8v1h-8zM1065,445h8v1h-8zM1066,446h6v1h-6zM1067,447h4v1h-4z" fill="#00FFFF"/><path d="M1066,470h6v1h-6zM1066,471h6v1h-6zM1065,472h8v1h-8zM1065,473h8v1h-8zM1065,474h8v1h-8zM1066,475h6v1h-6zM1066,476h6v1h-6z" fill="#00FFFF"/><path d="M858,649h6v1h-6zM858,650h6v1h-6zM857,651h8v1h-8zM857,652h8v1h-8zM857,653h8v1h-8zM858,654h6v1h-6zM858,655h6v1h-6z" fill="#00FFFF"/><path d="M858,678h6v1h-6zM858,679h6v1h-6zM857,680h8v1h-8zM857,681h8v1h-8zM857,682h8v1h-8zM858,683h6v1h-6zM858,684h6v1h-6z" fill="#00FFFF"/><path d="M675,518h4v1h-4zM674,519h6v1h-6zM673,520h8v1h-8zM673,521h8v1h-8zM673,522h8v1h-8zM673,523h8v1h-8zM674,524h6v1h-6zM675,525h4v1h-4z" fill="#00FFFF"/><path d="M262,635h5v1h-5zM261,636h7v1h-7zM260,637h9v1h-9zM260,638h9v1h-9zM260,639h9v1h-9zM260,640h9v1h-9zM260,641h9v1h-9zM261,642h7v1h-7zM262,643h5v1h-5z" fill="#00FFFF"/><path d="M166,731h5v1h-5zM165,732h7v1h-7zM164,733h9v1h-9zM164,734h9v1h-9zM164,735h9v1h-9zM164,736h9v1h-9zM164,737h9v1h-9zM165,738h7v1h-7zM166,739h5v1h-5z" fill="#00FFFF"/><rect x="557" y="364" width="4" height="4" fill="#00FFFF"/><rect x="638" y="495" width="4" height="4" fill="#00FFFF"/></svg>
<div style="position:absolute;left:54px;top:890px;width:1206px;height:1px;background:#fff"></div>
<div style="position:absolute;left:1259px;top:160px;width:1px;height:731px;background:#fff"></div>
<div style="position:absolute;left:1262px;top:161px;width:16px;height:16px;box-sizing:border-box;border-radius:2px;background:linear-gradient(135deg,#DCE6FD 0%,#C4D5FB 50%,#B2C8F8 100%);border:1px solid #B5C8F2"></div><svg style="position:absolute;left:0;top:0;overflow:visible" width="1" height="1"><polyline points="1266.0,171.0 1270.0,167.0 1274.0,171.0" fill="none" stroke="#4D6185" stroke-width="2"/></svg>
<div style="position:absolute;left:1262px;top:516px;width:16px;height:17px;box-sizing:border-box;border-radius:2px;background:linear-gradient(135deg,#D8E3FC,#BCD0FA);border:1px solid #B5C8F2"></div><div style="position:absolute;left:1266px;top:521px;width:8px;height:1px;background:#8FAEF0"></div><div style="position:absolute;left:1266px;top:523px;width:8px;height:1px;background:#8FAEF0"></div><div style="position:absolute;left:1266px;top:525px;width:8px;height:1px;background:#8FAEF0"></div><div style="position:absolute;left:1266px;top:527px;width:8px;height:1px;background:#8FAEF0"></div>
<div style="position:absolute;left:1262px;top:875px;width:16px;height:16px;box-sizing:border-box;border-radius:2px;background:linear-gradient(135deg,#DCE6FD 0%,#C4D5FB 50%,#B2C8F8 100%);border:1px solid #B5C8F2"></div><svg style="position:absolute;left:0;top:0;overflow:visible" width="1" height="1"><polyline points="1266.0,881.0 1270.0,885.0 1274.0,881.0" fill="none" stroke="#4D6185" stroke-width="2"/></svg>
<div style="position:absolute;left:54px;top:892px;width:1207px;height:16px;background:#ECE9D8"></div>
<div style="position:absolute;left:54px;top:892px;width:18px;height:16px;box-sizing:border-box;background:#ECE9D8;border-right:1px solid #ACA899;border-bottom:1px solid #ACA899;border-left:1px solid #fff"></div>
<div style="position:absolute;left:72px;top:892px;width:18px;height:16px;box-sizing:border-box;background:#ECE9D8;border-right:1px solid #ACA899;border-bottom:1px solid #ACA899;border-left:1px solid #fff"></div>
<div style="position:absolute;left:90px;top:892px;width:18px;height:16px;box-sizing:border-box;background:#ECE9D8;border-right:1px solid #ACA899;border-bottom:1px solid #ACA899;border-left:1px solid #fff"></div>
<div style="position:absolute;left:108px;top:892px;width:18px;height:16px;box-sizing:border-box;background:#ECE9D8;border-right:1px solid #ACA899;border-bottom:1px solid #ACA899;border-left:1px solid #fff"></div>
<svg style="position:absolute;left:54px;top:892px" width="72" height="16"><rect x="5" y="4" width="1.6" height="8" fill="#000"/><polygon points="13,4 13,12 8,8" fill="#000"/><polygon points="29,4 29,12 24,8" fill="#000"/><polygon points="42,4 42,12 47,8" fill="#000"/><polygon points="59,4 59,12 64,8" fill="#000"/><rect x="65" y="4" width="1.6" height="8" fill="#000"/></svg>
<svg style="position:absolute;left:126px;top:891px" width="160" height="18"><polygon points="4,1 48,1 44,16 8,16" fill="#000"/><line x1="4.5" y1="1" x2="8.5" y2="16" stroke="#fff" stroke-width="0.8"/><polyline points="49,1 46.5,15.5 94.6,15.5 97.75,1" fill="none" stroke="#000"/><polyline points="99,1 97,15.5 144.6,15.5 147.75,1" fill="none" stroke="#000"/></svg>
<div style="position:absolute;left:137px;top:893px;white-space:nowrap;line-height:normal;font:11px 'Liberation Sans';color:#fff">Model</div>
<div style="position:absolute;left:178px;top:893px;white-space:nowrap;line-height:normal;font:11px 'Liberation Sans';color:#000">Layout1</div>
<div style="position:absolute;left:228px;top:893px;white-space:nowrap;line-height:normal;font:11px 'Liberation Sans';color:#000">Layout2</div>
<div style="position:absolute;left:854px;top:892px;width:407px;height:16px;background:linear-gradient(to bottom,#F3F1EC,#FEFEFB 60%,#EEEDE5)"></div>
<div style="position:absolute;left:855px;top:892px;width:17px;height:16px;box-sizing:border-box;border-radius:2px;background:linear-gradient(135deg,#DCE6FD 0%,#C4D5FB 50%,#B2C8F8 100%);border:1px solid #B5C8F2"></div><svg style="position:absolute;left:0;top:0;overflow:visible" width="1" height="1"><polyline points="865.5,896.0 861.5,900.0 865.5,904.0" fill="none" stroke="#4D6185" stroke-width="2"/></svg>
<div style="position:absolute;left:1049px;top:892px;width:17px;height:16px;box-sizing:border-box;border-radius:2px;background:linear-gradient(135deg,#D8E3FC,#BCD0FA);border:1px solid #B5C8F2"></div><div style="position:absolute;left:1054px;top:896px;width:1px;height:8px;background:#8FAEF0"></div><div style="position:absolute;left:1056px;top:896px;width:1px;height:8px;background:#8FAEF0"></div><div style="position:absolute;left:1058px;top:896px;width:1px;height:8px;background:#8FAEF0"></div><div style="position:absolute;left:1060px;top:896px;width:1px;height:8px;background:#8FAEF0"></div>
<div style="position:absolute;left:1243px;top:892px;width:17px;height:16px;box-sizing:border-box;border-radius:2px;background:linear-gradient(135deg,#DCE6FD 0%,#C4D5FB 50%,#B2C8F8 100%);border:1px solid #B5C8F2"></div><svg style="position:absolute;left:0;top:0;overflow:visible" width="1" height="1"><polyline points="1249.5,896.0 1253.5,900.0 1249.5,904.0" fill="none" stroke="#4D6185" stroke-width="2"/></svg>
<div style="position:absolute;left:0px;top:908px;width:1280px;height:7px;background:#ECE9D8"></div>
<div style="position:absolute;left:0px;top:911px;width:1280px;height:1px;background:#fff"></div>
<div style="position:absolute;left:0px;top:914px;width:1280px;height:1px;background:#716F64"></div>
<div style="position:absolute;left:0px;top:915px;width:1280px;height:1px;background:#000"></div>
<div style="position:absolute;left:0px;top:916px;width:1280px;height:58px;background:#ECE9D8"></div>
<div style="position:absolute;left:6px;top:924px;width:3px;height:41px;box-sizing:border-box;border-left:1px solid #fff;border-right:1px solid #ACA899;border-bottom:1px solid #ACA899"></div>
<div style="position:absolute;left:10px;top:924px;width:3px;height:41px;box-sizing:border-box;border-left:1px solid #fff;border-right:1px solid #ACA899;border-bottom:1px solid #ACA899"></div>
<div style="position:absolute;left:16px;top:920px;width:1257px;height:49px;box-sizing:border-box;background:#fff;border-top:1px solid #808080;border-left:1px solid #808080;border-right:1px solid #E8E6DC"></div>
<div style="position:absolute;left:17px;top:921px;width:1255px;height:1px;background:#000"></div>
<div style="position:absolute;left:17px;top:921px;width:1px;height:48px;background:#000"></div>
<div style="position:absolute;left:18px;top:952px;width:1255px;height:1px;background:#ACA899"></div>
<div style="position:absolute;left:18px;top:953px;width:1255px;height:1px;background:#fff"></div>
<div style="position:absolute;left:19px;top:922px;white-space:nowrap;line-height:normal;font:13px 'Liberation Mono';color:#000">Command:</div>
<div style="position:absolute;left:19px;top:935px;white-space:nowrap;line-height:normal;font:13px 'Liberation Mono';color:#000">Command: mcDEdit</div>
<div style="position:absolute;left:19px;top:955px;white-space:nowrap;line-height:normal;font:13px 'Liberation Mono';color:#000">Command:</div>
<div style="position:absolute;left:1256px;top:923px;width:15px;height:13px;box-sizing:border-box;border-radius:2px;background:linear-gradient(135deg,#DCE6FD 0%,#C4D5FB 50%,#B2C8F8 100%);border:1px solid #B5C8F2"></div><svg style="position:absolute;left:0;top:0;overflow:visible" width="1" height="1"><polyline points="1259.5,931.5 1263.5,927.5 1267.5,931.5" fill="none" stroke="#4D6185" stroke-width="2"/></svg>
<div style="position:absolute;left:1256px;top:938px;width:15px;height:13px;box-sizing:border-box;border-radius:2px;background:linear-gradient(135deg,#DCE6FD 0%,#C4D5FB 50%,#B2C8F8 100%);border:1px solid #B5C8F2"></div><svg style="position:absolute;left:0;top:0;overflow:visible" width="1" height="1"><polyline points="1259.5,942.5 1263.5,946.5 1267.5,942.5" fill="none" stroke="#4D6185" stroke-width="2"/></svg>
<div style="position:absolute;left:1186px;top:954px;width:67px;height:14px;background:linear-gradient(to bottom,#F3F1EC,#FEFEFB 60%,#EEEDE5)"></div>
<div style="position:absolute;left:1190px;top:955px;width:14px;height:12px;box-sizing:border-box;border-radius:2px;background:linear-gradient(135deg,#DCE6FD 0%,#C4D5FB 50%,#B2C8F8 100%);border:1px solid #B5C8F2"></div><svg style="position:absolute;left:0;top:0;overflow:visible" width="1" height="1"><polyline points="1199.0,957.0 1195.0,961.0 1199.0,965.0" fill="none" stroke="#4D6185" stroke-width="2"/></svg>
<div style="position:absolute;left:1206px;top:955px;width:15px;height:12px;box-sizing:border-box;border-radius:2px;background:linear-gradient(135deg,#D8E3FC,#BCD0FA);border:1px solid #B5C8F2"></div><div style="position:absolute;left:1210px;top:957px;width:1px;height:8px;background:#8FAEF0"></div><div style="position:absolute;left:1212px;top:957px;width:1px;height:8px;background:#8FAEF0"></div><div style="position:absolute;left:1214px;top:957px;width:1px;height:8px;background:#8FAEF0"></div><div style="position:absolute;left:1216px;top:957px;width:1px;height:8px;background:#8FAEF0"></div>
<div style="position:absolute;left:1238px;top:955px;width:14px;height:12px;box-sizing:border-box;border-radius:2px;background:linear-gradient(135deg,#DCE6FD 0%,#C4D5FB 50%,#B2C8F8 100%);border:1px solid #B5C8F2"></div><svg style="position:absolute;left:0;top:0;overflow:visible" width="1" height="1"><polyline points="1243.0,957.0 1247.0,961.0 1243.0,965.0" fill="none" stroke="#4D6185" stroke-width="2"/></svg>
<div style="position:absolute;left:0px;top:970px;width:1280px;height:1px;background:#fff"></div>
<div style="position:absolute;left:0px;top:971px;width:1280px;height:23px;background:#ECE9D8"></div>
<div style="position:absolute;left:5px;top:975px;width:238px;height:18px;box-sizing:border-box;border-top:1px solid #ACA899;border-left:1px solid #ACA899;border-right:1px solid #fff;border-bottom:1px solid #fff"></div>
<div style="position:absolute;left:8px;top:978px;white-space:nowrap;line-height:normal;font:11px 'Liberation Sans';color:#000">38585.9560, 26678.1481, 0.0000</div>
<div style="position:absolute;left:247px;top:975px;width:34px;height:18px;box-sizing:border-box;border-top:1px solid #fff;border-left:1px solid #fff;border-right:1px solid #ACA899;border-bottom:1px solid #ACA899;background:#ECE9D8"></div>
<div style="position:absolute;left:247px;top:977px;width:34px;text-align:center;font:11px 'Liberation Sans';color:#000;white-space:nowrap">ПРИВ</div>
<div style="position:absolute;left:285px;top:975px;width:38px;height:18px;box-sizing:border-box;border-top:1px solid #fff;border-left:1px solid #fff;border-right:1px solid #ACA899;border-bottom:1px solid #ACA899;background:#ECE9D8"></div>
<div style="position:absolute;left:285px;top:977px;width:38px;text-align:center;font:11px 'Liberation Sans';color:#000;white-space:nowrap">СЕТКА</div>
<div style="position:absolute;left:328px;top:975px;width:33px;height:18px;box-sizing:border-box;border-top:1px solid #fff;border-left:1px solid #fff;border-right:1px solid #ACA899;border-bottom:1px solid #ACA899;background:#ECE9D8"></div>
<div style="position:absolute;left:328px;top:977px;width:33px;text-align:center;font:11px 'Liberation Sans';color:#000;white-space:nowrap">ОРТО</div>
<div style="position:absolute;left:366px;top:975px;width:43px;height:18px;box-sizing:border-box;border-top:1px solid #fff;border-left:1px solid #fff;border-right:1px solid #ACA899;border-bottom:1px solid #ACA899;background:#ECE9D8"></div>
<div style="position:absolute;left:366px;top:977px;width:43px;text-align:center;font:11px 'Liberation Sans';color:#000;white-space:nowrap">ПОЛЯР</div>
<div style="position:absolute;left:413px;top:975px;width:45px;height:18px;box-sizing:border-box;border-top:1px solid #000;border-left:1px solid #000;border-right:1px solid #fff;border-bottom:1px solid #fff;background:#F0EEE4;box-shadow:inset 1px 1px 0 #D0CCBC"></div>
<div style="position:absolute;left:413px;top:978px;width:46px;text-align:center;font:11px 'Liberation Sans';color:#000;white-space:nowrap">О.ПРИВ</div>
<div style="position:absolute;left:462px;top:975px;width:46px;height:18px;box-sizing:border-box;border-top:1px solid #000;border-left:1px solid #000;border-right:1px solid #fff;border-bottom:1px solid #fff;background:#F0EEE4;box-shadow:inset 1px 1px 0 #D0CCBC"></div>
<div style="position:absolute;left:462px;top:978px;width:47px;text-align:center;font:11px 'Liberation Sans';color:#000;white-space:nowrap">О.СЛЕД</div>
<div style="position:absolute;left:512px;top:975px;width:26px;height:18px;box-sizing:border-box;border-top:1px solid #fff;border-left:1px solid #fff;border-right:1px solid #ACA899;border-bottom:1px solid #ACA899;background:#ECE9D8"></div>
<div style="position:absolute;left:512px;top:977px;width:26px;text-align:center;font:11px 'Liberation Sans';color:#000;white-space:nowrap">ШТР</div>
<div style="position:absolute;left:543px;top:975px;width:52px;height:18px;box-sizing:border-box;border-top:1px solid #000;border-left:1px solid #000;border-right:1px solid #fff;border-bottom:1px solid #fff;background:#F0EEE4;box-shadow:inset 1px 1px 0 #D0CCBC"></div>
<div style="position:absolute;left:543px;top:978px;width:53px;text-align:center;font:11px 'Liberation Sans';color:#000;white-space:nowrap">МОДЕЛЬ</div>
<div style="position:absolute;left:1241px;top:975px;width:23px;height:18px;box-sizing:border-box;background:#F8F7F2;border-top:1px solid #D8D5C8;border-left:1px solid #D8D5C8"></div>
<svg style="position:absolute;left:1243px;top:976px" width="22" height="18"><path d="M3,14 Q5,6 10,3 M6,10 Q9,4 14,2" stroke="#5B7BB5" stroke-width="2" fill="none"/><polygon points="12,6 20,16 4,16" fill="#F8D838" stroke="#B89000"/><rect x="11.3" y="9" width="1.6" height="4" fill="#000"/><rect x="11.3" y="14" width="1.6" height="1.5" fill="#000"/></svg>
<svg style="position:absolute;left:1266px;top:984px" width="10" height="6"><polygon points="0,0 8,0 4,5" fill="#000"/></svg>
<div style="position:absolute;left:0px;top:994px;width:1280px;height:30px;background:linear-gradient(to bottom,#3168D5 0px,#4993E6 1px,#2157D7 3px,#2663E0 6px,#245DDB 20px,#1941A5 29px)"></div>
<div style="position:absolute;left:0px;top:994px;width:96px;height:30px;border-radius:0 12px 12px 0;background:linear-gradient(to bottom,#3C9A3C 0%,#5DB85D 10%,#3FA03F 30%,#379137 80%,#2C7A2C 100%);box-shadow:inset -3px 0 4px rgba(0,40,0,0.5)"></div>
<svg style="position:absolute;left:10px;top:1000px" width="20" height="19"><path d="M2,4 Q5,1 9,3 L8,9 Q5,7 1,9 Z" fill="#F0542A"/><path d="M10,3 Q14,5 18,2 L17,8 Q13,10 9,9 Z" fill="#5EC23A"/><path d="M1,10 Q5,8 8,10 L7,16 Q4,14 0,16 Z" fill="#2F8CEF"/><path d="M9,10 Q13,11 17,9 L16,15 Q12,17 8,16 Z" fill="#FCCB18"/></svg>
<div style="position:absolute;left:34px;top:999px;white-space:nowrap;line-height:normal;font:italic bold 17px 'Liberation Sans';color:#fff;text-shadow:1px 1px 1px #1A4A1A">пуск</div>
<div style="position:absolute;left:106px;top:998px;width:159px;height:23px;box-sizing:border-box;border-radius:3px;background:#1E4FC0;box-shadow:inset 1px 1px 2px #0A2A80"></div>
<div style="position:absolute;left:116px;top:1002px;width:16px;height:16px;background:#fff"></div>
<div style="position:absolute;left:117px;top:1003px;width:14px;height:14px;background:linear-gradient(135deg,#3AA8D0,#0B7FA8)"></div>
<div style="position:absolute;left:119px;top:998px;white-space:nowrap;line-height:normal;font:bold 15px 'Liberation Sans';color:#F0F4F4">a</div>
<div style="position:absolute;left:136px;top:1003px;white-space:nowrap;line-height:normal;font:11px 'Liberation Sans';color:#fff">AutoCAD 2004 - [Dra...</div>
<div style="position:absolute;left:266px;top:998px;width:158px;height:23px;box-sizing:border-box;border-radius:3px;background:linear-gradient(to bottom,#4A8CF8,#3C7EF0 20%,#3777EE 80%,#2E66D8);box-shadow:inset -1px -1px 1px #1A48B8"></div>
<svg style="position:absolute;left:275px;top:1001px" width="16" height="17"><ellipse cx="8" cy="8.5" rx="6.5" ry="7.5" fill="#E01010"/><ellipse cx="8" cy="8.5" rx="2.8" ry="5.5" fill="#3C7EF0"/></svg>
<div style="position:absolute;left:294px;top:1003px;white-space:nowrap;line-height:normal;font:11px 'Liberation Sans';color:#fff">Отопление -&gt; Диал...</div>
<div style="position:absolute;left:426px;top:998px;width:158px;height:23px;box-sizing:border-box;border-radius:3px;background:linear-gradient(to bottom,#4A8CF8,#3C7EF0 20%,#3777EE 80%,#2E66D8);box-shadow:inset -1px -1px 1px #1A48B8"></div>
<svg style="position:absolute;left:435px;top:1002px" width="18" height="15"><path d="M1,3 L6,3 L8,5 L16,5 L16,14 L1,14 Z" fill="#E8B838"/><path d="M1,7 L17,7 L16,14 L1,14 Z" fill="#F8D868"/></svg>
<div style="position:absolute;left:455px;top:1003px;white-space:nowrap;line-height:normal;font:11px 'Liberation Sans';color:#fff">площадки</div>
<div style="position:absolute;left:1169px;top:994px;width:111px;height:30px;background:linear-gradient(to bottom,#1A9CF0 0px,#0C8EE8 2px,#0D93E8 10px,#0F96EA 20px,#1088D8 30px);border-left:1px solid #0A5AB8"></div>
<div style="position:absolute;left:1143px;top:1002px;width:13px;height:15px;background:#3A6CDC"></div>
<div style="position:absolute;left:1143px;top:1003px;white-space:nowrap;line-height:normal;font:11px 'Liberation Sans';color:#fff">EN</div>
<svg style="position:absolute;left:1159px;top:999px" width="22" height="22"><circle cx="10.5" cy="10.5" r="9" fill="#3A8AF0" stroke="#C8DCF8" stroke-width="1.5"/><polyline points="12.5,6 8,10.5 12.5,15" fill="none" stroke="#fff" stroke-width="2.5"/></svg>
<svg style="position:absolute;left:1180px;top:1000px" width="16" height="18"><rect x="6" y="1" width="9" height="9" fill="#4A5A80"/><rect x="1" y="5" width="9" height="9" fill="#9CD0F8" stroke="#5070A0"/><rect x="3" y="14" width="6" height="3" fill="#C0C8D8"/></svg>
<svg style="position:absolute;left:1197px;top:1001px" width="16" height="16"><rect x="0" y="0" width="15" height="15" fill="#fff"/><path d="M1,1 L5,1 L5,6 L10,1 L14,1 L8,7 L14,14 L10,14 L5,8 L5,14 L1,14 Z" fill="#E01018"/><path d="M8,9 L13,14" stroke="#000" stroke-width="2.5"/></svg>
<svg style="position:absolute;left:1215px;top:1000px" width="17" height="17"><rect x="5" y="3" width="11" height="10" fill="#D8D8D8" stroke="#707070"/><rect x="7" y="5" width="7" height="6" fill="#3A9A58"/><text x="0" y="12" font-family="Liberation Sans" font-weight="bold" font-size="12" fill="#1A3AA8">R</text><rect x="7" y="13" width="7" height="3" fill="#A0A0A0"/></svg>
<div style="position:absolute;left:1239px;top:1002px;white-space:nowrap;line-height:normal;font:11px 'Liberation Sans';color:#fff">15:32</div>
<svg width="0" height="0" style="position:absolute"><defs><linearGradient id="pg" x1="0" y1="0" x2="1" y2="1"><stop offset="0" stop-color="#FFFFFF"/><stop offset="1" stop-color="#A9C9D8"/></linearGradient><linearGradient id="yg" x1="0" y1="0" x2="1" y2="1"><stop offset="0" stop-color="#FFF0A0"/><stop offset="1" stop-color="#D8A020"/></linearGradient></defs></svg>
<svg style="position:absolute;left:16px;top:52px;overflow:visible" width="16" height="16" viewBox="0 0 16 16"><path d="M0.5,3.5 H13.5 L15.5,5.5 V15.5 H0.5 Z" fill="url(#pg)" stroke="#2A5AA5"/></svg>
<svg style="position:absolute;left:39px;top:52px;overflow:visible" width="16" height="16" viewBox="0 0 16 16"><path d="M1,5 L8,2 L9,3 L14,1 L15,12 L5,15 L2,13 Z" fill="#E8C050" stroke="#B89030" stroke-width="0.8"/><path d="M3,6 L12,2.5 L13,10 L5,13 Z" fill="#F4F8FC" stroke="#90A8C8" stroke-width="0.6"/><path d="M5,7 Q5,12 10,13" stroke="#1C3F7A" stroke-width="2" fill="none"/><polygon points="9,10 14,14 9,16" fill="#1C3F7A"/></svg>
<svg style="position:absolute;left:62px;top:52px;overflow:visible" width="16" height="16" viewBox="0 0 16 16"><rect x="0.5" y="1.5" width="14" height="14" rx="1" fill="#4A7CC8" stroke="#1C3F7A"/><rect x="3" y="2" width="9" height="7" fill="#EEF3FA"/><path d="M4.5,4.5 H10.5 M4.5,6.5 H10.5" stroke="#8AA0C8"/><rect x="3.5" y="11" width="8" height="4.5" fill="#E0E8F4"/><rect x="5.5" y="12" width="2" height="3" fill="#1C3F7A"/></svg>
<svg style="position:absolute;left:91px;top:52px;overflow:visible" width="16" height="16" viewBox="0 0 16 16"><path d="M4,1 L10,0.5 L11.5,6 L4.5,6.5 Z" fill="#F8F8FC" stroke="#6870A0" stroke-width="0.9"/><path d="M1,7 L13,6 L15,11 L4,15 L0.5,11 Z" fill="#C0C4E0" stroke="#505890" stroke-width="0.9"/><path d="M4,11.5 L12,10 L12.5,13 L5,15.5 Z" fill="#F4F4FA" stroke="#7078A8" stroke-width="0.6"/></svg>
<svg style="position:absolute;left:114px;top:52px;overflow:visible" width="16" height="16" viewBox="0 0 16 16"><path d="M0.5,0.5 H12.5 L15.5,3.5 V12.5 H0.5 Z" fill="url(#pg)" stroke="#2A5AA5"/><circle cx="11" cy="10" r="3.6" fill="#B8D0F0" stroke="#404860" stroke-width="1.3"/><path d="M8.5,12.5 L3,16" stroke="#C06020" stroke-width="2"/></svg>
<svg style="position:absolute;left:137px;top:52px;overflow:visible" width="16" height="16" viewBox="0 0 16 16"><path d="M1,9 L11,8 L13,12 L3,15 Z" fill="#C8CCE8" stroke="#6870A8"/><circle cx="11" cy="5" r="4.5" fill="#3890D8" stroke="#1860A0"/><path d="M8,4 Q11,2 14,5" stroke="#70D070" fill="none" stroke-width="1.5"/><rect x="2" y="1" width="7" height="7" fill="#F8D838" stroke="#C09010" transform="rotate(-15 5 5)"/></svg>
<svg style="position:absolute;left:166px;top:52px;overflow:visible" width="16" height="16" viewBox="0 0 16 16"><path d="M0,5 L9,9 M0,8 L9,7" stroke="#7A8090" stroke-width="1.2"/><path d="M0,5 L6,8" stroke="#fff" stroke-width="0.6"/><circle cx="12.5" cy="4" r="2.4" fill="none" stroke="#1C2E60" stroke-width="1.5"/><circle cx="12" cy="11" r="2.4" fill="none" stroke="#1C2E60" stroke-width="1.5"/><path d="M9,8 L11,6 M9,8 L10.5,9.5" stroke="#1C2E60" stroke-width="1.2"/></svg>
<svg style="position:absolute;left:189px;top:52px;overflow:visible" width="16" height="16" viewBox="0 0 16 16"><path d="M0.5,0.5 H9.5 L11.5,2.5 V11.5 H0.5 Z" fill="#E8F0F8" stroke="#2A5AA5"/><path d="M4.5,4.5 H13.5 L15.5,6.5 V15.5 H4.5 Z" fill="url(#pg)" stroke="#2A5AA5"/></svg>
<svg style="position:absolute;left:212px;top:52px;overflow:visible" width="16" height="16" viewBox="0 0 16 16"><path d="M1,4 L6,1 L14,5 L15,13 L9,16 L1,12 Z" fill="url(#yg)" stroke="#A07820"/><path d="M4,5 H11 L13,7 V14 H4 Z" fill="#E4EEF8" stroke="#2A5AA5"/><rect x="5" y="1" width="5" height="3" fill="#fff" stroke="#707070"/></svg>
<svg style="position:absolute;left:235px;top:52px;overflow:visible" width="16" height="16" viewBox="0 0 16 16"><path d="M15,1 L8,9" stroke="#D07028" stroke-width="2.4"/><path d="M8,8 L4,12 L1,15 L6,13 L9,10 Z" fill="#202020"/></svg>
<svg style="position:absolute;left:264px;top:52px;overflow:visible" width="16" height="16" viewBox="0 0 16 16"><path d="M14,15 Q14,4 6,5" stroke="#1C3F7A" stroke-width="2.8" fill="none"/><polygon points="0,6 8,0 8,11" fill="#1C3F7A"/></svg>
<svg style="position:absolute;left:299px;top:52px;overflow:visible" width="16" height="16" viewBox="0 0 16 16"><path d="M2,15 Q2,4 10,5" stroke="#B8BCC8" stroke-width="2.8" fill="none"/><polygon points="16,6 8,0 8,11" fill="#B8BCC8"/></svg>
<svg style="position:absolute;left:342px;top:52px;overflow:visible" width="16" height="16" viewBox="0 0 16 16"><path d="M1,4 Q2,2 4,4 L9,9 L11,11 L13,14 L10,16 L6,13 L1,7 Z" fill="#D89890" stroke="#A86860" stroke-width="0.8"/><path d="M2,6 L8,11 M3,4.5 L9,9.5 M5,3.5 L10,8" stroke="#B87870" stroke-width="0.8"/><path d="M8,12 L12,9 L16,12 L16,16 L11,16 Z" fill="#2A5A98"/><path d="M12,1 V8 M8.5,4.5 H15.5" stroke="#1C3F7A" stroke-width="1.4"/><polygon points="12,0 10,2.5 14,2.5" fill="#1C3F7A"/><polygon points="12,9 10,6.5 14,6.5" fill="#1C3F7A"/><polygon points="8,4.5 10.5,2.5 10.5,6.5" fill="#1C3F7A"/><polygon points="16,4.5 13.5,2.5 13.5,6.5" fill="#1C3F7A"/></svg>
<svg style="position:absolute;left:365px;top:52px;overflow:visible" width="16" height="16" viewBox="0 0 16 16"><circle cx="6" cy="6.5" r="4.8" fill="#DCEAF6" stroke="#50585F" stroke-width="1.2"/><path d="M3.5,4.5 Q5,3 7,3.5" stroke="#fff" fill="none"/><path d="M9.5,10 L13,14.5" stroke="#C87830" stroke-width="2.2"/><path d="M13,1 V6 M10.5,3.5 H15.5 M10.5,7.5 H15.5" stroke="#1C3F7A" stroke-width="1.3"/></svg>
<svg style="position:absolute;left:388px;top:52px;overflow:visible" width="16" height="16" viewBox="0 0 16 16"><circle cx="6" cy="6.5" r="4.8" fill="#DCEAF6" stroke="#50585F" stroke-width="1.2"/><rect x="3.5" y="4" width="5" height="5" fill="none" stroke="#2A5A98" stroke-width="1.3"/><path d="M9.5,10 L13,14" stroke="#C87830" stroke-width="2.2"/><polygon points="16,12 16,16 12,16" fill="#000"/></svg>
<svg style="position:absolute;left:411px;top:52px;overflow:visible" width="16" height="16" viewBox="0 0 16 16"><circle cx="6" cy="6.5" r="4.8" fill="#DCEAF6" stroke="#50585F" stroke-width="1.2"/><path d="M5,8 L9,4 Q11,1 14,3" stroke="#1C4A90" stroke-width="2" fill="none"/><polygon points="3,9 4,4.5 8,8.5" fill="#1C4A90"/><path d="M9.5,10 L13,14.5" stroke="#C87830" stroke-width="2.2"/></svg>
<svg style="position:absolute;left:440px;top:52px;overflow:visible" width="16" height="16" viewBox="0 0 16 16"><rect x="1" y="0" width="14" height="4" fill="#E84080"/><rect x="1" y="0" width="3" height="4" fill="#F0D020"/><rect x="7" y="0" width="4" height="4" fill="#40C0F0"/><rect x="11" y="0" width="4" height="4" fill="#9040E0"/><path d="M4,7 L12,5 L14,9 L6,11 Z" fill="#C88880"/><path d="M1,10 L5,10 M1,13 L5,13" stroke="#3A6CC0" stroke-width="1.5"/><text x="8" y="16" font-family="Liberation Sans" font-size="8" fill="#202020">A</text></svg>
<svg style="position:absolute;left:463px;top:52px;overflow:visible" width="16" height="16" viewBox="0 0 16 16"><rect x="1.5" y="0.5" width="13" height="15" fill="#fff" stroke="#1C3F7A"/><g fill="#2A5AA5"><rect x="4" y="2" width="3" height="3"/><rect x="9" y="2" width="3" height="3"/><rect x="4" y="7" width="3" height="3"/><rect x="9" y="7" width="3" height="3"/><rect x="4" y="12" width="3" height="2"/><rect x="9" y="12" width="3" height="2"/></g><rect x="2" y="3" width="1" height="10" fill="#EFC94A"/></svg>
<svg style="position:absolute;left:486px;top:52px;overflow:visible" width="16" height="16" viewBox="0 0 16 16"><rect x="0.5" y="0.5" width="9" height="15" fill="#fff" stroke="#1C3F7A"/><g fill="#2A5AA5"><rect x="2" y="2" width="2" height="2"/><rect x="5" y="2" width="2" height="2"/><rect x="2" y="6" width="2" height="2"/><rect x="2" y="10" width="2" height="2"/></g><path d="M8,3 Q13,3 13,9" stroke="#1C3F7A" stroke-width="1.5" fill="none"/><polygon points="10,8 16,8 13,12" fill="#1C3F7A"/><rect x="11" y="12" width="4" height="4" fill="#EFC94A"/></svg>
<svg style="position:absolute;left:515px;top:52px;overflow:visible" width="16" height="16" viewBox="0 0 16 16"><rect x="0.5" y="0.5" width="15" height="15" rx="3" fill="#1A4E98" stroke="#0C3070"/><path d="M5,6 Q5,3 8,3 Q11,3 11,6 Q11,8 8.5,9 V10.5" stroke="#fff" stroke-width="2.2" fill="none"/><rect x="7.2" y="12" width="2.6" height="2.5" fill="#fff"/></svg>
<svg style="position:absolute;left:287px;top:59px;overflow:visible" width="6" height="4" viewBox="0 0 6 4"><polygon points="0,0 6,0 3,3" fill="#1C3F7A"/></svg>
<svg style="position:absolute;left:325px;top:59px;overflow:visible" width="6" height="4" viewBox="0 0 6 4"><polygon points="0,0 6,0 3,3" fill="#B8BCC8"/></svg>
<div style="position:absolute;left:84px;top:51px;width:1px;height:19px;background:#C5C2B2"></div>
<div style="position:absolute;left:159px;top:51px;width:1px;height:19px;background:#C5C2B2"></div>
<div style="position:absolute;left:257px;top:51px;width:1px;height:19px;background:#C5C2B2"></div>
<div style="position:absolute;left:335px;top:51px;width:1px;height:19px;background:#C5C2B2"></div>
<div style="position:absolute;left:433px;top:51px;width:1px;height:19px;background:#C5C2B2"></div>
<div style="position:absolute;left:508px;top:51px;width:1px;height:19px;background:#C5C2B2"></div>
<svg style="position:absolute;left:17px;top:80px;overflow:visible" width="16" height="16" viewBox="0 0 16 16"><path d="M1,14 L6,1 H7.5 L12,12" stroke="#000" stroke-width="2" fill="none"/><path d="M3,9.5 H10" stroke="#000" stroke-width="1.6"/><path d="M15.5,5.5 L9,12" stroke="#C87838" stroke-width="2.6"/><path d="M9,11 L6,14 L4,16 L8,15 L10,13 Z" fill="#202020"/></svg>
<svg style="position:absolute;left:145px;top:80px;overflow:visible" width="16" height="16" viewBox="0 0 16 16"><path d="M16,1 L9,9" stroke="#C07030" stroke-width="2.4"/><path d="M9,8 L4,12 L9,11 Z" fill="#202020"/><path d="M0,15 H15 M1,12 V16 M15,12 V16" stroke="#000" stroke-width="1.5"/><polygon points="1,15 4,13 4,17" fill="#000"/><polygon points="15,15 12,13 12,17" fill="#000"/></svg>
<div style="position:absolute;left:138px;top:79px;width:1px;height:20px;background:#C5C2B2"></div>
<svg style="position:absolute;left:286px;top:81px;overflow:visible" width="16" height="16" viewBox="0 0 16 16"><path d="M1,11 L8,8 L15,11 L8,14 Z" fill="#B8C8D8" stroke="#506080"/><path d="M1,8 L8,5 L15,8 L8,11 Z" fill="#C8D8E8" stroke="#506080"/><path d="M1,5 L8,2 L15,5 L8,8 Z" fill="#D8E8F0" stroke="#506080"/></svg>
<svg style="position:absolute;left:312px;top:81px;overflow:visible" width="10" height="13" viewBox="0 0 10 13"><circle cx="5" cy="5" r="4.2" fill="#FFF8A0" stroke="#A09020"/><rect x="3" y="9" width="4" height="4" fill="#8090A8"/></svg>
<svg style="position:absolute;left:327px;top:81px;overflow:visible" width="14" height="14" viewBox="0 0 14 14"><circle cx="7" cy="7" r="6.5" fill="#F0D840" stroke="#2A5AA5"/></svg>
<svg style="position:absolute;left:343px;top:81px;overflow:visible" width="14" height="14" viewBox="0 0 14 14"><circle cx="6" cy="6" r="5" fill="#B8D0F0" stroke="#7890C0" stroke-dasharray="2 1"/><rect x="7.5" y="7.5" width="6" height="6" fill="#fff" stroke="#5070A0"/></svg>
<svg style="position:absolute;left:361px;top:81px;overflow:visible" width="14" height="15" viewBox="0 0 14 15"><path d="M2,8 V4 Q2,0 6,0 Q10,0 10,4 V6" stroke="#B89810" stroke-width="1.8" fill="none"/><rect x="5" y="6" width="9" height="9" rx="2" fill="#F0D860" stroke="#B89810"/></svg>
<div style="position:absolute;left:377px;top:83px;width:11px;height:11px;box-sizing:border-box;border:1px solid #000;background:#fff"></div>
<svg style="position:absolute;left:610px;top:81px;overflow:visible" width="16" height="16" viewBox="0 0 16 16"><path d="M1,11 L8,8 L15,11 L8,14 Z" fill="#E8C040" stroke="#806010"/><path d="M1,8 L8,5 L15,8 L8,11 Z" fill="#C8D8E8" stroke="#506080"/><path d="M1,5 L8,2 L15,5 L8,8 Z" fill="#D8E8F0" stroke="#506080"/><path d="M5,13 L1,16" stroke="#1C3F7A" stroke-width="1.5"/></svg>
<svg style="position:absolute;left:632px;top:81px;overflow:visible" width="16" height="16" viewBox="0 0 16 16"><path d="M1,11 L8,8 L15,11 L8,14 Z" fill="#C0CCD8" stroke="#506080"/><path d="M1,8 L8,5 L15,8 L8,11 Z" fill="#C8D8E8" stroke="#506080"/><path d="M1,5 L8,2 L15,5 L8,8 Z" fill="#D8E8F0" stroke="#506080"/><path d="M13,7 Q13,1 8,2" stroke="#1C3F7A" stroke-width="2" fill="none"/><polygon points="5,2 9,0 9,5" fill="#1C3F7A"/></svg>
<svg style="position:absolute;left:4px;top:171px;overflow:visible" width="16" height="16" viewBox="0 0 16 16"><path d="M3,14 L13,3" stroke="#1C3F7A" stroke-width="1.2"/><rect x="1" y="12" width="4" height="4" fill="#2B62D6"/><rect x="11" y="1" width="4" height="4" fill="#2B62D6"/></svg>
<svg style="position:absolute;left:4px;top:193px;overflow:visible" width="16" height="16" viewBox="0 0 16 16"><path d="M1,15 L15,1" stroke="#000" stroke-width="1.3"/><polygon points="0,16 2,10 6,14" fill="#000"/><polygon points="16,0 14,6 10,2" fill="#000"/><rect x="6" y="6" width="4" height="4" fill="#2B62D6"/></svg>
<svg style="position:absolute;left:4px;top:215px;overflow:visible" width="16" height="16" viewBox="0 0 16 16"><path d="M2,12 H10 Q15,12 15,8 Q15,4 10,5" stroke="#1C3F7A" stroke-width="1.3" fill="none"/><rect x="0" y="10" width="4" height="4" fill="#2B62D6"/><rect x="8" y="10" width="4" height="4" fill="#2B62D6"/><rect x="8" y="3" width="4" height="4" fill="#2B62D6"/></svg>
<svg style="position:absolute;left:4px;top:237px;overflow:visible" width="16" height="16" viewBox="0 0 16 16"><path d="M8,1 L15,6 L12.5,14.5 L3.5,14.5 L1,6 Z" fill="#DDE6F0" stroke="#203050" stroke-width="1.3"/></svg>
<svg style="position:absolute;left:4px;top:259px;overflow:visible" width="16" height="16" viewBox="0 0 16 16"><rect x="2" y="5" width="12" height="7" fill="#DDE6F0" stroke="#203050" stroke-width="1.3"/><rect x="0" y="10" width="4" height="4" fill="#2B62D6"/><rect x="12" y="3" width="4" height="4" fill="#2B62D6"/></svg>
<svg style="position:absolute;left:4px;top:281px;overflow:visible" width="16" height="16" viewBox="0 0 16 16"><path d="M2,14 Q3,5 13,3" stroke="#1C3F7A" stroke-width="1.3" fill="none"/><rect x="0" y="12" width="4" height="4" fill="#2B62D6"/><rect x="4" y="5" width="3.5" height="3.5" fill="#2B62D6"/><rect x="12" y="1" width="4" height="4" fill="#2B62D6"/></svg>
<svg style="position:absolute;left:4px;top:303px;overflow:visible" width="16" height="16" viewBox="0 0 16 16"><circle cx="8" cy="8" r="7" fill="#DDE6F0" stroke="#203050" stroke-width="1.4"/><path d="M8,8 L12,4" stroke="#1C3F7A" stroke-width="1.3"/><rect x="6" y="6" width="4" height="4" fill="#2B62D6"/></svg>
<svg style="position:absolute;left:4px;top:325px;overflow:visible" width="16" height="16" viewBox="0 0 16 16"><path d="M4,2 Q8,-1 10,3 Q15,3 14,8 Q16,12 12,14 Q9,17 6,14 Q1,15 2,10 Q-1,6 4,2 Z" fill="#DDE6F0" stroke="#203050" stroke-width="1.3"/></svg>
<svg style="position:absolute;left:4px;top:347px;overflow:visible" width="16" height="16" viewBox="0 0 16 16"><path d="M1,13 Q4,2 8,8 Q12,14 15,3" stroke="#203050" stroke-width="1.3" fill="none"/></svg>
<svg style="position:absolute;left:4px;top:369px;overflow:visible" width="16" height="16" viewBox="0 0 16 16"><ellipse cx="8" cy="8.5" rx="7" ry="5" fill="#DDE6F0" stroke="#203050" stroke-width="1.4"/><rect x="0" y="7" width="3" height="3" fill="#2B62D6"/><rect x="13" y="7" width="3" height="3" fill="#2B62D6"/></svg>
<svg style="position:absolute;left:4px;top:391px;overflow:visible" width="16" height="16" viewBox="0 0 16 16"><path d="M3,11 Q0,6 7,5 Q15,5 14,10 Q13,13 9,13" stroke="#203050" stroke-width="1.5" fill="none"/><rect x="1" y="9" width="3.5" height="3.5" fill="#2B62D6"/><rect x="8" y="11" width="3.5" height="3.5" fill="#2B62D6"/></svg>
<svg style="position:absolute;left:4px;top:413px;overflow:visible" width="16" height="16" viewBox="0 0 16 16"><rect x="2" y="0.5" width="12" height="12" fill="#F0E890" stroke="#606060"/><rect x="5" y="3" width="8" height="8" fill="#C8D8F0" stroke="#506080"/><circle cx="10" cy="11" r="3.5" fill="#E8D870" stroke="#404040"/><rect x="0" y="7" width="4" height="4" fill="#2B62D6"/><polygon points="16,12 16,16 12,16" fill="#000"/></svg>
<svg style="position:absolute;left:4px;top:435px;overflow:visible" width="16" height="16" viewBox="0 0 16 16"><rect x="3" y="1.5" width="9" height="8" fill="#F0E890" stroke="#606060"/><circle cx="10" cy="11" r="3.8" fill="#E8D870" stroke="#2A5AA5"/><rect x="1" y="8" width="4" height="4" fill="#2B62D6"/></svg>
<svg style="position:absolute;left:4px;top:457px;overflow:visible" width="16" height="16" viewBox="0 0 16 16"><rect x="6" y="6" width="4" height="4" fill="#2B62D6"/></svg>
<svg style="position:absolute;left:4px;top:479px;overflow:visible" width="16" height="16" viewBox="0 0 16 16"><rect x="3" y="3" width="10" height="10" fill="#B0C8E0"/><path d="M3,7 L7,3 M3,11 L11,3 M5,13 L13,5 M9,13 L13,9" stroke="#fff" stroke-width="1.3"/><path d="M0,3 H16 M0,13 H16 M3,0 V16 M13,0 V16" stroke="#2A5AA5" stroke-width="1.5"/></svg>
<svg style="position:absolute;left:4px;top:501px;overflow:visible" width="16" height="16" viewBox="0 0 16 16"><path d="M0.5,2.5 H9 L15.5,8 V14.5 H0.5 Z" fill="#DDE6F0" stroke="#1C3F7A" stroke-width="1.3"/><circle cx="7" cy="8" r="3" fill="none" stroke="#405070" stroke-width="1.3"/></svg>
<svg style="position:absolute;left:4px;top:523px;overflow:visible" width="16" height="16" viewBox="0 0 16 16"><text x="8" y="15" text-anchor="middle" font-family="Liberation Sans" font-size="19" fill="#000">A</text></svg>
<svg style="position:absolute;left:30px;top:171px;overflow:visible" width="16" height="16" viewBox="0 0 16 16"><path d="M5,13 L14,3" stroke="#E8C030" stroke-width="5"/><path d="M4,14 L7,10" stroke="#D06060" stroke-width="5"/><path d="M1,15.5 H15" stroke="#303030"/></svg>
<svg style="position:absolute;left:30px;top:193px;overflow:visible" width="16" height="16" viewBox="0 0 16 16"><circle cx="4" cy="4" r="3" fill="#C8D0E0" stroke="#405070"/><circle cx="10" cy="11" r="3.5" fill="#C8D0E0" stroke="#405070"/><path d="M7,2 Q12,1 12,6" stroke="#1C3F7A" stroke-width="1.5" fill="none"/><polygon points="10,5 15,5 12,9" fill="#1C3F7A"/></svg>
<svg style="position:absolute;left:30px;top:215px;overflow:visible" width="16" height="16" viewBox="0 0 16 16"><polygon points="7,2 7,14 1,14" fill="#DDE6F0" stroke="#203050"/><polygon points="9,2 9,14 15,14" fill="#DDE6F0" stroke="#203050"/><path d="M8,0 V16" stroke="#2B62D6" stroke-width="1.2"/></svg>
<svg style="position:absolute;left:30px;top:237px;overflow:visible" width="16" height="16" viewBox="0 0 16 16"><path d="M1.5,14.5 V9.5 H5.5 V5 Q5.5,1.5 9,1.5 Q12.5,1.5 12.5,5 V9.5 H15 V14.5 Z" fill="none" stroke="#203050" stroke-width="1.1"/><path d="M3.5,12.5 V11.5 H7.5 V5 Q7.5,3.5 9,3.5 Q10.5,3.5 10.5,5 V11.5 H13 V12.5 Z" fill="none" stroke="#2A70D0" stroke-width="1.1"/></svg>
<svg style="position:absolute;left:30px;top:259px;overflow:visible" width="16" height="16" viewBox="0 0 16 16"><g fill="#DDE6F0" stroke="#000" stroke-width="1.2"><rect x="1" y="1" width="6" height="6"/><rect x="9" y="1" width="6" height="6"/><rect x="1" y="9" width="6" height="6"/><rect x="9" y="9" width="6" height="6"/></g></svg>
<svg style="position:absolute;left:30px;top:281px;overflow:visible" width="16" height="16" viewBox="0 0 16 16"><path d="M8,1 V15 M1,8 H15" stroke="#2A5AA5" stroke-width="2"/><g fill="#2A5AA5"><polygon points="8,0 4,4 12,4"/><polygon points="8,16 4,12 12,12"/><polygon points="0,8 4,4 4,12"/><polygon points="16,8 12,4 12,12"/></g></svg>
<svg style="position:absolute;left:30px;top:303px;overflow:visible" width="16" height="16" viewBox="0 0 16 16"><path d="M4,4 Q1,8 3,12 Q8,17 13,12 Q15,8 12,4" stroke="#2A5AA5" stroke-width="2.2" fill="none"/><polygon points="1,1 7,2 4,7" fill="#2A5AA5"/></svg>
<svg style="position:absolute;left:30px;top:325px;overflow:visible" width="16" height="16" viewBox="0 0 16 16"><rect x="1.5" y="1.5" width="13" height="13" fill="#DDE6F0" stroke="#1C3F7A" stroke-width="1.3"/><rect x="1.5" y="8" width="6.5" height="6.5" fill="none" stroke="#000" stroke-dasharray="1 1"/></svg>
<svg style="position:absolute;left:30px;top:347px;overflow:visible" width="16" height="16" viewBox="0 0 16 16"><path d="M1,1 V15 H15 L8,1 Z" fill="#DDE6F0" stroke="#000" stroke-width="1.2"/><path d="M4,1 H8" stroke="#000" stroke-dasharray="1 1"/><path d="M6,1 L13,15" stroke="#1C3F7A"/></svg>
<svg style="position:absolute;left:30px;top:369px;overflow:visible" width="16" height="16" viewBox="0 0 16 16"><path d="M0,8.5 H5 M10,8.5 H15" stroke="#000" stroke-width="1.2"/><path d="M10,8.5 H16" stroke="#000" stroke-dasharray="2 1.5" stroke-width="1.2"/><path d="M4,14 L10,3" stroke="#2B62D6" stroke-width="1.4"/><path d="M0,8.5 H6" stroke="#000" stroke-width="1.2"/></svg>
<svg style="position:absolute;left:30px;top:391px;overflow:visible" width="16" height="16" viewBox="0 0 16 16"><path d="M0,8.5 H2 M4,8.5 H6 M7,8.5 H9" stroke="#000" stroke-width="1.2"/><path d="M8,14 L14,3" stroke="#2B62D6" stroke-width="1.4"/></svg>
<svg style="position:absolute;left:30px;top:413px;overflow:visible" width="16" height="16" viewBox="0 0 16 16"><rect x="1.5" y="3.5" width="13" height="11" fill="#DDE6F0" stroke="#000" stroke-width="1.4"/><rect x="8" y="1.5" width="3.5" height="3.5" fill="#2B62D6"/></svg>
<svg style="position:absolute;left:30px;top:435px;overflow:visible" width="16" height="16" viewBox="0 0 16 16"><rect x="1.5" y="3.5" width="13" height="11" fill="#DDE6F0" stroke="#000" stroke-width="1.4"/><rect x="2.5" y="1.5" width="3.5" height="3.5" fill="#2B62D6"/><rect x="10" y="1.5" width="3.5" height="3.5" fill="#2B62D6"/></svg>
<svg style="position:absolute;left:30px;top:457px;overflow:visible" width="16" height="16" viewBox="0 0 16 16"><path d="M2,16 V6 M2,2 H15" stroke="#000" stroke-width="1.5"/><path d="M2,2 V6" stroke="#000" stroke-dasharray="1 1"/><path d="M2,7 L8,2" stroke="#2B62D6" stroke-width="1.5"/></svg>
<svg style="position:absolute;left:30px;top:479px;overflow:visible" width="16" height="16" viewBox="0 0 16 16"><path d="M2,16 V10 M10,2 H15" stroke="#000" stroke-width="1.5"/><path d="M2,10 Q2,2 10,2" stroke="#2B62D6" stroke-width="1.6" fill="none"/><path d="M2,2 V7 M2,2 H6" stroke="#000" stroke-dasharray="1 1"/></svg>
<svg style="position:absolute;left:30px;top:501px;overflow:visible" width="16" height="16" viewBox="0 0 16 16"><path d="M3,13 L12,4" stroke="#D02020" stroke-width="4"/><path d="M1,6 L4,9 M6,10 L2,14 M5,4 L7,8" stroke="#F0C020" stroke-width="2"/><path d="M11,1 L15,5 M12,5 L16,1" stroke="#A8C8F0"/></svg>
<svg style="position:absolute;left:16px;top:108px;overflow:visible" width="16" height="16" viewBox="0 0 16 16"><path d="M0.5,1.5 H14.5 V14.5 H0.5 Z" fill="url(#pg)" stroke="#2A5AA5"/><path d="M1,4 H6" stroke="#2A5AA5"/><path d="M8,14 V10 H14" stroke="#2A5AA5" fill="none"/><polygon points="16,12 16,16 12,16" fill="#000"/></svg>
<svg style="position:absolute;left:39px;top:108px;overflow:visible" width="16" height="16" viewBox="0 0 16 16"><path d="M7,0 V12 M11,0 V10 M5,3 H14 M5,7 H14" stroke="#000" stroke-width="1.6"/><circle cx="3" cy="8" r="2.3" fill="#fff" stroke="#5A78B0" stroke-width="1.2"/><circle cx="7" cy="13" r="2.3" fill="#fff" stroke="#5A78B0" stroke-width="1.2"/><polygon points="16,12 16,16 12,16" fill="#000"/></svg>
<svg style="position:absolute;left:62px;top:108px;overflow:visible" width="16" height="16" viewBox="0 0 16 16"><path d="M0.5,0 V7 M15.5,0 V7 M1,3.5 H15" stroke="#2A5AA5" stroke-width="1.5"/><polygon points="1,3.5 5,1 5,6" fill="#2A5AA5"/><polygon points="15,3.5 11,1 11,6" fill="#2A5AA5"/><path d="M8,5 V15 L10,13 L12,16 L13,15 L11,12 H14 Z" fill="#fff" stroke="#000"/><polygon points="16,12 16,16 12,16" fill="#000"/></svg>
<svg style="position:absolute;left:85px;top:108px;overflow:visible" width="16" height="16" viewBox="0 0 16 16"><path d="M6,14 V3 H14" stroke="#2A5AA5" stroke-width="1.5" fill="none"/><path d="M0,14.5 H13" stroke="#2A5AA5" stroke-width="1.5"/><path d="M2,8 L6,13 L10,8" stroke="#8AA0C8" fill="none"/><polygon points="16,12 16,16 12,16" fill="#000"/></svg>
<svg style="position:absolute;left:108px;top:108px;overflow:visible" width="16" height="16" viewBox="0 0 16 16"><path d="M2,10 H15" stroke="#2A5AA5" stroke-width="1.8"/><polygon points="0,10 6,6 6,14" fill="#2A5AA5"/><path d="M7,8 L13,3 M7,7.5 H15" stroke="#2A5AA5" stroke-width="1.2"/><path d="M7,12 H15" stroke="#8AA0C8" stroke-width="1.5"/><polygon points="16,12 16,16 12,16" fill="#000"/></svg>
<svg style="position:absolute;left:131px;top:108px;overflow:visible" width="16" height="16" viewBox="0 0 16 16"><path d="M2,14 L7,8 H14" stroke="#2A5AA5" stroke-width="1.5" fill="none"/><polygon points="0,16 2,10 5,13" fill="#2A5AA5"/><text x="8" y="7" font-family="Liberation Sans" font-size="8" fill="#C0303A">A</text><polygon points="16,12 16,16 12,16" fill="#000"/></svg>
<svg style="position:absolute;left:154px;top:108px;overflow:visible" width="16" height="16" viewBox="0 0 16 16"><path d="M1,15 L13,3" stroke="#2A5AA5" stroke-width="1.5"/><path d="M8,3 L13,8 M10,1 V7 M7,5 H14" stroke="#2A5AA5" stroke-width="1.2"/><rect x="0" y="13" width="3" height="3" fill="#F00"/><polygon points="16,12 16,16 12,16" fill="#000"/></svg>
<svg style="position:absolute;left:177px;top:108px;overflow:visible" width="16" height="16" viewBox="0 0 16 16"><text x="1" y="8" font-family="Liberation Sans" font-size="9" fill="#C0303A">A</text><path d="M1,11.5 H13" stroke="#2A5AA5" stroke-width="1.6"/><polygon points="15,11.5 10,8 10,15" fill="#2A5AA5"/><polygon points="16,12 16,16 12,16" fill="#000"/></svg>
<svg style="position:absolute;left:200px;top:108px;overflow:visible" width="16" height="16" viewBox="0 0 16 16"><rect x="0" y="0" width="15" height="15" fill="#404040"/><path d="M0,4 L4,0 M0,9 L9,0 M0,14 L14,0 M4,15 L15,4 M9,15 L15,9" stroke="#ECE9D8"/><rect x="3" y="3" width="9" height="9" fill="#C8DCF0" stroke="#1C3F7A"/><polygon points="16,12 16,16 12,16" fill="#000"/></svg>
<svg style="position:absolute;left:223px;top:108px;overflow:visible" width="16" height="16" viewBox="0 0 16 16"><path d="M3.5,3.5 H14.5 V14.5 H3.5 Z" fill="#fff" stroke="#2A5AA5"/><path d="M0.5,6.5 H10.5 V15.5 H0.5 Z" fill="#E8F0F8" stroke="#2A5AA5"/><path d="M3,10 L6,13 M6,10 L3,13" stroke="#C0303A"/><path d="M7,5 H12 V12" stroke="#2A5AA5" fill="none"/><polygon points="16,12 16,16 12,16" fill="#000"/></svg>
<svg style="position:absolute;left:246px;top:108px;overflow:visible" width="16" height="16" viewBox="0 0 16 16"><path d="M1.5,0 V12 M14.5,0 V12" stroke="#000" stroke-width="1.3"/><path d="M2,5 H12" stroke="#000"/><polygon points="14,5 9,3 9,7" fill="#000"/><circle cx="2" cy="14" r="2" fill="#fff" stroke="#2A5AA5"/><circle cx="14" cy="14" r="2" fill="#fff" stroke="#2A5AA5"/><polygon points="16,12 16,16 12,16" fill="#000"/></svg>
<svg style="position:absolute;left:269px;top:108px;overflow:visible" width="16" height="16" viewBox="0 0 16 16"><path d="M1,1.5 H6 M10,1.5 H15 M1,14.5 H6 M10,14.5 H15" stroke="#2A5AA5" stroke-width="1.5"/><path d="M5,1 Q9,4 5,8 Q2,12 6,15" stroke="#C0303A" stroke-width="1.5" fill="none"/><path d="M11,1 Q7,4 11,8 Q14,12 10,15" stroke="#C0303A" stroke-width="1.5" fill="none"/><polygon points="16,12 16,16 12,16" fill="#000"/></svg>
<svg style="position:absolute;left:292px;top:108px;overflow:visible" width="16" height="16" viewBox="0 0 16 16"><rect x="5.5" y="4.5" width="10" height="11" fill="#E8F0F8" stroke="#2A5AA5"/><rect x="7" y="11" width="2" height="2" fill="#EFC94A"/><path d="M12,7 V14" stroke="#2A5AA5" stroke-dasharray="1 2"/><rect x="1" y="1" width="6" height="6" fill="#fff" stroke="#1C3F7A" stroke-width="1.6"/></svg>
<svg style="position:absolute;left:315px;top:108px;overflow:visible" width="16" height="16" viewBox="0 0 16 16"><text x="0" y="6" font-family="Liberation Sans" font-weight="bold" font-size="7" fill="#000">1:N</text><rect x="2.5" y="8.5" width="10" height="7" fill="#fff" stroke="#1C3F7A" stroke-width="1.5"/><path d="M5,12 H10" stroke="#2A5AA5"/></svg>
<svg style="position:absolute;left:338px;top:108px;overflow:visible" width="16" height="16" viewBox="0 0 16 16"><rect x="0.5" y="0.5" width="15" height="15" fill="#D8E4F4" stroke="#2A5AA5"/><path d="M1,3 H15" stroke="#2A5AA5" stroke-width="1.5"/><rect x="3" y="5.5" width="5" height="3" fill="#F4F0C0" stroke="#2A5AA5"/><rect x="3" y="10.5" width="5" height="3" fill="#F4F0C0" stroke="#2A5AA5"/><path d="M10,7 H13 M10,12 H13" stroke="#2A5AA5"/><polygon points="16,12 16,16 12,16" fill="#000"/></svg>
<svg style="position:absolute;left:368px;top:108px;overflow:visible" width="16" height="16" viewBox="0 0 16 16"><rect x="0.5" y="0.5" width="15" height="15" fill="#fff" stroke="#1C3F7A"/><path d="M2,3 H12 M3,3 V7 M6,3 V7 M9,3 V7" stroke="#1C3F7A"/><circle cx="10" cy="10" r="3.5" fill="none" stroke="#C0303A" stroke-width="1.3"/><circle cx="10" cy="10" r="1" fill="#C0303A"/></svg>
<svg style="position:absolute;left:391px;top:108px;overflow:visible" width="16" height="16" viewBox="0 0 16 16"><path d="M0.5,0.5 H15.5 V13.5 H9 L6,16 V13.5 H0.5 Z" fill="#F8F0B0" stroke="#303030"/><text x="8" y="11" text-anchor="middle" font-family="Liberation Sans" font-size="11" fill="#303030">?</text></svg>
<svg style="position:absolute;left:431px;top:108px;overflow:visible" width="16" height="16" viewBox="0 0 16 16"><path d="M0.5,4.5 H4.5 V0.5 H15.5 V14.5 H0.5 Z" fill="#E8F0F8" stroke="#1C3F7A" stroke-width="1.2"/><path d="M8,3 H12 V12" stroke="#1C3F7A" fill="none"/><path d="M3,9 L6,12 M6,9 L3,12" stroke="#C0303A"/></svg>
<svg style="position:absolute;left:454px;top:108px;overflow:visible" width="16" height="16" viewBox="0 0 16 16"><path d="M0.5,4.5 H4.5 V0.5 H15.5 V14.5 H0.5 Z" fill="#E8F0F8" stroke="#1C3F7A" stroke-width="1.2"/><path d="M8,3 H12 V9 M10,6 V11" stroke="#1C3F7A" fill="none"/><path d="M3,9 L6,12 M6,9 L3,12" stroke="#C0303A"/></svg>
<svg style="position:absolute;left:477px;top:108px;overflow:visible" width="16" height="16" viewBox="0 0 16 16"><path d="M1.5,13.5 V6.5 H7.5 V1.5 H14.5 V13.5 Z" fill="#D8E4F4" stroke="#1C3F7A" stroke-width="1.2"/><g stroke="#C0303A"><path d="M0,5 L3,8 M3,5 L0,8 M6,0 L9,3 M9,0 L6,3 M13,0 L16,3 M16,0 L13,3 M0,12 L3,15 M3,12 L0,15 M13,12 L16,15 M16,12 L13,15"/></g></svg>
<svg style="position:absolute;left:500px;top:108px;overflow:visible" width="16" height="16" viewBox="0 0 16 16"><rect x="1.5" y="2.5" width="13" height="10" fill="url(#pg)" stroke="#1C3F7A" stroke-width="1.2"/><g stroke="#C0303A"><path d="M0,1 L3,4 M3,1 L0,4 M13,11 L16,14 M16,11 L13,14"/></g></svg>
<svg style="position:absolute;left:523px;top:108px;overflow:visible" width="16" height="16" viewBox="0 0 16 16"><rect x="2.5" y="5.5" width="11" height="7" fill="url(#pg)" stroke="#1C3F7A"/><path d="M0,13.5 H16" stroke="#2A5AA5" stroke-width="1.5"/></svg>
<svg style="position:absolute;left:546px;top:108px;overflow:visible" width="16" height="16" viewBox="0 0 16 16"><rect x="2.5" y="0.5" width="11" height="5" fill="url(#pg)" stroke="#1C3F7A"/><path d="M0,7 H16" stroke="#1C3F7A" stroke-width="1.3"/><rect x="1.5" y="9.5" width="12" height="6" fill="none" stroke="#000" stroke-width="1.5" stroke-dasharray="2 1.5"/><path d="M13,8 L16,11 M16,8 L13,11" stroke="#C0303A"/></svg>
<svg style="position:absolute;left:586px;top:108px;overflow:visible" width="16" height="16" viewBox="0 0 16 16"><path d="M1,15 L13,3" stroke="#2A5AA5" stroke-width="1.5"/><path d="M8,3 L13,8 M10,1 V7 M7,5 H14" stroke="#2A5AA5" stroke-width="1.2"/><rect x="0" y="13" width="3" height="3" fill="#F00"/></svg>
<svg style="position:absolute;left:609px;top:108px;overflow:visible" width="16" height="16" viewBox="0 0 16 16"><rect x="0" y="9" width="16" height="4" fill="#2A5AA5"/><path d="M1,6 V9 M4,6 V9 M7,6 V9 M10,6 V9 M13,6 V9" stroke="#2A5AA5" stroke-width="1.3"/></svg>
<svg style="position:absolute;left:632px;top:108px;overflow:visible" width="16" height="16" viewBox="0 0 16 16"><polygon points="3,2 3,14 14,14" fill="#C06070"/><polygon points="3,6 3,14 10,14" fill="#E8C0C8"/><path d="M2,0 V16 M0,14.5 H16" stroke="#2A5AA5" stroke-width="1.5"/></svg>
<svg style="position:absolute;left:673px;top:108px;overflow:visible" width="16" height="16" viewBox="0 0 16 16"><path d="M0,13 H15 M5,13 L14,6" stroke="#2A5AA5" stroke-width="1.5"/><polygon points="0,13 5,10 5,16" fill="#2A5AA5"/><path d="M8,10 H15" stroke="#2A5AA5"/></svg>
<svg style="position:absolute;left:696px;top:108px;overflow:visible" width="16" height="16" viewBox="0 0 16 16"><circle cx="8" cy="8" r="7" fill="#D8E4F4" stroke="#1C3F7A" stroke-width="1.5"/><path d="M1,8 H15" stroke="#1C3F7A" stroke-width="1.5"/></svg>
<svg style="position:absolute;left:719px;top:108px;overflow:visible" width="16" height="16" viewBox="0 0 16 16"><path d="M1,6 Q1,9 4,9 H6 Q8,9 8,11 Q8,9 10,9 H12 Q15,9 15,6" stroke="#2A5AA5" stroke-width="1.5" fill="none"/></svg>
<svg style="position:absolute;left:742px;top:108px;overflow:visible" width="16" height="16" viewBox="0 0 16 16"><path d="M1,15 L5,3 H15 L13,9 H3" stroke="#2A5AA5" stroke-width="1.5" fill="none"/></svg>
<svg style="position:absolute;left:766px;top:108px;overflow:visible" width="16" height="16" viewBox="0 0 16 16"><rect x="1.5" y="5.5" width="9" height="10" fill="#fff" stroke="#1C3F7A" stroke-width="1.5"/><path d="M4,5 Q4,1 8,1 Q14,1 14,6 Q14,10 11,10" stroke="#1C3F7A" stroke-width="1.5" fill="none"/></svg>
<svg style="position:absolute;left:806px;top:108px;overflow:visible" width="16" height="16" viewBox="0 0 16 16"><path d="M2,13 L7,8 H14" stroke="#2A5AA5" stroke-width="1.5" fill="none"/><polygon points="0,16 2,10 5,13" fill="#2A5AA5"/><text x="8" y="7" font-family="Liberation Sans" font-size="8" fill="#C0303A">A</text></svg>
<svg style="position:absolute;left:829px;top:108px;overflow:visible" width="16" height="16" viewBox="0 0 16 16"><rect x="8" y="1" width="8" height="4" fill="#D04858"/><rect x="8" y="6" width="8" height="3" fill="#2A5AA5"/><rect x="8" y="10" width="8" height="4" fill="#D04858"/><path d="M3,15 L6,5 H8 M7,15 L10,7" stroke="#2A5AA5" stroke-width="1.5" fill="none"/><circle cx="3" cy="14" r="1.8" fill="#1C3F7A"/><circle cx="7" cy="14" r="1.8" fill="#1C3F7A"/></svg>
<svg style="position:absolute;left:852px;top:108px;overflow:visible" width="16" height="16" viewBox="0 0 16 16"><rect x="8" y="1" width="8" height="4" fill="#D04858"/><rect x="8" y="6" width="8" height="3" fill="#2A5AA5"/><rect x="8" y="10" width="8" height="4" fill="#D04858"/><path d="M0,7.5 H8" stroke="#1C3F7A" stroke-width="2" stroke-dasharray="2 1"/></svg>
<svg style="position:absolute;left:875px;top:108px;overflow:visible" width="16" height="16" viewBox="0 0 16 16"><rect x="8" y="1" width="8" height="4" fill="#D04858"/><rect x="8" y="6" width="8" height="3" fill="#2A5AA5"/><rect x="8" y="10" width="8" height="4" fill="#D04858"/><circle cx="3.5" cy="12" r="3" fill="#fff" stroke="#1C3F7A" stroke-width="1.3"/><path d="M6,10 L8,6" stroke="#1C3F7A"/></svg>
<svg style="position:absolute;left:898px;top:108px;overflow:visible" width="16" height="16" viewBox="0 0 16 16"><rect x="8" y="1" width="8" height="4" fill="#D04858"/><rect x="8" y="6" width="8" height="3" fill="#2A5AA5"/><rect x="8" y="10" width="8" height="4" fill="#D04858"/><path d="M2,16 V6 H8" stroke="#2A5AA5" stroke-width="2" fill="none"/></svg>
<svg style="position:absolute;left:921px;top:108px;overflow:visible" width="16" height="16" viewBox="0 0 16 16"><rect x="5" y="1" width="11" height="3" fill="#D04858"/><rect x="5" y="6" width="11" height="3" fill="#D04858"/><path d="M4,1 V13" stroke="#1C3F7A" stroke-width="1.5"/><polygon points="4,16 1,11 7,11" fill="#1C3F7A"/></svg>
<svg style="position:absolute;left:944px;top:108px;overflow:visible" width="16" height="16" viewBox="0 0 16 16"><rect x="1" y="3" width="15" height="3" fill="#D04858"/><rect x="1" y="9" width="15" height="3" fill="#D04858"/><path d="M0,7.5 H16" stroke="#2A5AA5" stroke-width="1.5"/></svg>
<svg style="position:absolute;left:973px;top:108px;overflow:visible" width="16" height="16" viewBox="0 0 16 16"><path d="M1,13 L8,5 H15" stroke="#2A5AA5" stroke-width="1.5" fill="none"/><polygon points="0,15 1,9 5,12" fill="#2A5AA5"/><path d="M9,5 V15" stroke="#C0303A" stroke-width="1.5"/><path d="M10,13 H15 M12.5,10.5 V15.5" stroke="#C0303A" stroke-width="1.3"/></svg>
<svg style="position:absolute;left:996px;top:108px;overflow:visible" width="16" height="16" viewBox="0 0 16 16"><path d="M1,13 L8,5 H15" stroke="#2A5AA5" stroke-width="1.5" fill="none"/><polygon points="0,15 1,9 5,12" fill="#2A5AA5"/><path d="M9,5 V15" stroke="#C0303A" stroke-width="1.5"/><path d="M10,13 H15" stroke="#C0303A" stroke-width="1.3"/></svg>
<svg style="position:absolute;left:1019px;top:108px;overflow:visible" width="16" height="16" viewBox="0 0 16 16"><path d="M1,13 L8,5 H15" stroke="#2A5AA5" stroke-width="1.5" fill="none"/><polygon points="0,15 1,9 5,12" fill="#2A5AA5"/><path d="M12,3 L10,15" stroke="#C0303A" stroke-width="1.8"/><path d="M12,4 H15 L14,8 H11" stroke="#C0303A" fill="none"/></svg>
<div style="position:absolute;left:361px;top:109px;width:1px;height:19px;background:#C5C2B2"></div>
<div style="position:absolute;left:967px;top:109px;width:1px;height:19px;background:#C5C2B2"></div>
<svg style="position:absolute;left:15px;top:136px;overflow:visible" width="16" height="16" viewBox="0 0 16 16"><path d="M7,0 V12 M11,0 V10 M5,3 H14 M5,7 H14" stroke="#000" stroke-width="1.6"/><circle cx="3" cy="8" r="2.2" fill="#fff" stroke="#5A78B0" stroke-width="1.3"/><circle cx="7" cy="13" r="2.2" fill="#fff" stroke="#5A78B0" stroke-width="1.3"/></svg>
<svg style="position:absolute;left:38px;top:136px;overflow:visible" width="16" height="16" viewBox="0 0 16 16"><path d="M3,14 Q4,7 11,5 V15 H3" stroke="#000" stroke-width="1.5" fill="none"/><circle cx="3" cy="14" r="2.2" fill="#fff" stroke="#5A78B0" stroke-width="1.3"/><circle cx="12" cy="3" r="2.2" fill="#fff" stroke="#5A78B0" stroke-width="1.3"/></svg>
<svg style="position:absolute;left:61px;top:136px;overflow:visible" width="16" height="16" viewBox="0 0 16 16"><path d="M8,1 V12" stroke="#000" stroke-width="1.3"/><circle cx="8" cy="14" r="2.2" fill="#fff" stroke="#5A78B0" stroke-width="1.3"/></svg>
<svg style="position:absolute;left:84px;top:136px;overflow:visible" width="16" height="16" viewBox="0 0 16 16"><path d="M2,0 V12 M14,0 V12 M2,4 H11" stroke="#000" stroke-width="1.3"/><polygon points="12,4 8,2 8,6" fill="#000"/><circle cx="2" cy="14" r="2.2" fill="#fff" stroke="#5A78B0" stroke-width="1.3"/><circle cx="14" cy="14" r="2.2" fill="#fff" stroke="#5A78B0" stroke-width="1.3"/></svg>
<svg style="position:absolute;left:107px;top:136px;overflow:visible" width="16" height="16" viewBox="0 0 16 16"><path d="M8,0 V7" stroke="#000" stroke-width="1.3"/><circle cx="8" cy="10" r="2.2" fill="#fff" stroke="#5A78B0" stroke-width="1.3"/><circle cx="8" cy="14" r="2.2" fill="#fff" stroke="#5A78B0" stroke-width="1.3"/></svg>
<svg style="position:absolute;left:130px;top:136px;overflow:visible" width="16" height="16" viewBox="0 0 16 16"><path d="M2,0 V13 H12" stroke="#000" stroke-width="1.3" fill="none"/><polygon points="11,13 8,11 8,15" fill="#000"/><circle cx="2" cy="14" r="2.2" fill="#fff" stroke="#5A78B0" stroke-width="1.3"/><circle cx="14" cy="14" r="2.2" fill="#fff" stroke="#5A78B0" stroke-width="1.3"/></svg>
<svg style="position:absolute;left:153px;top:136px;overflow:visible" width="16" height="16" viewBox="0 0 16 16"><path d="M5,0 V12 M10,0 V12" stroke="#000" stroke-width="1.3"/><circle cx="4" cy="14" r="2.2" fill="#fff" stroke="#5A78B0" stroke-width="1.3"/><circle cx="11" cy="14" r="2.2" fill="#fff" stroke="#5A78B0" stroke-width="1.3"/></svg>
<svg style="position:absolute;left:176px;top:136px;overflow:visible" width="16" height="16" viewBox="0 0 16 16"><path d="M8,0 V10" stroke="#000" stroke-width="1.3"/><circle cx="8" cy="13" r="2.2" fill="#fff" stroke="#5A78B0" stroke-width="1.3"/><path d="M6,15 L10,11" stroke="#5A78B0"/></svg>
<svg style="position:absolute;left:199px;top:136px;overflow:visible" width="16" height="16" viewBox="0 0 16 16"><path d="M8,2 V14 M2,8 H14 M4,4 L12,12 M12,4 L4,12" stroke="#000" stroke-width="1.3"/><path d="M3,3 L13,13 M13,3 L3,13" stroke="#3A6CC0" stroke-width="0.6"/></svg>
<svg style="position:absolute;left:240px;top:136px;overflow:visible" width="16" height="16" viewBox="0 0 16 16"><path d="M7,15 V3 H15" stroke="#2A5AA5" stroke-width="1.5" fill="none"/><path d="M0,15 H14" stroke="#2A5AA5" stroke-width="1.5"/><path d="M3,9 L7,14 L11,9" stroke="#2A5AA5" fill="none"/></svg>
<svg style="position:absolute;left:263px;top:136px;overflow:visible" width="16" height="16" viewBox="0 0 16 16"><path d="M8,15 V3 H16" stroke="#2A5AA5" stroke-width="1.5" fill="none"/><path d="M1,15 H15" stroke="#2A5AA5" stroke-width="1.5"/><path d="M2,1 V14" stroke="#2A5AA5" stroke-dasharray="2 1.5" stroke-width="1.3"/><path d="M4,9 L8,14 L12,9" stroke="#2A5AA5" fill="none"/></svg>
<svg style="position:absolute;left:286px;top:136px;overflow:visible" width="16" height="16" viewBox="0 0 16 16"><path d="M8,15 V3 H16" stroke="#2A5AA5" stroke-width="1.5" fill="none"/><path d="M0,15 H15" stroke="#2A5AA5" stroke-width="1.5"/><path d="M4,1 V14 M2,9 L5,14 L8,9" stroke="#C0303A" stroke-width="1.3" fill="none"/><path d="M9,9 L12,14 L15,9" stroke="#2A5AA5" fill="none"/></svg>
<svg style="position:absolute;left:309px;top:136px;overflow:visible" width="16" height="16" viewBox="0 0 16 16"><path d="M1.5,16 V2 H15 V9 H2" stroke="#2A5AA5" stroke-width="1.5" fill="url(#pg)"/><circle cx="2" cy="15" r="1.5" fill="#1C3F7A"/></svg>
<svg style="position:absolute;left:332px;top:136px;overflow:visible" width="16" height="16" viewBox="0 0 16 16"><path d="M7,15 V4 H15" stroke="#2A5AA5" stroke-width="1.5" fill="none"/><path d="M4,12 L10,15 L14,10" stroke="#2A5AA5" fill="none"/><path d="M0,8 L3,12 M3,8 L0,12 M0,13 L3,16 M3,13 L0,16" stroke="#000"/></svg>
<svg style="position:absolute;left:372px;top:136px;overflow:visible" width="16" height="16" viewBox="0 0 16 16"><path d="M0.5,0 V7 M15.5,0 V7 M1,3.5 H15" stroke="#2A5AA5" stroke-width="1.5"/><polygon points="1,3.5 5,1 5,6" fill="#2A5AA5"/><polygon points="15,3.5 11,1 11,6" fill="#2A5AA5"/><path d="M8,5 V15 L10,13 L12,16 L13,15 L11,12 H14 Z" fill="#fff" stroke="#000"/></svg>
<svg style="position:absolute;left:401px;top:136px;overflow:visible" width="16" height="16" viewBox="0 0 16 16"><path d="M1,2 V14 M15,2 V14 M1,8 H15" stroke="#2A5AA5" stroke-width="1.5"/><polygon points="2,8 6,5.5 6,10.5" fill="#2A5AA5"/><polygon points="14,8 10,5.5 10,10.5" fill="#2A5AA5"/></svg>
<svg style="position:absolute;left:424px;top:136px;overflow:visible" width="16" height="16" viewBox="0 0 16 16"><path d="M3,1 H13 M3,15 H13 M8,1 V15" stroke="#2A5AA5" stroke-width="1.5"/><polygon points="8,2 5.5,6 10.5,6" fill="#2A5AA5"/><polygon points="8,14 5.5,10 10.5,10" fill="#2A5AA5"/></svg>
<svg style="position:absolute;left:447px;top:136px;overflow:visible" width="16" height="16" viewBox="0 0 16 16"><path d="M2,3 L6,0 M12,16 L16,12 M3,3 L13,13" stroke="#2A5AA5" stroke-width="1.5"/><polygon points="3,3 8,4 4,8" fill="#2A5AA5"/><polygon points="13,13 8,12 12,8" fill="#2A5AA5"/></svg>
<svg style="position:absolute;left:470px;top:136px;overflow:visible" width="16" height="16" viewBox="0 0 16 16"><path d="M1,3 V13 M15,3 V13 M1,8 H15" stroke="#2A5AA5" stroke-width="1.5"/><polygon points="14,8 10,5.5 10,10.5" fill="#2A5AA5"/></svg>
<svg style="position:absolute;left:499px;top:136px;overflow:visible" width="16" height="16" viewBox="0 0 16 16"><circle cx="8" cy="8" r="7" fill="none" stroke="#404858" stroke-width="1.4"/><path d="M4,4 L12,12" stroke="#2A5AA5" stroke-width="1.5"/><polygon points="3,3 8,4 4,8" fill="#2A5AA5"/><polygon points="13,13 8,12 12,8" fill="#2A5AA5"/></svg>
<svg style="position:absolute;left:522px;top:136px;overflow:visible" width="16" height="16" viewBox="0 0 16 16"><circle cx="8" cy="8" r="7" fill="none" stroke="#404858" stroke-width="1.4"/><path d="M8,8 L4,4" stroke="#2A5AA5" stroke-width="1.5"/><polygon points="3,3 8,4 4,8" fill="#2A5AA5"/></svg>
<svg style="position:absolute;left:545px;top:136px;overflow:visible" width="16" height="16" viewBox="0 0 16 16"><path d="M1,12 Q2,3 9,2" stroke="#404858" stroke-width="1.4" fill="none"/><path d="M3,5 L7,9 L9,7 L13,12" stroke="#2A5AA5" stroke-width="1.5" fill="none"/><polygon points="2,4 7,5 4,8" fill="#2A5AA5"/><path d="M14,14 H16 M15,13 V15" stroke="#404858"/></svg>
<svg style="position:absolute;left:568px;top:136px;overflow:visible" width="16" height="16" viewBox="0 0 16 16"><path d="M2,8 Q7,0 13,6" stroke="#2A5AA5" stroke-width="1.5" fill="none"/><path d="M0,14.5 H16" stroke="#2A5AA5" stroke-width="1.5"/><path d="M3,9 V14 M13,6 V14" stroke="#2A5AA5"/></svg>
<svg style="position:absolute;left:591px;top:136px;overflow:visible" width="16" height="16" viewBox="0 0 16 16"><path d="M1,8 Q7,0 14,6" stroke="#2A5AA5" stroke-width="1.5" fill="none"/><path d="M1,6 V12 M15,5 V11" stroke="#2A5AA5" stroke-width="1.3"/><polygon points="14,7 10,4 12,9" fill="#2A5AA5"/></svg>
<svg style="position:absolute;left:620px;top:136px;overflow:visible" width="16" height="16" viewBox="0 0 16 16"><path d="M1.5,1 V15 M14.5,1 V15" stroke="#2A5AA5" stroke-width="1.2"/><rect x="3.5" y="8.5" width="11" height="6" fill="none" stroke="#2A5AA5" stroke-dasharray="2 1"/><path d="M2,3 H14 M6,1 V6 M10,1 V6" stroke="#2A5AA5"/></svg>
<svg style="position:absolute;left:643px;top:136px;overflow:visible" width="16" height="16" viewBox="0 0 16 16"><path d="M1.5,1 V15 M14.5,4 V12" stroke="#2A5AA5" stroke-width="1.5"/><path d="M2,4 H14 M2,12 H14" stroke="#2A5AA5" stroke-width="1.5"/><polygon points="3,4 7,2 7,6" fill="#2A5AA5"/><polygon points="3,12 7,10 7,14" fill="#2A5AA5"/></svg>
<svg style="position:absolute;left:666px;top:136px;overflow:visible" width="16" height="16" viewBox="0 0 16 16"><path d="M1,4 V12 M6,4 V12 M10,4 V12 M15,4 V12 M1,8 H15" stroke="#2A5AA5" stroke-width="1.5"/></svg>
<svg style="position:absolute;left:689px;top:136px;overflow:visible" width="16" height="16" viewBox="0 0 16 16"><path d="M1,4 V12 M8,4 V12 M15,4 V12 M1,8 H15" stroke="#2A5AA5" stroke-width="1.5"/></svg>
<svg style="position:absolute;left:730px;top:136px;overflow:visible" width="16" height="16" viewBox="0 0 16 16"><rect x="0" y="0" width="15" height="15" fill="#404040"/><path d="M0,4 L4,0 M0,9 L9,0 M0,14 L14,0 M4,15 L15,4 M9,15 L15,9" stroke="#ECE9D8"/><rect x="3" y="3" width="9" height="9" fill="#C8DCF0" stroke="#1C3F7A"/></svg>
<svg style="position:absolute;left:753px;top:136px;overflow:visible" width="16" height="16" viewBox="0 0 16 16"><path d="M0,13 H14" stroke="#2A5AA5" stroke-width="1.5"/><path d="M2,12 L6,5 M6,12 L10,5 M10,12 L14,5 M3,6 H16" stroke="#2A5AA5" stroke-width="1.4"/></svg>
<svg style="position:absolute;left:776px;top:136px;overflow:visible" width="16" height="16" viewBox="0 0 16 16"><rect x="0" y="6" width="16" height="5" fill="#2A5AA5"/><path d="M3,6 V11 M8,6 V11 M13,6 V11" stroke="#ECE9D8"/><path d="M0,7 H16 M0,10 H16" stroke="#1C3F7A"/></svg>
<svg style="position:absolute;left:799px;top:136px;overflow:visible" width="16" height="16" viewBox="0 0 16 16"><path d="M0,4 H16 M0,13 H16" stroke="#2A5AA5" stroke-width="1.5"/><path d="M1,5 L4,12 L7,5 L10,12 L13,5 L16,12" stroke="#2A5AA5" stroke-width="1.3" fill="none"/></svg>
<svg style="position:absolute;left:822px;top:136px;overflow:visible" width="16" height="16" viewBox="0 0 16 16"><rect x="0.5" y="4.5" width="15" height="7" fill="none" stroke="#2A5AA5" stroke-width="1.3"/><path d="M3,5 V11 M6,5 V11 M9,5 V11 M12,5 V11" stroke="#2A5AA5" stroke-width="1.3"/></svg>
<svg style="position:absolute;left:864px;top:136px;overflow:visible" width="16" height="16" viewBox="0 0 16 16"><text x="0" y="8" font-family="Liberation Sans" font-size="9" fill="#C0303A">A</text><path d="M1,12 H13" stroke="#2A5AA5" stroke-width="1.6"/><polygon points="16,12 10,9 10,15" fill="#2A5AA5"/></svg>
<svg style="position:absolute;left:887px;top:136px;overflow:visible" width="16" height="16" viewBox="0 0 16 16"><text x="0" y="8" font-family="Liberation Sans" font-size="9" fill="#C0303A">A</text><path d="M1,12 H11" stroke="#2A5AA5" stroke-width="1.6"/><polygon points="13,12 8,9 8,15" fill="#2A5AA5"/><path d="M14.5,7 V16" stroke="#2A5AA5" stroke-width="1.6"/></svg>
<svg style="position:absolute;left:910px;top:136px;overflow:visible" width="16" height="16" viewBox="0 0 16 16"><text x="0" y="11" font-family="Liberation Sans" font-size="10" fill="#C0303A">A</text><text x="9" y="11" font-family="Liberation Sans" font-size="10" fill="#C0303A">A</text><rect x="7" y="6" width="2" height="2" fill="#C0303A"/></svg>
<div style="position:absolute;left:396px;top:137px;width:1px;height:19px;background:#C5C2B2"></div>
<div style="position:absolute;left:494px;top:137px;width:1px;height:19px;background:#C5C2B2"></div>
<div style="position:absolute;left:615px;top:137px;width:1px;height:19px;background:#C5C2B2"></div>
<svg style="position:absolute;left:1101px;top:137px;overflow:visible" width="16" height="16" viewBox="0 0 16 16"><text x="0" y="6" font-family="Liberation Sans" font-weight="bold" font-size="7" fill="#000">1:N</text><rect x="2.5" y="8.5" width="10" height="7" fill="#fff" stroke="#1C3F7A" stroke-width="1.5"/><path d="M5,12 H10" stroke="#2A5AA5"/></svg>
<svg style="position:absolute;left:1123px;top:137px;overflow:visible" width="16" height="16" viewBox="0 0 16 16"><text x="0" y="6" font-family="Liberation Sans" font-weight="bold" font-size="7" fill="#000">▾1:N</text><rect x="2.5" y="8.5" width="10" height="7" fill="#fff" stroke="#1C3F7A" stroke-width="1.5"/><path d="M5,12 H10" stroke="#2A5AA5"/></svg></body></html>
